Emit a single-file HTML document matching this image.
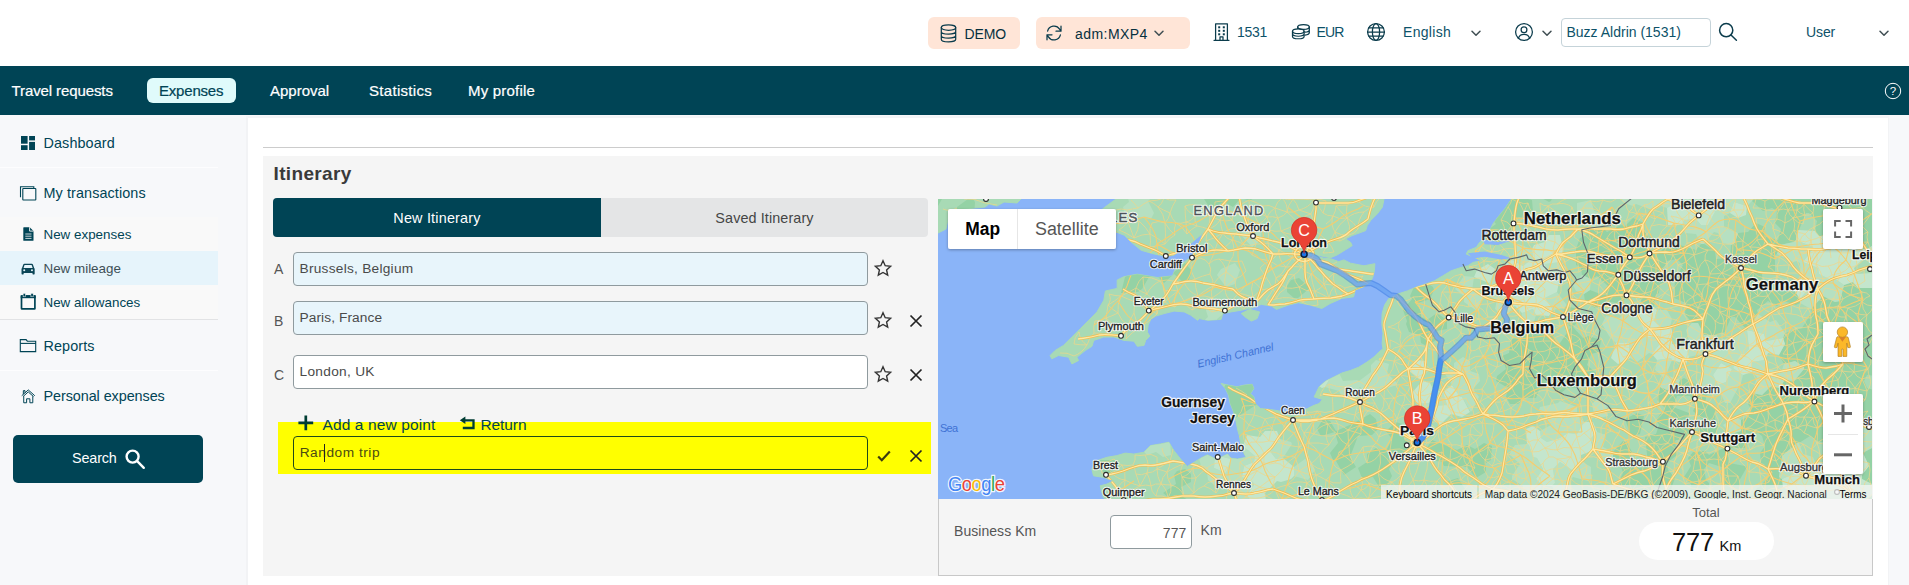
<!DOCTYPE html>
<html lang="en">
<head>
<meta charset="utf-8">
<title>New mileage</title>
<style>
*{box-sizing:border-box;margin:0;padding:0}
html,body{width:1909px;height:585px;overflow:hidden;background:#f7f8fa;font-family:"Liberation Sans",sans-serif;color:#004455}
.abs{position:absolute}
.t{position:absolute;white-space:nowrap;line-height:1}
svg{position:absolute;overflow:visible}
#top{position:absolute;left:0;top:0;width:1909px;height:66px;background:#fff}
.pill{position:absolute;top:17px;height:32px;background:#ffe5d7;border-radius:6px}
.tt{font-size:14px;color:#0d5269;top:25px}
.td{font-size:14px;color:#06303e;top:27px}
.ic{stroke:#0b3c4c;fill:none;stroke-width:1.25;stroke-linecap:round;stroke-linejoin:round}
#nav{position:absolute;left:0;top:66px;width:1909px;height:49px;background:#004455}
.nt{font-size:15px;color:#fff;top:16.800px;-webkit-text-stroke:.2px currentColor}
.st{font-size:14.4px;letter-spacing:.1px;color:#004455}
.st2{font-size:13.4px;letter-spacing:0;color:#004455}
.in{font-size:14px;letter-spacing:.1px;color:#4a4a4a}
.iv{font-size:13.700px;color:#4a4a4a}
.box{position:absolute;left:293px;width:575px;height:34px;border:1px solid #8f9a9e;border-radius:4px}
</style>
</head>
<body>
<div id="top">
  <div class="pill" style="left:928px;width:92px"></div>
  <div class="pill" style="left:1036px;width:154px"></div>
  <!-- database icon -->
  <svg class="ic" style="left:940px;top:24px" width="17" height="19" viewBox="0 0 17 19"><ellipse cx="8.5" cy="3.6" rx="7.2" ry="2.7"/><path d="M1.3,3.6v11.6c0,1.5 3.2,2.7 7.2,2.7s7.2,-1.2 7.2,-2.7V3.6M1.3,7.5c0,1.5 3.2,2.7 7.2,2.7s7.2,-1.2 7.2,-2.7M1.3,11.4c0,1.5 3.2,2.7 7.2,2.7s7.2,-1.2 7.2,-2.7"/></svg>
  <span class="t td" style="left:964.5px;letter-spacing:-.1px">DEMO</span>
  <!-- refresh icon -->
  <svg class="ic" style="left:1045px;top:24px" width="18" height="18" viewBox="0 0 18 18"><path d="M2.6,7.2A6.6,6.6 0 0 1 14.6,5.2L16,7.2M16,2.2v5h-5M15.4,10.8A6.6,6.6 0 0 1 3.4,12.8L2,10.8M2,15.8v-5h5"/></svg>
  <span class="t td" style="left:1075px;letter-spacing:.45px">adm:MXP4</span>
  <svg class="ic" style="left:1154px;top:30px;stroke-width:1.5;stroke:#3f4d52" width="10" height="7" viewBox="0 0 10 7"><path d="M1,1.2l4,4 4,-4"/></svg>
  <!-- building -->
  <svg class="ic" style="left:1213px;top:22px" width="17" height="20" viewBox="0 0 17 20"><path d="M2.6,18.2V1.8h11.8v16.4M1,18.3h15M7,18v-3.2h3V18" /><g fill="#0b3c4c" stroke="none"><rect x="5.2" y="4.3" width="2" height="2"/><rect x="9.8" y="4.3" width="2" height="2"/><rect x="5.2" y="7.8" width="2" height="2"/><rect x="9.8" y="7.8" width="2" height="2"/><rect x="5.2" y="11.3" width="2" height="2"/><rect x="9.8" y="11.3" width="2" height="2"/></g></svg>
  <span class="t tt" style="left:1237px;letter-spacing:-.3px">1531</span>
  <!-- coins -->
  <svg class="ic" style="left:1291px;top:23px" width="20" height="16.500" viewBox="0 0 20 18" preserveAspectRatio="none"><ellipse cx="12.5" cy="4.3" rx="5.8" ry="2.6"/><path d="M6.7,4.3v1.6M18.3,4.3v6.4c0,1.2 -1.8,2.2 -4.3,2.5M18.3,7.5c0,1.2 -1.8,2.2 -4.3,2.5"/><ellipse cx="7.3" cy="9" rx="5.8" ry="2.6"/><path d="M1.5,9v5.6c0,1.4 2.6,2.6 5.8,2.6s5.8,-1.2 5.8,-2.6V9M1.5,11.8c0,1.4 2.6,2.6 5.8,2.6s5.8,-1.2 5.8,-2.6"/></svg>
  <span class="t tt" style="left:1316.5px;letter-spacing:-.9px">EUR</span>
  <!-- globe -->
  <svg class="ic" style="left:1366px;top:22px" width="20" height="20" viewBox="0 0 20 20"><circle cx="10" cy="10" r="8.4"/><ellipse cx="10" cy="10" rx="3.6" ry="8.4"/><path d="M1.6,10h16.8M2.8,5.8h14.4M2.8,14.2h14.4"/></svg>
  <span class="t tt" style="left:1403px;letter-spacing:.3px">English</span>
  <svg class="ic" style="left:1471px;top:30px;stroke-width:1.5;stroke:#3f4d52" width="10" height="7" viewBox="0 0 10 7"><path d="M1,1.2l4,4 4,-4"/></svg>
  <!-- user -->
  <svg class="ic" style="left:1514px;top:22px" width="20" height="20" viewBox="0 0 20 20"><circle cx="10" cy="10" r="8.4"/><circle cx="10" cy="7.8" r="2.9"/><path d="M4.4,16.2c.8,-2.6 3,-3.8 5.6,-3.8s4.8,1.2 5.6,3.8"/></svg>
  <svg class="ic" style="left:1542px;top:30px;stroke-width:1.5;stroke:#3f4d52" width="10" height="7" viewBox="0 0 10 7"><path d="M1,1.2l4,4 4,-4"/></svg>
  <div class="abs" style="left:1561px;top:18px;width:150px;height:29px;border:1px solid #c5d3d9;border-radius:4px;background:#fff"></div>
  <span class="t tt" style="left:1566.5px">Buzz Aldrin (1531)</span>
  <svg class="ic" style="left:1718px;top:22px;stroke-width:1.5" width="20" height="20" viewBox="0 0 20 20"><circle cx="8.2" cy="8.2" r="6.6"/><path d="M13,13l5.4,5.2"/></svg>
  <span class="t tt" style="left:1806px;letter-spacing:-.1px">User</span>
  <svg class="ic" style="left:1879px;top:30px;stroke-width:1.5;stroke:#3f4d52" width="10" height="7" viewBox="0 0 10 7"><path d="M1,1.2l4,4 4,-4"/></svg>
</div>
<div id="nav">
  <span class="t nt" style="left:11.5px;letter-spacing:-.1px">Travel requests</span>
  <div class="abs" style="left:147px;top:12px;width:89px;height:25px;background:#e0fbfb;border-radius:6px"></div>
  <span class="t nt" style="left:159px;color:#004455;letter-spacing:-.2px">Expenses</span>
  <span class="t nt" style="left:270px">Approval</span>
  <span class="t nt" style="left:369px;letter-spacing:.3px">Statistics</span>
  <span class="t nt" style="left:468px;letter-spacing:.2px">My profile</span>
  <svg style="left:1884.100px;top:16px" width="18" height="18" viewBox="0 0 18 18"><circle cx="9" cy="9" r="7.700" fill="none" stroke="#fff" stroke-width="1"/><text x="9" y="13.200" font-size="11.500" fill="#fff" text-anchor="middle" font-family="Liberation Sans, sans-serif">?</text></svg>
</div>
<!-- sidebar -->
<div id="side">
  <div class="abs" style="left:0;top:167px;width:218px;height:1px;background:#fdfdfe"></div>
  <div class="abs" style="left:0;top:217px;width:218px;height:102px;background:#f9f9f9"></div>
  <div class="abs" style="left:0;top:251px;width:218px;height:34px;background:#e6f4fb"></div>
  <div class="abs" style="left:0;top:319px;width:218px;height:1px;background:#e2e3e5"></div>
  <div class="abs" style="left:0;top:370px;width:218px;height:1px;background:#fdfdfe"></div>
  <!-- dashboard icon -->
  <svg style="left:21px;top:136px" width="14" height="14" viewBox="0 0 14 14" fill="#004455"><rect x="0" y="0" width="6.6" height="7.7"/><rect x="8.1" y="0" width="5.9" height="4.4"/><rect x="0" y="9.2" width="6.6" height="4.8"/><rect x="8.1" y="5.9" width="5.9" height="8.1"/></svg>
  <span class="t st" style="left:43.5px;top:135.9px">Dashboard</span>
  <svg style="left:19px;top:185px" width="18" height="16" viewBox="0 0 18 16" fill="none" stroke="#004455" stroke-width="1.100"><path d="M1.500,12.200V1.700H14.800V3.400"/><rect x="3.800" y="3.500" width="13" height="11.500" rx=".5"/></svg>
  <span class="t st" style="left:43.5px;top:185.8px">My transactions</span>
  <!-- file icon -->
  <svg style="left:23px;top:227px" width="11" height="14" viewBox="0 0 11 14"><path d="M0.3,0.8a.6,.6 0 0 1 .6,-.6h5.8l3.8,3.8v9.2a.6,.6 0 0 1 -.6,.6h-9a.6,.6 0 0 1 -.6,-.6z" fill="#004455"/><path d="M6.6,.2v3.9h3.9" fill="none" stroke="#f9f9f9" stroke-width=".9"/><path d="M2.3,7h6.2M2.3,9.2h6.2M2.3,11.4h6.2" stroke="#f9f9f9" stroke-width=".8"/></svg>
  <span class="t st2" style="left:43.5px;top:227.5px">New expenses</span>
  <!-- car icon -->
  <svg style="left:21px;top:262.500px" width="14.200" height="11.800" viewBox="0 0 16 14" fill="#0a4556"><path d="M3.6,.8h8.8c.6,0 1.1,.4 1.3,.9l1.6,4.4c.3,.2 .5,.6 .5,1v5.7c0,.4 -.3,.7 -.7,.7h-1.2c-.4,0 -.7,-.3 -.7,-.7v-1H2.8v1c0,.4 -.3,.7 -.7,.7H.9c-.4,0 -.7,-.3 -.7,-.7V7.100c0,-.4 .2,-.8 .5,-1l1.600,-4.400c.2,-.5 .7,-.9 1.300,-.9z"/><path d="M3.800,2.400h8.400l1.200,3.400H2.600z" fill="#e6f4fb"/><circle cx="3.400" cy="8.600" r="1.200" fill="#e6f4fb"/><circle cx="12.600" cy="8.600" r="1.200" fill="#e6f4fb"/></svg>
  <span class="t st2" style="left:43.5px;top:261.5px;color:#3d4f56">New mileage</span>
  <!-- calendar icon -->
  <svg style="left:20px;top:293px" width="16" height="17" viewBox="0 0 16 17"><rect x="1.500" y="3" width="13.400" height="12.900" rx=".4" fill="none" stroke="#004455" stroke-width="1.700"/><rect x=".7" y="2.200" width="15" height="3" fill="#004455"/><rect x="3.100" y=".4" width="2.300" height="3.400" fill="#004455" stroke="#f9f9f9" stroke-width=".5"/><rect x="10.900" y=".4" width="2.300" height="3.400" fill="#004455" stroke="#f9f9f9" stroke-width=".5"/></svg>
  <span class="t st2" style="left:43.5px;top:295.5px">New allowances</span>
  <!-- folder icon -->
  <svg style="left:19px;top:338px" width="18" height="15" viewBox="0 0 18 15" fill="none" stroke="#004455" stroke-width="1.100"><path d="M1.300,13.600V1.600h5.800l1.200,1.600h8.400v10.400z"/><path d="M1.300,5.400h15.400"/></svg>
  <span class="t st" style="left:43.5px;top:338.800px">Reports</span>
  <!-- house icon -->
  <svg style="left:21px;top:388.500px" width="14.500" height="14.500" viewBox="0 0 16 16" fill="none" stroke="#004455" stroke-width="1.100" stroke-linejoin="round"><path d="M.8,7.400L8,1l7.200,6.400M2.200,8.400L8,3.200l5.800,5.200M3,8v7.200h3.200v-4.400h3.600v4.400H13V8M2.600,5.600V1.800h1.800v2.400"/></svg>
  <span class="t st" style="left:43.5px;top:388.800px;letter-spacing:-.07px">Personal expenses</span>
  <div class="abs" style="left:13px;top:435px;width:190px;height:48px;background:#004455;border-radius:5px"></div>
  <span class="t st" style="left:72px;top:451px;color:#fff;letter-spacing:-.15px">Search</span>
  <svg style="left:124px;top:448px" width="22" height="22" viewBox="0 0 22 22" fill="none" stroke="#fff" stroke-width="2.400"><circle cx="8.600" cy="8.600" r="6"/><path d="M13.200,13.200l6.600,6.600" stroke-linecap="round"/></svg>
</div>
<!-- main -->
<div id="main" class="abs" style="left:248px;top:118px;width:1640px;height:467px;background:#fff"></div>
<div class="abs" style="left:246px;top:117px;width:2px;height:468px;background:#f2f3f5"></div>
<div class="abs" style="left:1888px;top:117px;width:1px;height:468px;background:#f2f3f5"></div>
<div class="abs" style="left:246px;top:116px;width:1643px;height:2px;background:#f3f4f6"></div>
<div class="abs" style="left:263px;top:147px;width:1610px;height:1px;background:#ccc"></div>
<div class="abs" style="left:263px;top:156px;width:1610px;height:420px;background:#f5f5f5"></div>
<span class="t" style="left:273.500px;top:164px;font-size:19px;font-weight:bold;letter-spacing:.35px;color:#3a3a3a">Itinerary</span>
<!-- tabs -->
<div class="abs" style="left:273px;top:198px;width:655px;height:39px;background:#e4e5e6;border-radius:4px"></div>
<div class="abs" style="left:273px;top:198px;width:328px;height:39px;background:#004455;border-radius:4px 0 0 4px"></div>
<span class="t st" style="left:273px;width:328px;text-align:center;top:210.800px;color:#fff;letter-spacing:.2px">New Itinerary</span>
<span class="t st" style="left:601px;width:327px;text-align:center;top:210.800px;color:#454545">Saved Itinerary</span>
<!-- rows -->
<span class="t in" style="left:274px;top:262px;color:#555">A</span>
<div class="box" style="top:252px;background:#e8f5fb"></div>
<span class="t iv" style="left:299.500px;top:262.300px;letter-spacing:.26px">Brussels, Belgium</span>
<span class="t in" style="left:274px;top:314px;color:#555">B</span>
<div class="box" style="top:301px;background:#e8f5fb"></div>
<span class="t iv" style="left:299.500px;top:311.300px;letter-spacing:.1px">Paris, France</span>
<span class="t in" style="left:274px;top:367.800px;color:#555">C</span>
<div class="box" style="top:355px;background:#fff"></div>
<span class="t iv" style="left:299.500px;top:365.300px;letter-spacing:.3px">London, UK</span>
<!-- yellow -->
<div class="abs" style="left:278px;top:422px;width:653px;height:52px;background:#ffff00"></div>
<!-- add/return -->
<svg style="left:298px;top:415px" width="16" height="16" viewBox="0 0 16 16"><path d="M7.800,.6v14.600M.4,7.900h14.800" stroke="#003d33" stroke-width="2.700"/></svg>
<span class="t" style="left:322.500px;top:417px;font-size:15.500px;letter-spacing:.12px;color:#004455">Add a new point</span>
<svg style="left:459px;top:416px" width="17" height="14" viewBox="0 0 17 14" fill="none" stroke="#003d33" stroke-width="2.300"><path d="M5.500,4.300h9v7.700H3.800"/><path d="M6.400,.6L.8,4.300l5.600,3.700z" fill="#003d33" stroke="none"/></svg>
<span class="t" style="left:480.500px;top:417px;font-size:15.500px;letter-spacing:-.1px;color:#004455">Return</span>
<div class="box" style="top:436px;border:1.500px solid #1f4a1a"></div>
<span class="t iv" style="left:299.700px;top:446.300px;color:#4b4b12;letter-spacing:.53px">Random trip</span>
<div class="abs" style="left:324px;top:443.500px;width:1px;height:18px;background:#222"></div>
<!-- stars / x -->
<svg width="0" height="0" style="position:absolute"><defs>
<path id="star" d="M8,.8l2.200,4.900 5.400,.6 -4,3.600 1.100,5.200L8,12.500l-4.700,2.600 1.100,-5.200L.4,6.300l5.400,-.6z" fill="none" stroke="#333" stroke-width="1.400" stroke-linejoin="miter"/>
<path id="xx" d="M1.500,1.500l11,11M12.500,1.500l-11,11" fill="none" stroke="#222" stroke-width="1.700"/>
</defs></svg>
<svg style="left:875px;top:260px" width="16" height="16"><use href="#star"/></svg>
<svg style="left:875px;top:312px" width="16" height="16"><use href="#star"/></svg>
<svg style="left:875px;top:366px" width="16" height="16"><use href="#star"/></svg>
<svg style="left:909px;top:314px" width="14" height="14"><use href="#xx"/></svg>
<svg style="left:909px;top:368px" width="14" height="14"><use href="#xx"/></svg>
<svg style="left:909px;top:449px" width="14" height="14"><use href="#xx"/></svg>
<svg style="left:877px;top:450px" width="14" height="12" viewBox="0 0 14 12"><path d="M1.200,6.400l3.600,3.800L12.800,1.600" fill="none" stroke="#3a3a10" stroke-width="2.200"/></svg>
<!-- bottom box -->
<div class="abs" style="left:938px;top:499px;width:935px;height:77px;border:1px solid #c8c8c8;border-top:none"></div>
<span class="t in" style="left:954px;top:524px;color:#555;letter-spacing:.05px">Business Km</span>
<div class="abs" style="left:1110px;top:515px;width:82px;height:34px;border:1px solid #8f9a9e;border-radius:4px;background:#fff"></div>
<span class="t in" style="left:1110px;width:76.500px;text-align:right;top:526px;color:#555">777</span>
<span class="t in" style="left:1200.500px;top:523px;color:#555">Km</span>
<span class="t" style="left:1656px;width:100px;text-align:center;top:506.300px;font-size:13px;color:#555">Total</span>
<div class="abs" style="left:1639px;top:522px;width:135px;height:38px;border-radius:19px;background:#fff"></div>
<span class="t" style="left:1672px;top:529.500px;font-size:25.500px;letter-spacing:-.2px;color:#111">777</span>
<span class="t" style="left:1719.500px;top:538.500px;font-size:14.500px;color:#111">Km</span>
<!-- map -->
<svg id="map" style="left:938px;top:199px;overflow:hidden;font-family:'Liberation Sans',sans-serif" width="934" height="300" viewBox="0 0 934 300"><defs><filter id="sh" x="-10%" y="-10%" width="120%" height="130%"><feDropShadow dx="0" dy="1" stdDeviation="1.5" flood-color="#000" flood-opacity=".3"/></filter></defs><defs><clipPath id="landclip"><path d="M178.0,-2.0 178.0,0.0 166.3,8.6 160.0,14.0 158.0,22.0 165.0,30.0 178.0,32.9 186.4,36.3 193.0,43.0 203.2,51.3 215.0,54.7 226.7,57.2 235.0,56.4 248.5,48.0 258.5,39.6 263.5,35.4 266.0,31.0 262.0,42.0 253.5,58.0 243.4,64.7 236.7,71.5 234.5,76.9 219.4,78.5 199.3,75.2 185.9,77.7 179.2,81.0 179.2,89.4 167.4,92.0 165.8,101.2 159.0,112.9 150.7,121.3 142.3,129.7 133.9,138.0 125.5,146.4 117.1,151.5 112.1,156.5 113.8,159.8 120.5,156.5 130.6,158.2 133.9,164.9 140.6,161.5 138.9,158.2 147.3,151.5 154.0,147.3 155.7,141.4 165.8,138.0 175.8,138.0 185.9,141.4 195.9,142.2 199.3,147.3 206.0,146.4 207.7,141.4 211.8,137.2 209.3,133.0 210.2,126.3 212.7,120.4 217.7,117.1 226.1,114.6 236.1,112.1 246.2,112.9 252.9,116.3 259.6,121.3 261.3,119.6 269.7,121.3 283.1,120.4 284.8,114.6 293.1,112.9 303.2,111.2 314.9,108.7 323.3,105.4 333.4,107.0 338.4,110.4 350.1,106.2 360.2,103.7 372.0,106.0 383.8,109.5 392.2,104.5 403.9,99.4 415.6,97.8 417.3,91.0 425.7,87.7 432.4,82.7 434.7,78.5 436.4,71.8 436.9,64.7 426.0,66.8 412.6,64.2 405.9,60.9 400.8,62.6 392.5,59.7 385.8,59.2 379.0,57.5 372.0,56.5 379.0,55.9 385.8,57.5 392.5,58.7 399.2,55.9 407.5,50.8 414.2,46.6 412.6,43.3 407.5,39.9 414.2,36.6 421.0,34.1 427.7,31.6 429.3,26.5 432.7,21.5 439.4,14.8 444.4,8.1 446.0,0.0 446.0,-2.0Z"/><path d="M-2.0,-2.0 83.0,-2.0 83.0,0.0 79.0,4.0 66.0,3.0 59.0,7.0 51.0,5.0 47.0,8.0 26.0,10.0 10.0,20.0 8.0,30.0 0.0,34.0 -2.0,35.0Z"/><path d="M303.2,114.6 311.6,110.4 321.6,112.9 319.1,119.6 313.3,122.1 308.2,118.8Z"/><path d="M573.5,-2.0 573.5,0.0 566.8,9.8 560.0,18.1 555.0,24.8 551.7,31.6 546.7,38.3 541.6,43.3 538.3,48.3 529.9,51.7 528.2,55.0 536.6,58.4 543.3,61.7 534.9,63.4 529.9,66.8 523.2,68.4 513.1,71.8 504.8,76.8 496.4,81.8 489.4,84.4 479.3,87.7 469.3,91.9 459.2,95.2 450.8,99.4 446.6,106.1 444.1,114.5 443.8,124.6 445.0,134.6 444.1,144.7 445.0,149.7 440.8,153.1 435.8,158.1 429.0,163.1 420.7,168.2 412.3,171.5 403.9,174.0 396.2,177.8 387.8,182.0 381.1,187.8 377.8,194.6 376.1,197.9 384.5,200.4 381.1,204.6 376.1,206.3 369.4,209.6 362.7,212.2 352.6,213.8 342.6,212.2 332.5,210.5 322.5,209.6 317.4,204.6 315.8,197.9 312.4,194.6 315.8,189.5 314.1,185.3 305.7,186.2 299.0,187.8 290.6,186.2 283.1,184.5 287.3,189.5 290.6,196.2 292.3,204.6 295.6,213.0 298.2,223.0 299.8,231.4 301.3,236.5 303.0,246.6 306.3,255.0 308.0,258.3 299.6,260.0 292.9,259.2 289.6,255.0 282.9,258.3 276.1,259.2 269.4,255.8 262.7,259.2 256.0,263.3 249.3,267.5 242.6,260.0 235.9,251.6 230.9,243.2 222.5,244.9 212.5,246.6 205.8,253.3 195.7,255.0 187.3,254.1 178.9,256.6 168.9,258.3 158.8,261.7 153.8,270.0 155.5,276.8 165.5,278.4 175.6,281.8 168.9,285.1 162.2,286.8 163.8,293.5 165.5,298.5 170.6,302.0 936.0,302.0 936.0,-2.0Z"/></clipPath><clipPath id="mapclip"><rect width="934" height="300"/></clipPath></defs>
<g clip-path="url(#mapclip)">
<rect width="934" height="300" fill="#8ab4f8"/>
<path d="M178.0,-2.0 178.0,0.0 166.3,8.6 160.0,14.0 158.0,22.0 165.0,30.0 178.0,32.9 186.4,36.3 193.0,43.0 203.2,51.3 215.0,54.7 226.7,57.2 235.0,56.4 248.5,48.0 258.5,39.6 263.5,35.4 266.0,31.0 262.0,42.0 253.5,58.0 243.4,64.7 236.7,71.5 234.5,76.9 219.4,78.5 199.3,75.2 185.9,77.7 179.2,81.0 179.2,89.4 167.4,92.0 165.8,101.2 159.0,112.9 150.7,121.3 142.3,129.7 133.9,138.0 125.5,146.4 117.1,151.5 112.1,156.5 113.8,159.8 120.5,156.5 130.6,158.2 133.9,164.9 140.6,161.5 138.9,158.2 147.3,151.5 154.0,147.3 155.7,141.4 165.8,138.0 175.8,138.0 185.9,141.4 195.9,142.2 199.3,147.3 206.0,146.4 207.7,141.4 211.8,137.2 209.3,133.0 210.2,126.3 212.7,120.4 217.7,117.1 226.1,114.6 236.1,112.1 246.2,112.9 252.9,116.3 259.6,121.3 261.3,119.6 269.7,121.3 283.1,120.4 284.8,114.6 293.1,112.9 303.2,111.2 314.9,108.7 323.3,105.4 333.4,107.0 338.4,110.4 350.1,106.2 360.2,103.7 372.0,106.0 383.8,109.5 392.2,104.5 403.9,99.4 415.6,97.8 417.3,91.0 425.7,87.7 432.4,82.7 434.7,78.5 436.4,71.8 436.9,64.7 426.0,66.8 412.6,64.2 405.9,60.9 400.8,62.6 392.5,59.7 385.8,59.2 379.0,57.5 372.0,56.5 379.0,55.9 385.8,57.5 392.5,58.7 399.2,55.9 407.5,50.8 414.2,46.6 412.6,43.3 407.5,39.9 414.2,36.6 421.0,34.1 427.7,31.6 429.3,26.5 432.7,21.5 439.4,14.8 444.4,8.1 446.0,0.0 446.0,-2.0Z" fill="#a8dab5" stroke="#a8dab5" stroke-width="1" stroke-linejoin="round"/>
<path d="M-2.0,-2.0 83.0,-2.0 83.0,0.0 79.0,4.0 66.0,3.0 59.0,7.0 51.0,5.0 47.0,8.0 26.0,10.0 10.0,20.0 8.0,30.0 0.0,34.0 -2.0,35.0Z" fill="#a8dab5" stroke="#a8dab5" stroke-width="1" stroke-linejoin="round"/>
<path d="M303.2,114.6 311.6,110.4 321.6,112.9 319.1,119.6 313.3,122.1 308.2,118.8Z" fill="#a8dab5" stroke="#a8dab5" stroke-width="1" stroke-linejoin="round"/>
<path d="M573.5,-2.0 573.5,0.0 566.8,9.8 560.0,18.1 555.0,24.8 551.7,31.6 546.7,38.3 541.6,43.3 538.3,48.3 529.9,51.7 528.2,55.0 536.6,58.4 543.3,61.7 534.9,63.4 529.9,66.8 523.2,68.4 513.1,71.8 504.8,76.8 496.4,81.8 489.4,84.4 479.3,87.7 469.3,91.9 459.2,95.2 450.8,99.4 446.6,106.1 444.1,114.5 443.8,124.6 445.0,134.6 444.1,144.7 445.0,149.7 440.8,153.1 435.8,158.1 429.0,163.1 420.7,168.2 412.3,171.5 403.9,174.0 396.2,177.8 387.8,182.0 381.1,187.8 377.8,194.6 376.1,197.9 384.5,200.4 381.1,204.6 376.1,206.3 369.4,209.6 362.7,212.2 352.6,213.8 342.6,212.2 332.5,210.5 322.5,209.6 317.4,204.6 315.8,197.9 312.4,194.6 315.8,189.5 314.1,185.3 305.7,186.2 299.0,187.8 290.6,186.2 283.1,184.5 287.3,189.5 290.6,196.2 292.3,204.6 295.6,213.0 298.2,223.0 299.8,231.4 301.3,236.5 303.0,246.6 306.3,255.0 308.0,258.3 299.6,260.0 292.9,259.2 289.6,255.0 282.9,258.3 276.1,259.2 269.4,255.8 262.7,259.2 256.0,263.3 249.3,267.5 242.6,260.0 235.9,251.6 230.9,243.2 222.5,244.9 212.5,246.6 205.8,253.3 195.7,255.0 187.3,254.1 178.9,256.6 168.9,258.3 158.8,261.7 153.8,270.0 155.5,276.8 165.5,278.4 175.6,281.8 168.9,285.1 162.2,286.8 163.8,293.5 165.5,298.5 170.6,302.0 936.0,302.0 936.0,-2.0Z" fill="#a8dab5" stroke="#a8dab5" stroke-width="1" stroke-linejoin="round"/>
<g clip-path="url(#landclip)">
<path d="M0,7 4,-0 10,-2 11,-5 -5,-5 -5,8ZM30,-0 19,8 18,14 22,17 36,18 37,3 35,0 37,-5 26,-5ZM272,9 274,9 286,3 295,8 303,-1 312,2 319,-4 319,-5 268,-5 266,-0ZM200,93 204,90 211,78 218,76 226,84 236,75 246,84 251,81 254,72 247,64 236,73 228,66 221,69 212,59 208,60 203,69 193,72 191,75 187,78 183,94ZM349,93 356,99 360,99 372,89 361,79 353,81 349,87ZM469,122 468,125 471,133 482,136 483,144 487,146 497,142 498,132 509,130 509,121 499,114 489,121 484,118 480,104 492,100 496,91 495,88 492,86 476,88 472,97 474,100 465,111ZM276,196 275,206 284,215 287,216 293,222 318,206 328,207 334,191 331,187 319,188 315,170 305,171 300,185 289,183 283,194ZM392,222 385,220 379,230 383,237 397,233 400,244 392,254 395,261 398,262 406,276 418,268 412,258 420,237 434,236 440,230 438,220 432,215 414,225 398,232ZM438,249 429,255 429,263 420,269 424,279 435,278 441,288 448,288 454,277 451,270 460,258 464,258 470,247 469,241 466,240 464,225 458,223 448,232 454,240 449,250 444,251ZM493,261 504,263 506,267 529,268 538,279 548,273 548,264 553,261 554,247 546,244 537,250 529,246 519,251 494,241 487,252 488,255ZM179,268 178,261 161,261 158,254 147,253 142,259 142,269 151,272 160,267 169,277ZM235,302 235,305 252,305 252,302 245,298 243,288 253,283 253,275 247,270 239,272 236,276 238,285 225,294ZM527,290 520,279 510,282 512,294 519,298ZM600,-3 611,3 613,2 616,-5 600,-5ZM586,-1 584,-5 569,-5 570,3 565,7 554,4 551,17 558,25 547,33 540,28 530,33 530,38 538,44 547,40 557,47 563,42 565,33 573,31 577,20 581,18 586,19 595,13 594,1ZM638,66 643,69 644,76 653,80 659,77 670,87 665,96 652,91 646,95 647,103 657,109 663,107 667,102 684,105 687,99 701,95 705,108 716,108 718,96 721,94 722,85 736,80 726,69 729,62 739,60 745,66 737,81 736,99 748,104 747,115 754,124 760,124 766,136 779,136 787,133 793,118 797,118 809,131 820,115 819,111 830,102 839,107 846,102 858,106 862,104 862,100 852,85 846,84 843,89 830,92 825,89 824,75 837,73 837,56 839,55 842,46 856,43 858,41 859,32 861,31 868,14 871,14 879,22 877,32 881,37 894,38 896,33 895,26 905,14 909,14 914,30 917,32 916,46 928,51 935,46 937,36 939,33 939,16 937,4 939,4 939,-5 902,-5 898,-3 894,-5 881,-5 879,-3 869,-5 853,-5 852,-3 846,-5 837,-5 833,-2 829,-5 824,-5 815,-0 814,2 825,12 834,9 839,12 837,24 843,30 840,41 828,38 827,28 818,24 810,33 800,34 797,44 793,46 792,59 778,60 777,52 766,45 763,45 758,51 732,43 723,52 714,52 712,50 713,39 705,32 706,24 695,19 687,27 683,26 669,33 664,28 651,30 647,37 642,39 638,50ZM640,110 628,107 626,109 629,125 633,128 622,144 618,145 613,127 598,133 594,129 589,129 580,139 573,140 571,154 564,157 568,170 559,177 558,182 570,189 568,198 572,205 580,205 586,199 598,199 601,191 612,188 622,195 629,189 642,189 646,187 658,176 658,174 649,166 653,155 661,153 663,141 650,137 645,139 635,128 643,119ZM682,302 687,305 700,305 702,301 711,299 715,287 732,293 737,279 730,271 729,264 739,256 737,242 738,241 752,241 758,234 749,225 751,214 735,208 739,197 752,197 758,206 755,212 766,222 759,234 768,240 776,237 781,226 777,220 778,211 767,203 770,192 746,179 742,181 737,194 722,188 719,201 727,209 718,221 721,226 718,235 707,238 710,264 708,268 701,269 693,258 694,253 688,242 685,242 675,253 675,262 682,264 685,274 681,282 683,290 681,293 665,294 664,296 651,300 648,295 633,296 629,301 631,305 679,305ZM693,237 702,235 706,217 704,216 699,214 687,220ZM746,278 753,285 752,298 759,303 760,305 840,305 836,297 845,288 844,280 841,278 844,257 859,244 861,244 872,237 881,243 885,243 894,255 903,254 906,243 905,240 910,228 908,225 911,216 897,206 906,197 912,196 920,202 916,213 926,221 939,218 939,192 929,189 926,182 929,176 939,177 939,85 935,89 920,89 915,83 906,86 902,102 897,103 885,97 873,110 874,113 864,129 847,134 845,139 847,145 841,156 846,165 857,162 866,168 866,170 856,182 847,181 841,189 833,187 824,196 814,194 810,205 813,210 810,218 803,221 803,232 793,235 791,249 807,249 811,238 820,234 824,237 827,247 822,254 823,264 826,265 832,277 821,288 819,289 811,301 798,302 802,285 801,282 809,268 807,267 791,264 790,250 786,249 771,256 767,252 755,253 750,259 753,267ZM771,264 787,269 787,298 780,301 771,296 771,284 768,281 766,270ZM937,239 934,249 925,254 931,267 924,276 924,280 934,285 937,293 929,301 930,305 939,305 939,239ZM739,301 733,295 720,305 739,305Z" fill="#94d2a5" fill-rule="evenodd"/>
<path d="M187,17 196,21 200,18 213,20 216,14 210,2 218,-5 189,-5 191,3 185,8ZM322,42 323,35 319,28 313,27 303,34 303,36 314,48ZM283,70 279,76 288,88 297,85 302,71 297,64ZM280,130 279,120 285,115 285,108 274,101 267,108 270,118 262,125 262,128 271,137ZM516,164 516,168 507,175 522,198 524,198 533,213 541,198 535,190 542,182 541,175 532,172 532,162 525,158ZM419,181 405,182 400,172 396,172 387,188 401,192 403,196 411,197 422,188 427,192 440,192 459,186 459,184 449,174 451,165 438,161 433,166 433,173 421,182ZM475,218 480,223 494,220 493,207 509,206 505,193 495,190 491,204 479,205 475,212ZM216,236 201,247 209,256 218,253 225,258 233,256 232,241 218,238ZM284,239 282,240 275,247 275,254 261,259 264,271 269,273 270,281 280,289 282,288 297,293 299,296 296,305 313,305 314,304 309,296 316,286 315,283 304,278 306,267 316,263 317,257 305,247 298,250ZM293,260 288,274 276,269 277,256ZM342,240 331,251 338,260 345,259 354,245 353,243ZM370,281 377,271 373,262 367,260 356,268 356,277ZM462,296 451,293 448,305 465,305ZM666,15 656,12 653,1 639,4 639,16 647,19 651,30 664,28ZM574,61 585,67 595,59 594,50 580,45 577,47ZM628,69 623,63 607,65 608,78 621,83 625,82ZM551,84 548,96 559,101 557,110 567,119 575,108 564,99 567,89 572,86 564,69 557,70 552,83ZM635,86 638,92 646,95 652,91 653,80 644,76ZM541,111 545,98 534,92 536,78 526,77 517,90 526,97 526,103 539,112ZM607,99 615,111 626,109 628,107 628,105 619,93ZM598,116 595,110 584,114 583,122 589,129 594,129ZM603,239 609,243 622,239 630,234 639,235 646,223 639,216 639,208 622,202 620,204 602,208 601,211 613,225 613,226 602,232ZM657,251 661,262 669,266 675,262 675,253 665,248 668,236 659,233 652,240ZM572,256 582,265 574,277 574,280 585,287 584,297 586,298 599,297 604,286 598,280 605,270 599,259 595,258 591,246 589,245 577,246 572,254ZM615,270 617,284 614,287 619,299 629,301 633,296 633,280 635,278 650,282 653,280 653,268 643,262 634,271 622,263ZM566,300 559,301 546,293 542,293 539,303 540,305 569,305 568,301ZM735,-5 710,-5 702,-4 701,-5 685,-5 684,2 686,4 695,7 698,5 714,11 720,6 729,9 734,6 743,10 754,3 761,11 774,8 777,13 770,26 763,26 758,20 746,21 744,26 747,34 758,35 763,45 766,45 776,33 780,34 785,44 793,46 797,44 800,34 786,28 786,17 792,14 796,3 809,7 814,2 815,-0 812,-5 798,-5 795,0 785,-3 785,-5 767,-5 754,-2 752,-5 739,-5 736,-4ZM716,122 724,129 732,128 734,120 729,111 719,111ZM671,137 678,144 691,144 692,159 699,163 711,154 714,155 721,146 718,138 709,138 699,116 687,113 682,119 668,117 664,125ZM751,142 748,146 751,158 767,154 769,156 765,171 766,173 758,186 770,192 780,188 787,204 792,204 800,189 802,188 805,176 795,169 803,155 807,155 811,150 809,131 826,135 828,142 845,139 847,134 838,121 832,123 820,115 809,131 796,138 796,150 788,151 780,144 779,136 766,136 760,124 754,124 748,131ZM783,164 794,170 788,183 780,186 775,176ZM728,176 734,161 733,159 719,161 717,171 725,178 722,188 737,194 742,181ZM657,220 670,217 668,204 660,199 654,205ZM905,14 895,26 896,33 914,30 909,14ZM839,55 855,63 859,62 862,64 863,79 872,83 872,88 862,100 862,104 873,110 885,97 897,103 902,102 906,86 896,79 891,80 881,75 880,69 865,63 875,50 875,48 858,41 856,43 842,46ZM937,36 935,46 928,51 929,56 937,65 934,74 939,85 939,33ZM814,194 824,196 833,187 841,189 847,181 856,182 866,170 866,168 857,162 846,165 844,171 831,171 827,161 814,163 814,173 819,178ZM798,218 785,226 793,235 803,232 803,221ZM921,231 923,234 918,243 906,243 903,254 910,261 934,249 937,239 939,239 939,218 926,221ZM875,269 877,263 875,258 865,255 861,244 859,244 844,257 841,278 844,280 860,273 862,274ZM920,296 910,304 910,305 930,305 929,301ZM894,303 890,301 885,305 894,305ZM856,300 851,305 860,305Z" fill="#b6e0c1" fill-rule="evenodd"/>
<path d="M572,86 567,89 564,99 575,108 577,107 584,114 595,110 598,116 611,117 615,111 607,99 619,93 621,83 608,78 607,65 623,63 625,50 622,36 610,36 607,43 596,46 594,50 595,59 585,67 574,61 571,62 564,69ZM551,84 552,83 557,70 550,65 539,71 536,78ZM495,190 492,184 485,182 488,162 477,161 471,172 484,182 474,194 479,205 491,204ZM375,183 384,189 387,188 396,172 389,166 378,166 373,174ZM502,226 513,215 524,218 532,213 524,198 522,198 514,186 505,193 509,206 493,207 494,220ZM588,230 589,245 591,246 595,258 599,259 605,270 598,280 604,286 614,287 617,284 615,270 622,263 634,271 643,262 643,256 656,251 652,240 659,233 655,223 646,223 639,235 630,234 622,239 609,243 603,239 602,232 595,227ZM306,267 304,278 315,283 316,286 309,296 314,304 328,302 327,294 339,282 343,283 353,280 356,277 356,268 345,259 338,260 331,251 342,240 339,232 327,232 322,238 309,236 305,247 317,257 316,263ZM277,256 276,269 288,274 293,260ZM754,-2 767,-5 752,-5ZM809,7 796,3 792,14 800,19 808,16ZM744,26 746,21 758,20 763,26 770,26 777,13 774,8 761,11 754,3 743,10 734,6 729,9 730,26ZM721,146 714,155 719,161 733,159 734,161 748,165 751,158 748,146 734,145 734,131 732,128 724,129 716,122 719,111 716,108 705,108 699,116 709,138 718,138ZM809,131 811,150 807,155 803,155 795,169 805,176 814,173 814,163 827,161 830,154 841,156 847,145 845,139 828,142 826,135ZM680,165 692,159 691,144 678,144 673,159ZM780,186 788,183 794,170 783,164 775,176ZM875,50 865,63 880,69 881,75 891,80 896,79 906,86 915,83 920,89 935,89 939,85 934,74 918,75 916,69 929,56 928,51 916,46 911,49 894,37 881,37 877,32 861,31 859,32 858,41 875,48ZM863,79 852,85 862,100 872,88 872,83ZM906,243 918,243 923,234 921,231 910,228 905,240ZM910,261 903,254 894,255 889,263 877,263 875,269 862,274 860,273 844,280 845,288 857,295 856,300 860,305 885,305 890,301 894,303 905,301 910,304 920,296 929,301 937,293 934,285 924,280 924,276 931,267 925,254Z" fill="#c4e6cd" fill-rule="evenodd"/>
<path d="M379,212Q374,214 369,213M361,248Q353,247 345,245M806,11Q804,15 800,19M859,229Q854,229 851,234M917,114Q914,111 910,109M837,221Q836,227 840,232M900,194Q904,196 908,198M917,114Q921,118 922,122M209,95Q203,93 198,89M839,78Q841,72 839,67M783,261Q786,257 790,255M254,111Q260,105 260,97M361,272Q367,268 373,265M661,111Q657,107 653,106M771,222Q777,223 781,227M848,164Q844,158 837,157M861,109Q866,109 870,109M311,25Q309,31 312,36M809,241Q806,247 803,252M588,177Q588,171 583,168M828,126Q826,135 819,139M540,294Q536,296 531,297M638,49Q631,51 625,50M551,87Q547,91 548,96M724,152Q730,150 736,152M209,274Q212,280 213,287M421,3Q426,-1 433,-2M670,196Q676,199 682,196M668,283Q666,287 667,292M835,30Q835,24 830,21M687,148Q690,144 691,140M605,142Q610,142 614,142M873,119Q874,124 870,128M311,25Q305,27 301,30M802,88Q804,84 807,81M311,1Q318,3 325,7M563,133Q556,131 549,134M669,95Q669,100 669,105M751,182Q753,176 759,173M541,149Q543,153 545,157M535,191Q540,191 544,190M305,45Q300,38 301,30M542,203Q538,205 534,208M594,289Q596,294 601,295M399,235Q394,240 391,246M674,297Q676,293 675,288M538,106Q534,107 530,108M662,55Q667,51 674,52M246,102Q241,103 237,108M644,150Q649,154 651,160M467,241Q467,233 469,226M746,30Q752,31 758,30M634,94Q633,89 632,83M624,282Q629,282 633,280M931,264Q933,271 931,279M560,116Q559,108 561,100M694,95Q701,97 707,94M227,45Q231,39 237,36M841,180Q845,179 849,177M515,230Q512,228 508,225M867,287Q862,286 857,285M285,34Q279,42 277,51M677,31Q681,36 686,40M791,246Q790,240 788,234M880,162Q881,158 884,154M572,95Q572,89 569,83M484,114Q483,122 485,129M630,228Q630,235 627,240M331,242Q327,236 322,233M462,261Q459,269 463,276M573,27Q573,22 574,16M468,299Q473,296 476,292M748,232Q751,238 751,244M845,34Q848,37 851,41M769,105Q763,105 760,109M502,181Q503,174 500,167M697,40Q691,44 687,50M606,100Q610,104 615,107M463,147Q458,143 452,141M285,34Q277,39 268,42M674,248Q676,240 681,234M515,230Q520,234 524,238M638,49Q642,48 644,44M470,166Q472,161 472,156M830,68Q834,65 839,67M504,200Q503,195 503,190M931,264Q929,270 923,273M801,114Q805,112 806,107M569,117Q571,112 569,108M784,74Q790,76 795,78M566,265Q571,267 576,265M624,282Q628,286 633,289M900,107Q900,112 898,116M731,74Q727,72 722,71M705,175Q706,180 710,182M605,264Q600,269 595,273M618,300Q619,295 615,291M851,41Q856,43 862,42M685,158Q692,162 699,165M896,148Q889,150 884,154M903,74Q899,75 894,76M520,203Q516,202 514,197M195,266Q197,270 198,275M806,55Q804,48 805,42M561,76Q565,71 571,69M574,221Q575,216 580,213M749,44Q745,48 745,54M721,185Q723,189 727,192M627,63Q622,64 620,69M710,58Q711,51 715,45M774,138Q779,140 784,143M485,129Q479,130 475,135M839,289Q841,282 844,274M824,49Q821,45 819,41M531,68Q540,67 546,62M798,99Q794,100 790,99M803,252Q799,245 796,238M806,107Q809,104 812,101M800,277Q799,283 793,288M257,80Q252,73 253,65M916,278Q915,282 912,286M601,217Q606,219 608,225M396,74Q394,80 397,86M587,89Q585,94 586,100M332,62Q334,71 338,79M751,150Q745,148 742,143M588,177Q596,179 603,176M373,61Q379,61 382,66M626,295Q629,290 633,289M589,27Q590,31 586,35M750,126Q754,121 758,117M802,198Q800,204 796,208M660,259Q656,257 651,258M632,114Q631,110 633,105M927,82Q922,87 915,86M694,225Q697,228 702,228M520,203Q519,209 522,214M508,225Q510,221 514,218M723,266Q726,263 726,259M715,174Q709,173 705,175M879,244Q885,244 890,247M605,201Q605,207 608,212M669,222Q662,218 654,218M811,90Q809,86 807,81M650,172Q644,171 639,173M390,43Q384,37 377,31M923,141Q927,145 932,144M791,86Q798,91 798,99M789,268Q787,264 783,261M578,276Q576,280 572,283M573,27Q577,25 581,23M645,297Q641,300 635,300M452,251Q455,258 462,261M495,151Q487,146 478,146M624,24Q628,21 630,16M735,196Q738,191 744,188M769,6Q764,7 761,10M837,221Q832,222 828,226M742,81Q747,80 750,76M841,180Q835,180 829,180M560,89Q554,93 548,96M616,223Q612,224 608,225M757,142Q762,142 767,143M765,254Q772,255 778,251M688,22Q694,19 699,15M709,35Q713,32 713,27M861,109Q863,113 864,118M915,86Q921,89 924,93M537,168Q541,162 545,157M544,224Q546,230 544,236M774,168Q778,163 784,160M761,282Q761,286 759,290M687,148Q695,148 700,154M670,19Q664,18 657,20M668,214Q672,212 677,215M784,74Q781,71 778,68M801,114Q803,119 806,123M356,76Q349,81 348,89M737,8Q732,4 726,4M899,92Q898,97 895,100M452,251Q447,254 442,254M661,12Q656,7 652,2M662,55Q657,58 651,60M521,190Q528,193 535,191M479,215Q474,218 469,216M537,269Q534,264 534,259M593,300Q597,298 601,295M857,269Q861,273 864,278M905,27Q908,23 908,19M896,20Q893,14 886,10M669,39Q672,45 674,52M890,247Q896,253 899,260M654,288Q652,281 654,276M762,154Q766,157 771,159M700,103Q691,103 686,110M916,278Q920,276 923,273M288,73Q279,78 275,87M246,297Q243,288 244,278M349,13Q355,18 360,24M853,106Q848,105 843,105M500,232Q504,234 509,237M677,31Q673,29 668,28M644,287Q637,285 633,280M360,295Q351,298 342,302M287,89Q292,84 297,80M612,150Q613,146 614,142M537,168Q533,172 527,173M220,8Q226,15 227,24M514,246Q508,246 502,243M879,229Q874,228 869,226M562,182Q565,178 568,174M550,164Q549,160 545,157M223,285Q219,278 219,270M819,55Q823,53 824,49M219,115Q220,108 215,103M926,71Q922,74 917,75M715,101Q712,96 707,94M781,99Q779,95 780,90M636,38Q640,41 644,44M636,28Q633,22 630,16M443,225Q440,229 434,230M202,287Q206,280 209,274M781,28Q774,29 768,32M669,271Q664,271 659,268M647,133Q639,130 633,125M499,271Q501,267 501,262M370,300Q367,292 369,284M849,298Q849,294 849,289M911,68Q907,63 901,63M561,213Q565,207 568,201M878,65Q882,60 886,53M818,19Q820,26 818,32M561,213Q557,214 553,217M521,106Q525,106 530,108M578,257Q581,253 585,251M598,106Q597,111 595,116M651,258Q656,255 658,249M802,173Q800,168 798,164M636,28Q638,33 636,38M703,143Q701,148 700,154M828,292Q833,297 838,302M781,99Q782,106 782,113M550,177Q549,184 544,190M538,242Q534,240 532,235M914,10Q907,9 901,12M651,182Q657,181 663,178M624,282Q620,287 615,291M517,128Q514,124 516,119M915,54Q919,50 924,50M635,300Q633,295 633,289M278,294Q277,288 275,282M769,105Q764,101 764,95M324,91Q319,94 315,98M554,53Q546,53 539,55M304,62Q298,63 292,62M270,30Q272,23 272,16M878,88Q883,85 885,80M834,105Q835,110 833,114M702,228Q701,233 698,237M581,288Q575,288 572,291M373,15Q367,13 361,11M668,148Q671,142 674,136M847,3Q848,7 850,11M913,131Q907,132 902,132M828,292Q824,289 823,285M903,205Q904,200 908,198M363,35Q352,37 343,32M350,218Q349,223 346,227M190,23Q188,17 189,11M230,299Q237,295 246,297M223,285Q228,286 233,286M553,288Q556,293 561,295M784,143Q790,147 791,154M755,98Q749,95 745,92M572,291Q575,297 582,297M281,60Q287,61 292,62M715,2Q715,6 715,11M624,201Q631,198 639,197M720,61Q724,64 729,65M459,220Q457,227 455,234M784,74Q788,69 787,62M793,288Q794,294 793,301M606,235Q611,239 617,242M924,27Q927,30 930,33M266,287Q269,283 275,282M900,107Q895,109 891,108M523,247Q527,249 531,247M735,56Q738,61 740,66M312,36Q319,32 321,25M630,228Q626,233 620,234M745,197Q749,194 754,193M549,134Q552,140 552,146M720,61Q716,53 715,45M514,246Q510,242 509,237M645,297Q647,292 644,287M458,186Q460,193 467,196M883,216Q880,219 875,219M573,27Q570,22 563,21M209,274Q212,265 207,256M337,9Q331,5 325,7M826,246Q818,246 812,251M924,159Q927,165 930,170M864,118Q867,123 870,128M760,71Q758,64 756,56M729,145Q727,148 724,152M721,108Q719,104 715,101M815,174Q822,174 827,171M743,132Q745,138 742,143M235,82Q229,80 222,82M743,178Q739,175 736,172M794,57Q799,54 806,55M846,225Q842,222 837,221M928,301Q924,296 925,290M531,161Q525,162 520,167M883,216Q879,222 879,229M790,213Q783,212 777,214M740,66Q746,69 750,76M550,248Q552,243 554,237M661,12Q658,16 657,20M657,193Q655,196 651,199M418,87Q412,87 407,89M732,135Q727,136 722,139M447,187Q451,194 456,199M421,3Q427,9 436,8M885,102Q883,95 887,89M834,147Q836,152 837,157M572,291Q570,296 568,301M818,19Q824,19 830,21M183,97Q177,102 170,106M338,79Q338,85 335,90M616,54Q614,49 617,43M801,114Q798,119 797,125M463,147Q466,138 475,135M605,115Q600,117 595,116M638,49Q633,45 627,40M802,184Q800,191 802,198M879,229Q875,225 875,219M923,141Q920,144 917,146M743,132Q737,132 732,135M608,40Q607,45 606,50M442,286Q442,280 440,274M752,207Q757,201 754,193M668,214Q669,218 669,222M718,221Q722,218 725,214M605,264Q605,269 608,272M641,118Q636,118 632,114M332,62Q332,53 330,44M909,179Q908,184 909,189M304,62Q306,67 308,72M707,162Q705,157 700,154M929,192Q929,196 927,201M677,189Q683,189 688,188M634,8Q635,13 638,16M227,103Q228,97 226,92M844,255Q849,253 854,252M394,196Q390,191 391,185M574,221Q569,223 564,223M702,228Q701,222 699,217M195,266Q198,261 197,256M840,168Q836,164 831,163M612,150Q607,153 600,153M573,187Q575,191 577,195M328,297Q318,301 308,298M781,28Q786,27 790,29M918,18Q913,21 908,19M346,268Q350,262 357,258M293,284Q291,276 289,268M653,82Q657,85 661,86M826,246Q827,241 830,238M636,28Q630,28 624,24M475,98Q468,104 459,102M373,15Q377,9 376,1M618,117Q616,112 615,107M867,287Q863,283 864,278M837,221Q841,217 846,215M924,103Q919,98 913,96M507,154Q505,149 506,145M854,252Q852,248 851,243M848,123Q844,128 838,127M721,108Q718,114 717,121M667,292Q671,290 675,288M573,187Q566,191 557,193M899,92Q894,90 887,89M652,28Q650,24 647,21M341,51Q339,58 332,62M691,200Q696,205 702,207M164,263Q169,268 174,274M646,278Q649,273 649,267M549,134Q555,139 560,145M770,235Q769,240 772,244M703,296Q704,292 707,288M235,82Q239,86 240,92M871,211Q864,206 863,198M607,90Q603,94 597,95M903,205Q899,201 894,200M598,106Q599,101 597,95M851,243Q853,238 851,234M563,21Q567,27 567,34M858,129Q863,135 868,141M653,82Q650,76 649,70M704,274Q698,272 694,266M594,289Q587,289 581,288M587,89Q592,92 597,95M373,75Q367,74 363,68M812,193Q807,195 802,198M589,122Q585,120 582,116M593,214Q590,220 586,225M868,257Q871,261 872,266M736,89Q737,93 736,98M903,250Q896,250 890,247M520,203Q515,206 511,209M802,88Q796,86 791,86M492,224Q496,223 500,222M746,254Q742,254 739,251M282,21Q288,23 294,21M410,231Q416,225 417,216M512,188Q508,191 503,190M830,212Q830,207 827,204M433,-2Q435,3 436,8M715,45Q709,49 701,48M573,142Q573,146 575,151M557,258Q558,253 559,249M5,10Q12,13 19,9M452,251Q451,258 452,264M894,217Q897,221 902,222M312,36Q310,41 305,45M652,28Q650,35 653,42M866,218Q865,225 859,229M657,193Q649,191 641,188M257,80Q257,88 260,97M463,276Q465,269 471,265M311,25Q309,14 299,9M902,273Q899,278 897,283M646,224Q644,220 643,216M814,206Q818,209 822,212M551,87Q547,88 543,89M768,32Q763,30 758,30M707,125Q711,122 717,121M689,32Q687,36 686,40M717,121Q723,120 729,118M890,264Q884,261 882,255M529,266Q533,267 537,269M844,255Q846,260 849,264M651,182Q658,186 665,188M915,54Q921,56 926,59M774,168Q773,172 771,176M797,223Q798,231 796,238M774,151Q772,155 771,159M503,214Q507,207 504,200M577,129Q576,136 573,142M245,265Q237,268 229,273M609,191Q614,194 619,193M870,171Q867,177 860,179M551,87Q556,86 560,89M541,253Q537,256 534,259M577,38Q573,34 573,27M711,194Q716,194 720,196M800,144Q800,151 805,157M716,133Q721,135 722,139M856,31Q861,34 867,35M881,122Q883,116 883,111M669,271Q675,274 681,279M651,144Q658,144 664,140M751,182Q747,185 744,188M568,174Q575,179 582,183M924,103Q927,98 932,97M879,244Q884,241 889,237M726,259Q721,262 715,262M506,124Q501,120 498,115M835,188Q837,193 841,195M828,226Q835,228 840,232M504,253Q507,259 512,261M698,237Q693,237 690,233M734,236Q738,238 742,239M576,265Q582,266 586,271M910,271Q906,264 899,260M479,215Q478,210 475,206M883,216Q889,217 894,217M541,253Q540,248 538,242M388,281Q396,286 401,294M409,19Q408,13 409,6M212,48Q213,42 212,35M566,265Q560,263 554,267M826,188Q831,187 835,188M329,18Q335,17 340,19M929,116Q934,113 935,107M806,107Q810,108 813,112M331,242Q338,242 345,245M780,53Q783,50 785,45M914,29Q920,29 924,27M889,139Q883,143 877,148M601,217Q604,214 608,212M644,150Q641,156 637,161M272,75Q274,70 271,65M507,154Q501,160 500,167M865,25Q866,21 867,16M341,51Q348,54 354,59M503,137Q506,140 506,145M634,94Q635,100 633,105M744,20Q740,23 738,27M759,173Q757,179 760,185M390,43Q396,40 402,42M572,95Q574,90 577,86M789,268Q793,262 790,255M569,117Q568,126 563,133M703,78Q704,73 704,68M544,224Q547,218 547,210M738,121Q733,120 729,118M858,129Q853,133 848,136M472,115Q463,111 459,102M552,146Q554,150 556,155M879,244Q881,249 882,255M59,6Q53,5 47,4M822,212Q824,208 827,204M603,176Q608,176 612,180M557,258Q557,263 554,267M721,108Q714,110 708,115M914,154Q914,159 916,163M590,160Q597,159 600,153M872,276Q870,271 872,266M411,247Q407,251 401,253M910,271Q918,269 922,262M914,154Q910,151 907,146M827,171Q828,166 831,163M848,123Q847,130 848,136M200,9Q194,10 189,11M835,0Q842,-1 847,3M482,231Q477,227 469,226M612,180Q613,188 619,193M903,74Q899,69 901,63M196,39Q189,34 181,31M190,23Q186,28 181,31M373,61Q369,66 363,68M845,155Q852,157 858,154M467,196Q461,196 456,199M871,297Q865,295 860,297M168,119Q174,117 180,114M668,283Q673,284 675,288M586,263Q581,261 578,257M709,35Q707,43 701,48M845,204Q844,199 841,195M521,190Q517,191 512,188M430,300Q439,298 448,296M720,61Q714,60 710,58M798,-1Q797,5 796,11M806,11Q805,6 807,1M563,133Q569,128 577,129M328,297Q334,301 342,302M337,278Q328,273 326,264M660,34Q656,31 652,28M802,262Q808,267 811,273M597,194Q602,196 605,201M735,196Q732,199 729,203M909,179Q913,178 916,173M809,147Q815,146 821,148M711,235Q707,231 702,228M548,71Q545,67 546,62M687,148Q683,149 678,149M442,286Q446,290 448,296M738,27Q737,21 733,17M734,182Q729,179 726,174M527,83Q534,78 543,79M484,160Q482,169 479,178M407,89Q402,85 397,86M309,246Q305,241 305,235M218,297Q213,293 213,287M490,214Q497,215 500,222M897,231Q901,230 906,232M726,174Q729,168 729,161M489,244Q488,236 482,231M446,200Q446,194 447,187M867,35Q871,30 876,28M890,292Q897,290 904,290M782,37Q778,42 771,42M886,1Q880,1 874,4M294,21Q289,16 284,11M637,161Q633,157 629,156M833,55Q834,62 830,68M569,255Q573,260 576,265M136,157Q144,154 149,146M757,44Q753,43 749,44M190,23Q193,31 196,39M258,279Q254,274 255,268M691,251Q689,246 687,241M560,43Q556,47 554,53M800,19Q799,14 796,11M227,103Q220,107 219,115M925,150Q923,145 923,141M543,89Q542,84 543,79M815,130Q810,131 805,132M855,144Q861,143 868,141M766,126Q768,120 769,114M531,247Q532,241 532,235M673,79Q679,81 683,86M844,274Q847,277 852,278M833,114Q827,112 823,107M477,255Q469,253 462,250M857,285Q853,282 852,278M322,233Q324,227 327,220M425,248Q420,256 415,264M844,97Q845,101 843,105M588,234Q584,237 578,239M715,286Q711,279 704,274M670,122Q665,124 662,128M697,62Q692,60 687,58M559,168Q555,167 550,164M913,223Q917,228 920,233M660,34Q655,37 653,42M331,31Q335,25 340,19M193,1Q197,5 200,9M835,248Q835,255 838,262M751,244Q745,244 742,239M245,265Q241,272 244,278M760,71Q756,75 750,76M828,126Q828,134 827,142M741,219Q746,216 752,217M232,262Q234,256 235,250M711,235Q712,241 716,244M784,74Q791,71 796,67M266,287Q260,289 256,294M657,20Q652,21 647,21M572,291Q572,287 572,283M561,76Q561,83 560,89M747,285Q752,290 759,290M880,162Q888,160 896,162M624,136Q620,134 615,132M327,220Q322,217 316,216M499,282Q502,278 507,276M232,262Q232,268 229,273M833,114Q827,119 819,120M881,122Q887,122 892,126M720,61Q721,66 722,71M757,44Q764,44 771,42M897,231Q900,227 902,222M312,258Q306,260 302,263M327,220Q332,218 338,218M606,235Q609,230 608,225M681,74Q686,80 694,82M518,269Q520,261 526,255M915,86Q913,91 913,96M671,180Q675,184 677,189M822,274Q823,279 823,285M578,276Q573,275 569,274M513,283Q510,288 509,294M812,48Q816,45 819,41M361,272Q369,276 378,276M582,141Q587,135 593,132M723,266Q725,271 724,276M882,38Q882,46 886,53M361,88Q369,84 373,75M720,87Q721,95 715,101M811,273Q811,266 814,261M398,7Q403,13 409,19M807,230Q804,223 806,215M530,116Q532,122 530,129M622,127Q618,128 615,132M548,71Q552,64 560,61M757,142Q754,138 750,137M853,115Q859,115 864,118M246,102Q243,97 240,92M599,228Q592,228 586,225M287,89Q287,98 294,103M855,49Q849,50 844,48M561,213Q560,208 557,203M748,63Q744,65 740,66M528,199Q530,204 534,208M322,288Q317,284 310,285M596,143Q601,143 605,142M484,160Q482,153 478,146M748,171Q747,166 748,160M377,92Q383,90 386,85M814,288Q816,296 823,301M819,55Q814,53 812,48M201,129Q198,122 196,114M379,212Q376,216 375,222M570,233Q574,236 578,239M619,260Q616,257 611,258M509,169Q511,165 513,161M385,14Q381,8 376,1M687,50Q695,51 701,48M514,93Q510,97 511,103M523,134Q520,140 515,141M346,268Q354,269 361,272M197,103Q203,105 207,110M710,204Q715,200 720,196M542,203Q546,200 550,198M744,20Q748,21 752,24M914,250Q918,245 922,242M851,84Q846,80 839,78M660,34Q656,27 657,20M681,74Q678,69 679,62M379,212Q385,218 390,225M863,198Q858,202 859,208M461,291Q460,284 463,276M500,232Q503,227 508,225M511,209Q509,203 514,197M866,5Q865,11 867,16M859,229Q857,223 858,217M915,54Q909,54 903,54M442,254Q444,264 440,274M398,7Q403,6 409,6M790,213Q793,210 796,208M277,51Q275,58 271,65M840,168Q843,165 848,164M830,212Q826,211 822,212M582,297Q576,301 568,301M791,246Q794,242 796,238M679,206Q684,201 691,200M687,50Q685,54 687,58M682,181Q690,179 693,172M361,272Q360,265 357,258M822,274Q821,269 822,264M877,204Q876,199 872,196M581,288Q578,282 578,276M809,147Q810,139 805,132M409,19Q413,27 411,36M900,107Q905,109 910,109M736,89Q732,86 728,83M725,214Q723,210 720,206M721,38Q726,42 731,46M613,169Q613,175 612,180M844,255Q842,259 838,262M844,97Q848,94 852,92M747,285Q751,278 755,272M651,51Q650,46 653,42M709,35Q704,40 697,40M411,247Q410,256 415,264M757,142Q755,147 751,150M932,144Q934,140 935,135M834,147Q838,142 838,137M751,150Q743,148 736,152M338,100Q339,94 335,90M904,45Q905,49 903,54M619,251Q626,247 633,249M644,150Q643,145 642,140M837,91Q840,85 839,78M914,10Q919,9 924,8M660,259Q659,263 659,268M814,162Q810,157 805,157M423,278Q428,280 431,284M612,17Q610,12 610,7M451,176Q456,177 462,176M180,130Q173,131 168,137M341,51Q347,46 356,46M544,190Q547,194 550,198M743,178Q743,183 744,188M639,197Q631,193 626,186M569,108Q574,114 582,116M729,27Q721,24 713,27M865,188Q870,191 872,196M202,287Q196,290 189,294M660,259Q666,256 672,258M717,20Q716,15 715,11M479,178Q474,182 472,187M855,49Q860,54 868,54M343,32Q337,33 331,31M732,135Q732,127 738,121M751,182Q747,177 748,171M682,264Q682,258 682,252M334,229Q329,226 327,220M828,11Q826,7 827,2M783,285Q785,280 790,277M790,29Q790,24 792,20M688,5Q688,9 691,13M791,86Q794,83 795,78M933,15Q929,21 924,27M586,63Q580,59 573,60M514,93Q515,88 519,85M725,214Q727,208 729,203M639,58Q645,58 651,60M866,218Q871,218 875,219M632,74Q633,79 632,83M817,231Q824,233 830,238M668,283Q660,282 654,288M721,108Q724,114 729,118M830,21Q834,20 839,20M814,288Q818,285 823,285M936,243Q929,243 922,242M731,228Q724,225 718,221M382,256Q385,250 391,246M855,19Q851,16 850,11M616,29Q610,34 608,40M745,271Q742,265 736,263M624,77Q617,79 613,84M488,140Q491,145 495,151M717,121Q712,118 708,115M784,160Q789,158 791,154M707,125Q702,121 698,115M578,276Q583,275 586,271M578,239Q585,239 591,243M830,21Q826,26 827,32M769,261Q776,259 783,261M174,274Q169,276 164,274M361,88Q364,95 364,103M820,97Q816,98 812,101M800,144Q800,137 805,132M789,188Q786,191 784,195M573,187Q578,187 582,183M520,203Q523,200 528,199M406,213Q405,206 407,198M795,78Q797,73 796,67M196,39Q201,31 201,22M713,141Q714,147 715,153M311,226Q318,228 322,233M257,80Q252,83 246,83M371,244Q371,249 369,254M209,95Q213,86 222,82M724,295Q718,297 713,294M809,147Q816,145 819,139M641,188Q647,193 651,199M164,263Q162,268 164,274M227,103Q221,101 215,103M858,129Q864,129 870,128M475,206Q472,211 469,216M711,194Q718,191 721,185M550,105Q547,111 550,118M621,97Q624,93 623,87M589,27Q594,27 598,25M906,163Q905,168 904,172M212,35Q211,29 214,24M691,200Q695,197 697,192M742,81Q738,74 740,66M511,209Q515,214 522,214M890,292Q885,294 879,296M346,227Q350,232 356,234M809,147Q805,151 805,157M781,227Q786,229 788,234M577,38Q582,38 586,35M851,66Q845,66 839,67M876,79Q881,78 885,80M757,44Q762,50 770,51M715,286Q713,279 712,271M711,214Q711,209 710,204M639,238Q637,231 630,228M274,99Q272,93 275,87M790,201Q788,207 790,213M751,182Q752,188 754,193M425,248Q430,247 435,247M420,30Q416,23 409,19M896,148Q901,147 907,146M839,78Q843,74 848,74M469,226Q470,221 469,216M624,176Q618,174 613,169M835,188Q833,183 829,180M232,262Q226,266 219,270M542,203Q546,206 547,210M778,68Q774,62 767,61M711,214Q707,221 702,228M633,289Q632,284 633,280M853,106Q858,103 861,99M912,239Q907,237 906,232M335,90Q332,84 328,78M914,29Q910,31 909,36M654,228Q652,223 654,218M830,68Q837,71 839,78M548,71Q540,69 531,68M883,111Q887,111 891,108M171,95Q174,101 170,106M802,88Q801,94 798,99M421,199Q428,195 432,188M254,111Q259,108 265,106M784,74Q778,75 772,75M554,237Q557,243 559,249M293,284Q289,292 288,301M831,195Q826,197 820,198M798,164Q793,160 791,154M552,146Q550,153 545,157M503,137Q509,131 517,128M282,21Q278,28 270,30M818,32Q823,31 827,32M488,140Q492,133 496,127M896,162Q893,155 896,148M606,235Q613,236 620,234M891,108Q896,111 898,116M882,255Q878,252 873,250M630,228Q626,222 621,216M674,297Q670,295 667,292M410,231Q405,235 399,235M841,241Q848,239 851,234M472,156Q473,150 478,146M827,142Q832,138 838,137M556,225Q559,223 564,223M636,28Q641,30 643,34M877,52Q873,55 868,54M332,62Q322,61 314,56M554,53Q550,58 546,62M560,43Q556,44 552,44M715,174Q718,180 721,185M670,19Q664,18 661,12M748,160Q754,160 758,164M594,289Q592,284 588,280M566,265Q568,269 569,274M713,141Q710,137 705,135M805,132Q800,135 793,138M603,14Q608,14 612,17M487,203Q486,211 479,215M441,160Q449,161 456,162M524,238Q529,238 532,235M894,174Q888,178 887,184M588,234Q588,239 591,243M851,84Q855,81 860,81M553,288Q555,281 561,277M711,235Q718,230 718,221M826,257Q831,260 838,262M739,251Q738,244 742,239M696,72Q699,69 704,68M577,38Q574,44 577,50M531,161Q531,156 533,152M698,130Q701,134 705,135M759,290Q762,296 767,299M851,84Q845,89 837,91M397,86Q396,94 402,100M757,261Q758,255 759,248M633,145Q631,151 629,156M904,154Q904,159 906,163M588,76Q589,83 587,89M594,253Q594,248 591,243M484,114Q488,106 486,97M876,28Q872,34 873,41M576,77Q573,73 571,69M294,41Q297,35 301,30M813,112Q817,115 819,120M811,90Q814,95 812,101M577,50Q572,49 566,50M724,236Q729,234 734,236M227,45Q220,39 212,35M807,230Q802,226 797,223M900,181Q901,187 900,194M780,90Q773,89 769,85M588,76Q582,79 576,77M586,13Q590,19 589,27M789,188Q796,189 802,184M730,244Q725,242 724,236M561,277Q562,282 563,287M487,203Q490,198 494,194M641,118Q638,122 633,125M670,122Q665,117 661,111M903,74Q908,72 911,68M202,287Q208,285 213,287M716,244Q721,246 722,251M819,139Q816,135 815,130M916,278Q913,274 910,271M818,64Q812,63 807,64M868,141Q864,149 858,154M758,117Q751,118 745,114M343,32Q352,29 360,24M311,226Q309,231 305,235M767,211Q770,204 775,197M590,160Q586,158 581,157M403,271Q409,277 413,283M647,91Q641,96 634,94M683,138Q687,142 687,148M778,68Q774,70 772,75M459,220Q461,213 464,207M790,5Q792,9 796,11M628,168Q628,162 629,156M863,198Q868,196 872,196M430,300Q427,295 423,291M572,291Q566,292 561,295M565,242Q569,247 576,249M310,285Q315,279 319,272M861,169Q857,175 849,177M259,27Q256,22 257,16M677,31Q675,37 678,43M732,135Q737,140 742,143M546,62Q543,58 539,55M639,238Q635,243 633,249M757,261Q760,257 765,254M886,21Q887,28 892,34M441,238Q439,233 434,230M858,2Q852,5 847,3M855,144Q858,137 858,129M492,183Q484,183 479,178M817,231Q812,228 807,230M674,52Q672,57 669,63M564,153Q569,149 575,151M668,214Q665,209 664,203M782,244Q780,247 778,251M720,206Q720,201 720,196M834,147Q830,145 827,142M596,143Q597,149 600,153M869,156Q867,164 861,169M845,204Q853,204 859,208M698,257Q697,262 694,266M679,206Q672,205 664,203M889,139Q893,143 896,148M755,272Q762,270 769,271M774,138Q773,130 766,126M730,244Q735,247 739,251M660,34Q665,33 668,28M874,4Q870,3 866,5M523,134Q526,139 526,144M778,182Q776,189 775,197M390,225Q389,231 388,237M638,16Q643,18 647,21M654,288Q658,292 658,297M508,113Q503,115 498,115M722,127Q724,121 729,118M668,214Q660,214 654,218M348,68Q355,67 363,68M514,197Q510,191 503,190M677,31Q678,26 680,21M504,93Q509,93 514,93M270,30Q268,36 268,42M707,162Q713,163 720,164M535,191Q537,185 540,179M708,106Q704,104 700,103M605,201Q608,197 609,191M674,136Q679,133 681,127M903,54Q900,58 901,63M799,35Q801,39 805,42M899,92Q906,86 915,86M894,6Q898,3 903,3M564,153Q564,158 567,163M346,227Q346,236 345,245M183,97Q177,97 171,95M619,251Q624,257 633,258M533,152Q538,152 541,149M504,253Q503,258 501,262M736,89Q739,85 742,81M589,122Q595,121 599,125M751,14Q756,10 761,10M272,16Q264,13 257,16M674,248Q671,241 663,239M350,218Q344,218 338,218M470,166Q472,174 479,178M902,132Q905,125 908,118M766,126Q763,129 763,134M835,0Q831,-1 827,2M665,1Q659,4 652,2M624,176Q619,180 612,180M503,214Q509,215 514,218M258,279Q255,286 256,294M917,189Q920,185 924,180M189,294Q185,291 180,289M846,225Q844,229 840,232M180,114Q175,111 170,106M494,194Q499,198 504,200M296,52Q296,58 292,62M647,133Q642,126 641,118M451,176Q456,170 456,162M416,300Q410,292 413,283M518,269Q522,274 523,281M851,66Q847,61 841,58M570,233Q573,229 578,230M917,75Q920,71 919,66M363,68Q363,61 364,53M570,233Q568,238 565,242M606,100Q614,100 621,97M560,61Q562,68 561,76M748,63Q752,59 756,56M274,113Q269,110 265,106M624,77Q623,73 620,69M872,276Q879,280 882,287M608,272Q613,269 619,270M677,114Q682,113 686,110M922,262Q922,268 923,273M685,118Q684,123 681,127M654,288Q652,281 646,278M871,211Q873,206 877,204M823,107Q821,113 819,120M446,200Q447,208 442,214M904,45Q901,41 900,36M653,106Q647,106 643,101M734,236Q735,230 740,227M762,154Q767,150 774,151M547,261Q551,264 554,267M853,115Q854,110 853,106M769,6Q774,6 777,10M641,118Q643,110 643,101M890,292Q890,286 888,280M722,127Q724,133 722,139M540,179Q533,178 528,183M845,204Q850,202 852,198M461,123Q456,127 450,128M822,212Q827,218 828,226M196,114Q196,109 197,103M561,295Q565,297 568,301M536,216Q535,212 534,208M814,162Q808,168 802,173M852,92Q856,96 861,99M746,30Q750,37 749,44M209,95Q204,100 197,103M657,193Q661,190 665,188M671,160Q665,165 660,170M769,114Q766,109 760,109M550,177Q556,174 559,168M269,269Q273,265 279,264M603,176Q607,172 613,169M924,103Q929,107 935,107M338,100Q333,102 328,101M391,99Q392,92 397,86M682,181Q678,184 677,189M423,235Q422,230 425,225M538,106Q542,112 541,120M828,126Q833,126 838,127M859,11Q855,11 850,11M761,282Q766,283 772,280M373,265Q376,270 378,276M659,66Q656,62 651,60M757,261Q756,267 755,272M659,66Q654,66 649,70M502,181Q496,181 492,183M389,297Q383,295 378,291M812,48Q818,48 824,49M633,258Q637,264 638,272M425,77Q419,80 412,77M685,100Q681,102 678,105M628,266Q634,272 633,280M391,246Q389,242 388,237M556,155Q558,150 560,145M329,18Q325,13 325,7M666,74Q670,69 669,63M643,207Q635,209 632,216M925,150Q920,150 917,146M892,46Q899,49 903,54M715,286Q719,280 724,276M624,201Q619,200 614,201M259,27Q254,25 248,23M407,89Q406,95 402,100M769,105Q775,102 781,99M248,23Q243,25 238,24M363,224Q362,231 356,234M530,129Q532,134 533,139M916,173Q910,173 904,172M864,74Q866,79 869,84M751,14Q750,19 752,24M312,258Q320,259 326,254M670,19Q672,15 676,13M709,35Q705,29 699,24M686,110Q683,106 678,105M783,285Q783,290 786,295M394,196Q395,204 395,212M687,67Q682,66 679,62M600,241Q597,235 599,228M840,168Q834,171 827,171M619,159Q622,165 628,168M207,256Q213,254 219,258M862,42Q868,44 873,41M608,25Q603,24 598,25M500,232Q500,237 502,243M859,229Q864,226 869,226M606,50Q612,51 616,54M713,80Q715,74 713,68M543,89Q546,92 548,96M431,284Q434,292 430,300M512,261Q511,269 507,276M848,123Q845,119 841,115M851,84Q857,86 862,90M303,277Q295,274 289,268M543,140Q543,145 541,149M907,146Q912,144 917,146M909,259Q911,254 914,250M805,42Q809,45 812,48M830,212Q832,207 835,203M771,222Q767,227 761,226M391,99Q397,99 402,100M373,75Q378,71 382,66M543,140Q540,135 542,129M272,16Q268,11 263,8M554,237Q556,231 556,225M514,93Q519,94 524,94M141,133Q136,138 136,145M741,293Q746,293 751,296M731,228Q729,219 734,212M446,200Q441,191 432,188M376,235Q371,232 366,234M744,20Q739,18 733,17M868,141Q871,135 870,128M576,249Q580,251 585,251M771,222Q768,217 767,211M563,21Q567,14 570,8M550,105Q557,104 561,100M783,285Q789,285 793,288M843,105Q840,110 841,115M729,27Q729,20 725,14M708,106Q713,105 715,101M929,128Q927,122 929,116M626,186Q623,190 619,193M494,194Q487,198 479,196M915,54Q916,47 920,42M723,266Q730,267 736,272M529,266Q528,271 530,275M913,223Q919,223 925,219M844,48Q845,54 841,58M410,231Q405,227 400,225M541,253Q543,258 547,261M772,280Q771,276 769,271M621,14Q615,11 610,7M363,224Q362,230 366,234M308,298Q306,293 301,291M806,123Q813,124 819,120M527,83Q523,83 519,85M876,79Q880,73 878,65M737,162Q735,166 736,172M599,75Q597,80 597,85M935,64Q930,63 926,59M301,94Q296,88 297,80M926,59Q924,64 919,66M814,162Q822,164 827,171M918,18Q919,12 924,8M729,203Q735,202 739,205M806,11Q801,11 796,11M658,209Q654,204 651,199M769,185Q764,189 763,197M670,196Q668,200 664,203M757,44Q764,40 768,32M870,171Q876,175 883,173M524,75Q527,78 527,83M922,122Q925,119 929,116M687,50Q689,45 686,40M232,262Q225,257 224,249M691,251Q687,250 682,252M669,222Q664,225 663,229M674,52Q668,50 663,46M834,105Q838,110 841,115M619,251Q622,244 627,240M492,224Q491,219 490,214M458,186Q452,185 447,187M430,212Q423,208 421,199M651,51Q651,55 651,60M841,11Q845,9 850,11M761,240Q758,243 759,248M606,131Q607,126 610,122M432,188Q439,186 441,179M907,146Q904,143 900,141M272,16Q278,13 284,11M920,233Q921,237 922,242M870,171Q872,176 876,179M721,185Q716,182 710,182M788,234Q783,235 778,236M844,274Q848,270 849,264M716,244Q709,246 702,247M541,120Q543,125 542,129M639,173Q638,178 634,180M746,254Q739,256 736,263M714,253Q719,254 722,251M700,103Q705,100 707,94M663,239Q667,234 673,232M403,271Q409,268 415,264M711,214Q706,211 702,207M322,288Q329,290 337,290M520,167Q522,171 527,173M330,44Q324,45 318,45M343,256Q340,260 337,264M912,239Q909,246 903,250M288,73Q293,76 297,80M736,98Q741,97 745,92M677,31Q672,33 669,39M463,147Q456,148 451,153M621,97Q621,104 625,109M169,299Q176,296 180,289M407,188Q414,185 421,182M517,179Q511,175 509,169M826,188Q820,193 812,193M322,288Q329,282 337,278M856,31Q852,36 851,41M633,135Q638,136 642,140M855,19Q861,18 867,16M720,164Q715,168 715,174M756,56Q755,48 749,44M669,39Q667,43 663,46M717,20Q720,16 725,14M800,19Q796,17 792,20M341,51Q335,47 330,44M849,187Q842,187 835,188M828,292Q823,295 823,301M845,34Q846,29 847,24M569,117Q571,125 577,129M909,259Q916,258 922,262M784,74Q780,77 779,82M309,246Q313,242 318,243M616,223Q610,219 608,212M586,271Q588,276 588,280M272,75Q276,81 275,87M892,34Q895,36 900,36M509,169Q505,166 500,167M920,42Q923,35 930,33M168,119Q174,124 180,130M396,74Q390,79 386,85M890,264Q885,264 880,263M925,150Q929,148 932,144M918,212Q914,212 909,213M892,46Q889,50 886,53M883,173Q884,179 887,184M883,111Q876,113 873,119M826,246Q822,243 818,241M774,138Q778,135 784,134M714,253Q717,249 716,244M784,160Q792,159 798,164M798,99Q796,105 791,109M761,282Q760,275 755,272M595,264Q593,269 595,273M650,172Q655,171 660,170M188,140Q189,133 190,126M624,24Q622,19 621,14M371,244Q369,238 366,234M759,19Q755,17 751,14M721,108Q721,100 727,94M791,86Q789,92 790,99M770,51Q766,56 767,61M752,217Q750,212 752,207M639,58Q647,57 651,51M596,53Q596,48 599,44M542,129Q547,130 549,134M391,99Q389,92 386,85M590,160Q589,155 591,151M806,215Q803,209 796,208M647,21Q645,15 645,9M538,106Q543,101 548,96M531,285Q529,280 530,275M912,286Q919,285 925,290M914,29Q910,28 905,27M681,234Q682,229 685,224M361,248Q365,251 369,254M855,144Q856,149 858,154M701,87Q703,92 707,94M605,264Q607,260 611,258M874,97Q868,101 861,99M461,291Q457,295 457,301M568,174Q575,169 583,168M813,112Q812,107 812,101M596,53Q597,59 595,64M526,255Q519,259 512,261M814,206Q816,201 820,198M616,29Q614,23 612,17M560,43Q563,47 566,50M569,255Q574,256 578,257M433,-2Q438,-0 443,-2M917,200Q916,195 917,189M785,14Q790,16 792,20M582,141Q580,146 575,151M452,264Q449,258 442,254M565,242Q561,245 559,249M590,44Q591,39 595,35M615,107Q608,109 605,115M845,155Q849,148 855,144M809,241Q803,239 796,238M244,278Q252,276 255,268M879,229Q880,236 879,244M697,192Q693,191 688,188M822,274Q829,276 834,273M416,300Q423,298 430,300M682,252Q683,246 687,241M716,133Q711,136 705,135M296,52Q296,46 294,41M288,2Q288,7 284,11M862,90Q863,95 861,99M868,257Q869,251 865,245M468,299Q465,295 461,291M713,68Q708,66 704,68M849,177Q848,171 848,164M606,288Q610,283 615,280M569,108Q566,113 560,116M715,286Q711,288 707,288M914,29Q917,24 918,18M543,140Q548,143 552,146M624,201Q623,196 619,193M800,144Q797,140 793,138M782,37Q786,32 790,29M689,130Q694,129 698,130M616,29Q617,36 617,43M783,285Q783,279 781,273M916,300Q921,295 925,290M636,28Q642,25 647,21M198,89Q196,96 197,103M781,227Q778,231 778,236M369,284Q375,281 378,276M795,44Q790,46 785,45M603,14Q602,9 602,4M475,281Q478,286 476,292M818,64Q819,60 819,55M876,28Q882,26 886,21M806,107Q802,104 798,99M632,216Q638,213 643,216M839,67Q842,63 841,58M834,147Q839,148 843,146M783,285Q777,285 772,280M769,185Q772,191 775,197M669,271Q669,277 668,283M590,44Q589,39 586,35M373,75Q374,84 377,92M570,233Q567,228 564,223M774,138Q771,141 767,143M613,84Q618,86 623,87M572,95Q567,90 560,89M514,246Q512,253 512,261M561,76Q564,81 569,83M578,230Q582,228 586,225M730,244Q725,246 722,251M814,206Q807,203 802,198M671,180Q667,178 663,178M403,271Q394,274 388,281M899,239Q902,236 906,232M606,100Q601,98 597,95M759,173Q759,168 758,164M733,280Q735,276 736,272M628,168Q632,173 639,173M729,65Q728,59 726,54M849,187Q846,192 841,195M831,195Q833,192 835,188M882,38Q886,35 892,34M885,80Q890,79 894,76M769,105Q777,106 782,113M534,226Q529,225 523,224M211,2Q219,2 226,-1M761,282Q767,285 772,290M630,-1Q624,1 619,5M720,87Q715,93 707,94M248,23Q248,29 249,35M338,100Q352,96 364,103M713,80Q716,84 720,87M423,235Q416,240 411,247M587,89Q582,89 577,86M475,135Q475,141 478,146M691,251Q694,254 698,257M896,20Q894,27 892,34M205,78Q204,87 209,95M849,289Q850,283 852,278M432,188Q431,197 437,204M582,141Q579,135 577,129M311,1Q310,7 314,11M642,84Q637,86 632,83M896,20Q891,21 886,21M780,53Q785,56 787,62M866,234Q864,230 859,229M606,163Q606,157 600,153M456,162Q459,169 462,176M759,19Q760,15 761,10M573,60Q571,64 571,69M881,122Q875,125 870,128M263,8Q260,12 257,16M762,154Q756,153 751,150M916,173Q911,169 906,163M354,59Q359,63 363,68M451,176Q446,177 441,179M789,188Q784,184 778,182M928,301Q932,298 935,294M355,-0Q350,2 344,-1M470,166Q462,167 456,162M310,285Q311,292 308,298M917,75Q912,76 909,80M817,231Q823,229 828,226M674,52Q678,56 679,62M330,44Q330,38 331,31M501,262Q507,262 512,261M880,192Q884,197 886,204M573,209Q570,205 568,201M605,201Q600,204 596,204M780,90Q776,93 773,95M723,266Q718,266 715,262M818,222Q812,219 806,215M736,263Q740,257 739,251M864,74Q858,70 851,66M826,246Q827,251 826,257M790,201Q785,202 781,205M864,74Q868,69 870,63M715,286Q714,290 713,294M583,168Q574,169 567,163M226,92Q233,90 240,92M581,288Q585,284 588,280M534,226Q532,230 532,235M308,298Q304,302 298,301M653,106Q658,102 661,97M889,139Q885,135 881,131M748,63Q747,58 745,54M828,126Q831,120 833,114M298,301Q302,296 301,291M732,109Q740,107 747,105M458,186Q461,181 462,176M643,207Q641,202 639,197M293,284Q284,280 275,282M746,30Q742,35 739,40M464,207Q469,204 475,206M690,211Q689,218 685,224M464,207Q468,210 469,216M868,141Q872,145 877,148M463,147Q471,147 478,146M867,35Q863,37 862,42M865,245Q869,247 873,250M899,239Q894,238 889,237M720,61Q716,65 713,68M645,297Q651,295 658,297M790,5Q793,1 798,-1M597,194Q591,198 584,201M531,161Q537,156 545,157M633,135Q634,140 633,145M311,25Q316,26 321,25M890,67Q884,69 878,65M595,35Q593,31 589,27M654,288Q649,285 644,287M701,87Q697,91 694,95M586,13Q584,8 581,3M563,133Q568,136 573,142M654,218Q649,215 643,216M833,114Q837,117 841,115M755,98Q759,94 764,95M484,114Q478,117 472,115M734,212Q739,214 741,219M421,199Q428,205 437,204M355,-0Q359,4 361,11M597,194Q596,190 594,186M219,115Q214,110 207,110M908,118Q903,119 898,116M314,11Q307,6 299,9M288,73Q287,65 281,60M707,260Q709,266 712,271M497,296Q503,295 509,294M451,209Q451,203 456,199M834,105Q828,104 823,107M616,54Q621,52 625,50M734,212Q729,212 725,214M588,76Q584,83 577,86M759,173Q765,175 771,176M784,134Q785,130 786,125M824,156Q823,151 821,148M823,107Q824,101 830,97M666,74Q669,78 673,79M627,63Q627,70 632,74M711,214Q718,216 725,214M452,141Q453,147 451,153M759,290Q756,294 751,296M561,213Q568,212 573,209M715,101Q721,98 727,94M569,255Q573,253 576,249M596,53Q591,55 586,53M430,212Q436,212 442,214M504,93Q509,88 511,81M771,222Q766,219 761,217M914,10Q910,4 903,3M467,196Q471,193 472,187M578,230Q578,225 574,221M586,263Q588,267 586,271M697,192Q702,184 710,182M388,281Q395,285 403,284M423,235Q417,233 410,231M710,58Q702,56 697,62M574,221Q572,215 573,209M692,278Q696,282 700,282M637,161Q644,161 651,160M209,274Q215,274 219,270M846,225Q853,225 859,229M734,182Q728,187 721,185M322,233Q321,238 318,243M403,271Q402,277 403,284M642,84Q648,83 653,82M411,36Q407,40 402,42M834,273Q828,268 822,264M315,82Q312,90 315,98M594,289Q600,285 602,279M550,177Q548,171 550,164M726,4Q726,9 725,14M600,241Q595,240 591,243M386,271Q379,270 373,265M700,282Q702,286 707,288M774,138Q769,134 763,134M869,156Q870,149 868,141M369,284Q367,291 360,295M518,269Q511,271 507,276M561,277Q558,272 554,267M560,43Q555,38 552,31M254,111Q249,108 246,102M502,104Q501,110 498,115M535,96Q542,95 548,96M237,36Q231,31 227,24M883,111Q887,113 889,118M831,195Q833,199 835,203M694,95Q693,89 694,82M828,11Q827,16 830,21M376,235Q371,238 371,244M721,38Q717,41 715,45M238,1Q234,7 232,14M687,67Q687,63 687,58M574,16Q579,18 581,23M752,217Q756,216 761,217M329,18Q332,12 337,9M633,249Q634,254 633,258M925,150Q928,155 933,158M801,114Q796,110 791,109M633,145Q630,139 624,136M745,5Q742,9 737,8M260,97Q261,102 265,106M733,280Q733,285 731,289M246,297Q242,288 233,286M338,79Q341,86 348,89M448,296Q452,299 457,301M462,261Q467,262 471,265M294,41Q300,42 305,45M882,38Q886,43 892,46M854,252Q861,251 865,245M616,223Q618,228 620,234M627,240Q623,237 620,234M455,234Q462,229 469,226M489,244Q496,244 502,243M552,146Q546,147 541,149M331,242Q332,235 334,229M914,154Q912,160 906,163M560,43Q564,38 567,34M475,135Q471,125 472,115M515,141Q511,145 506,145M482,231Q480,237 477,243M578,276Q579,270 576,265M688,22Q688,27 689,32M390,225Q383,221 375,222M790,213Q793,219 797,223M909,179Q914,184 917,189M714,253Q708,250 702,247M711,194Q710,199 710,204M885,102Q889,99 895,100M693,172Q694,177 696,181M732,109Q738,113 745,114M762,154Q761,147 757,142M791,86Q784,86 779,82M759,86Q756,79 750,76M350,218Q355,224 363,224M750,126Q744,124 738,121M590,160Q593,164 594,169M930,43Q924,44 920,42M343,256Q350,258 357,258M454,283Q445,281 440,274M410,231Q410,239 411,247M326,264Q324,269 319,272M761,282Q765,276 769,271M671,180Q670,173 675,168M646,278Q641,276 638,272M616,223Q618,219 621,216M661,97Q660,92 661,86M520,294Q516,289 513,283M612,150Q617,147 622,148M835,203Q839,200 841,195M844,48Q839,46 838,40M930,43Q931,48 934,51M930,170Q930,175 932,179M454,283Q457,288 461,291M814,162Q812,168 815,174M463,147Q459,155 456,162M521,106Q517,103 511,103M777,122Q781,125 786,125M788,234Q791,237 796,238M868,54Q872,48 873,41M846,225Q844,220 846,215M914,29Q910,24 908,19M837,91Q840,95 844,97M399,235Q394,238 388,237M585,251Q587,246 591,243M550,105Q549,101 548,96M820,97Q825,98 830,97M647,21Q647,28 643,34M735,56Q740,55 745,54M872,276Q877,273 882,273M818,32Q820,37 819,41M651,144Q649,138 647,133M820,97Q824,92 828,88M817,231Q814,237 809,241M746,254Q743,262 745,271M755,98Q758,92 759,86M926,59Q924,55 924,50M309,196Q304,192 298,189M767,211Q764,214 761,217M663,239Q659,243 658,249M314,11Q322,13 329,18M731,228Q736,227 740,227M916,163Q911,165 906,163M486,281Q484,289 476,292M855,19Q859,24 865,25M791,246Q797,249 803,252M827,204Q831,203 835,203M576,77Q571,79 569,83M606,235Q603,238 600,241M260,97Q267,91 275,87M812,193Q806,190 802,184M601,217Q597,214 593,214M633,145Q639,144 642,140M823,107Q818,104 812,101M586,63Q587,58 586,53M710,58Q706,63 704,68M377,92Q373,101 364,103M531,285Q533,281 538,279M660,170Q656,164 651,160M880,162Q879,168 883,173M565,242Q571,238 578,239M669,95Q665,94 661,97M202,287Q194,285 187,281M641,73Q637,73 632,74M553,288Q558,288 563,287M757,44Q760,50 756,56M899,92Q904,95 905,100M886,21Q884,16 886,10M912,239Q915,235 920,233M758,117Q763,115 769,114M926,71Q926,77 927,82M619,159Q622,154 622,148M568,174Q571,168 567,163M484,114Q481,105 475,98M529,266Q525,262 526,255M713,68Q710,63 710,58M620,234Q619,238 617,242M454,283Q449,286 442,286M797,125Q801,129 805,132M373,265Q371,259 369,254M441,160Q445,169 451,176M871,211Q870,215 866,218M846,215Q852,213 858,217M586,63Q579,67 571,69M897,231Q899,235 899,239M931,264Q926,263 922,262M550,248Q551,255 547,261M348,68Q351,64 354,59M928,250Q925,246 922,242M818,-0Q817,5 815,9M810,299Q816,303 823,301M479,178Q470,178 462,176M646,224Q650,221 654,218M467,241Q472,244 477,243M526,255Q529,252 531,247M603,14Q607,11 610,7M475,281Q471,274 471,265M345,245Q351,240 356,234M780,53Q778,60 778,68M784,143Q784,138 784,134M760,2Q760,6 761,10M174,274Q179,280 187,281M677,31Q672,26 670,19M207,256Q202,257 197,256M737,8Q735,4 734,0M770,51Q763,54 756,56M748,171Q747,176 743,178M624,176Q630,176 634,180M269,269Q263,265 255,268M639,197Q637,203 631,206M918,212Q917,219 913,223M905,27Q902,31 900,36M772,75Q772,80 769,85M550,278Q548,282 544,285M711,235Q717,238 724,236M223,285Q224,278 229,273M346,227Q342,223 338,218M618,300Q622,297 626,295M750,126Q749,132 750,137M761,240Q755,241 751,244M731,74Q728,70 729,65M721,185Q722,191 720,196M851,84Q850,79 848,74M395,212Q400,215 406,213M778,251Q776,247 772,244M628,266Q625,262 619,260M492,170Q487,176 479,178M747,105Q747,110 745,114M314,56Q310,50 305,45M527,83Q524,88 524,94M337,278Q334,284 337,290M861,169Q860,162 858,154M564,153Q560,154 556,155M223,285Q219,290 218,297M560,116Q555,119 550,118M692,278Q691,272 694,266M691,200Q687,196 682,196M300,217Q307,214 316,216M840,168Q837,163 837,157M794,57Q792,61 787,62M721,38Q723,31 729,27M918,212Q921,205 927,201M896,162Q899,158 904,154M729,145Q726,142 722,139M681,279Q686,281 692,278M831,195Q836,198 841,195M875,14Q870,10 866,5M589,27Q592,20 595,14M858,59Q856,63 851,66M655,122Q653,119 650,115M875,14Q877,21 876,28M278,294Q273,289 266,287M877,52Q881,55 886,53M303,277Q312,277 319,272M630,228Q634,226 637,223M285,34Q292,28 301,30M892,46Q892,53 893,59M504,200Q508,204 511,209M831,283Q833,278 834,273M707,125Q706,130 705,135M641,188Q638,184 634,180M845,34Q840,31 835,30M760,71Q762,65 767,61M920,42Q922,46 924,50M800,144Q797,150 791,154M809,241Q814,243 818,241M183,97Q190,94 198,89M696,181Q693,186 688,188M559,168Q561,161 556,155M894,200Q897,197 900,194M838,40Q837,35 835,30M247,7Q255,4 263,8M682,264Q684,268 687,271M597,194Q595,199 596,204M685,158Q692,155 700,154M577,129Q580,122 582,116M835,248Q832,243 830,238M717,20Q716,24 713,27M828,88Q827,93 830,97M527,173Q526,178 528,183M794,57Q791,50 785,45M521,190Q525,187 528,183M790,5Q789,10 785,14M476,292Q482,292 488,291M557,258Q553,260 547,261M793,138Q792,146 791,154M589,27Q585,25 581,23M880,192Q876,194 872,196M463,147Q468,151 472,156M803,74Q800,70 796,67M503,137Q503,130 506,124M711,194Q704,194 697,192M885,102Q882,106 883,111M895,100Q900,101 905,100M846,225Q847,230 851,234M882,38Q878,40 873,41M929,-1Q929,4 924,8M913,131Q913,139 917,146M828,126Q822,128 815,130M538,242Q534,244 531,247M511,209Q514,213 514,218M560,61Q562,55 566,50M748,171Q742,167 737,162M390,225Q395,223 400,225M380,106Q372,108 364,103M496,127Q496,121 498,115M668,148Q673,148 678,149M429,264Q430,254 435,247M768,32Q770,37 771,42M588,234Q588,229 586,225M924,93Q919,95 913,96M653,241Q648,246 642,249M569,255Q566,249 565,242M354,59Q359,55 364,53M530,129Q536,128 542,129M584,201Q584,207 580,213M910,271Q911,265 909,259M735,56Q731,56 726,54M786,295Q789,298 793,301M847,24Q846,17 850,11M533,152Q531,146 526,144M669,105Q673,107 678,105M639,58Q632,59 627,63M900,181Q898,177 894,174M873,119Q873,114 870,109M890,292Q886,290 882,287M699,24Q702,18 708,15M913,131Q909,125 908,118M618,117Q622,121 622,127M577,38Q571,38 567,34M390,43Q394,47 396,53M885,80Q883,72 878,65M593,214Q592,208 596,204M361,88Q368,93 377,92M682,181Q679,174 675,168M736,263Q737,267 736,272M601,217Q598,222 599,228M376,235Q382,237 388,237M886,204Q888,212 894,217M674,248Q674,253 672,258M681,279Q682,274 687,271M883,216Q885,210 886,204M845,204Q848,209 846,215M337,9Q337,15 340,19M484,114Q490,120 496,127M687,50Q684,45 678,43M858,2Q854,7 850,11M746,254Q753,252 759,248M386,271Q383,275 378,276M560,116Q553,112 550,105M913,131Q917,137 923,141M485,129Q491,129 496,127M818,84Q814,79 815,73M492,183Q488,192 479,196M669,63Q674,64 679,62M622,127Q615,126 610,122M495,151Q500,147 506,145M763,197Q759,203 752,207M326,264Q320,259 312,258M651,258Q647,253 642,249M301,94Q306,86 315,82M828,88Q823,87 818,84M720,164Q725,167 726,174M913,223Q907,220 902,222M609,191Q610,197 614,201M619,251Q619,246 617,242M752,24Q756,26 758,30M781,273Q785,276 790,277M521,190Q520,197 520,203M716,133Q714,137 713,141M697,40Q692,41 686,40M811,273Q810,281 814,288M262,59Q268,60 271,65M778,300Q772,302 767,299M782,113Q787,113 791,109M828,11Q822,8 815,9M748,171Q742,172 736,172M662,55Q661,60 659,66M349,286Q343,287 337,290M442,286Q436,288 431,284M896,148Q897,144 900,141M335,90Q332,96 328,101M230,299Q224,296 218,297M322,288Q326,292 328,297M701,87Q700,82 703,78M803,252Q807,251 812,251M627,63Q623,56 616,54M618,117Q615,121 610,122M900,181Q894,182 887,184M348,68Q345,75 338,79M149,146Q142,146 136,145M642,260Q643,255 642,249M178,11Q183,9 189,11M594,253Q601,254 607,249M687,67Q682,69 681,74M914,10Q916,14 918,18M212,35Q208,28 201,22M653,42Q649,36 643,34M923,141Q929,137 935,135M287,89Q286,81 288,73M282,21Q285,17 284,11M841,241Q837,243 835,248M688,22Q690,18 691,13M561,277Q565,283 572,283M703,143Q704,139 705,135M830,238Q827,232 828,226M489,244Q485,251 477,255M685,100Q690,99 694,95M324,91Q325,84 328,78M361,272Q366,277 369,284M734,212Q731,208 729,203M881,131Q888,131 892,126M306,110Q300,106 294,103M927,201Q921,196 917,189M781,28Q774,24 772,17M531,247Q533,253 534,259M707,162Q703,163 699,165M916,173Q923,172 930,170M377,31Q369,25 360,24M864,74Q856,74 848,74M877,52Q873,48 873,41M467,196Q470,202 475,206M790,201Q788,197 784,195M311,1Q304,4 299,9M918,212Q921,217 925,219M547,210Q541,208 534,208M911,68Q915,69 919,66M759,290Q766,291 772,290M935,135Q931,133 929,128M840,232Q846,234 851,234M537,168Q544,169 550,164M858,129Q853,126 848,123M888,280Q884,278 882,273M789,173Q789,181 789,188M560,61Q553,64 546,62M902,222Q905,226 906,232M401,253Q400,260 394,263M815,73Q811,77 807,81M777,214Q781,220 781,227M605,142Q609,146 612,150M772,290Q770,294 767,299M220,8Q224,5 226,-1M520,294Q526,295 531,297M915,86Q915,80 917,75M697,40Q700,43 701,48M209,95Q214,98 215,103M492,170Q496,168 500,167M858,59Q862,54 868,54M627,240Q622,239 617,242M855,19Q859,16 859,11M736,263Q731,262 726,259M487,203Q483,199 479,196M141,133Q142,142 149,146M894,200Q893,191 887,184M692,278Q688,285 684,291M603,176Q599,181 594,186M890,67Q896,66 901,63M617,43Q621,46 625,50M607,249Q613,247 617,242M573,209Q578,204 584,201M864,74Q862,77 860,81M824,156Q818,157 814,162M734,182Q730,187 727,192M727,192Q724,195 720,196M557,203Q554,200 550,198M778,251Q780,256 783,261M531,161Q528,167 527,173M446,200Q451,199 456,199M633,258Q626,260 619,260M815,174Q822,177 829,180M547,210Q549,215 553,217M598,25Q595,20 595,14M515,230Q513,234 509,237M504,93Q508,97 511,103M311,226Q307,220 300,217M287,89Q281,95 274,99M800,296Q797,299 793,301M849,298Q843,294 839,289M589,122Q584,128 577,129M479,196Q476,191 472,187M410,231Q418,228 425,225M311,226Q314,221 316,216M794,57Q795,51 795,44M382,256Q378,261 373,265M168,119Q169,128 168,137M868,54Q865,48 862,42M334,229Q335,223 338,218M735,56Q734,50 731,46M833,55Q838,52 844,48M348,68Q339,68 332,62M909,179Q908,175 904,172M713,141Q718,142 722,139M777,214Q778,209 781,205M219,270Q219,264 219,258M653,241Q652,235 654,228M831,283Q827,285 823,285M503,137Q498,133 496,127M824,156Q827,161 831,163M156,134Q155,128 157,122M136,157Q129,153 122,154M430,212Q422,211 417,216M707,162Q713,167 715,174M852,198Q847,196 841,195M441,238Q440,243 435,247M655,122Q654,129 656,135M694,291Q700,289 707,288M760,185Q757,189 754,193M823,301Q831,300 838,302M425,225Q431,226 434,230M355,-0Q366,-0 376,1M370,300Q366,297 360,295M761,240Q766,244 772,244M599,75Q597,70 595,64M722,127Q718,125 717,121M463,147Q461,141 463,134M851,66Q851,71 848,74M875,14Q872,17 867,16M492,170Q498,174 502,181M799,35Q795,31 790,29M211,2Q216,4 220,8M748,63Q753,69 760,71M297,80Q304,78 308,72M379,212Q387,215 395,212M632,114Q631,119 633,125M720,87Q723,91 727,94M627,40Q625,45 625,50M441,238Q448,234 455,234M603,176Q604,170 606,163M312,36Q314,41 318,45M619,5Q614,4 610,7M739,40Q734,39 732,35M735,196Q731,195 727,192M331,31Q327,28 321,25M533,152Q531,145 533,139M550,248Q552,254 557,258M677,189Q679,193 682,196M861,109Q864,104 861,99M230,299Q229,290 223,285M715,286Q720,289 724,295M416,300Q420,296 423,291M869,156Q872,163 870,171M934,225Q931,221 925,219M229,273Q229,280 233,286M789,173Q795,171 802,173M260,97Q250,93 246,83M654,228Q650,232 646,234M759,86Q760,91 764,95M274,113Q280,113 284,108M328,297Q334,295 337,290M382,256Q381,264 386,271M349,286Q359,281 369,284M806,215Q811,212 814,206M674,136Q678,139 683,138M881,131Q880,135 877,139M928,250Q921,250 914,250M514,246Q519,245 523,247M574,16Q573,11 570,8M588,177Q591,182 594,186M446,200Q450,204 451,209M657,193Q663,198 670,196M572,95Q572,102 569,108M827,41Q827,36 827,32M902,132Q901,136 900,141M603,14Q599,13 595,14M682,181Q677,181 671,180M744,20Q748,18 751,14M232,14Q231,20 227,24M698,130Q694,135 691,140M698,237Q693,241 687,241M544,224Q550,225 556,225M536,216Q530,221 523,224M349,13Q350,5 344,-1M818,-0Q823,-0 827,2M731,46Q727,49 726,54M777,10Q775,13 772,17M896,20Q897,15 901,12M751,244Q744,247 739,251M901,12Q898,9 894,6M742,81Q744,86 745,92M624,77Q622,82 623,87M668,148Q665,145 664,140M747,105Q745,99 745,92M612,180Q618,184 626,186M803,74Q806,77 807,81M196,39Q204,35 212,35M198,275Q203,277 209,274M390,225Q393,231 399,235M724,152Q719,153 715,153M803,74Q800,78 795,78M492,224Q496,228 500,232M606,235Q604,229 599,228M782,37Q784,41 785,45M876,79Q869,79 864,74M872,266Q864,264 857,269M784,74Q787,80 791,86M892,46Q895,41 900,36M658,209Q660,205 664,203M550,248Q554,251 559,249M861,169Q854,168 848,164M868,257Q863,258 859,259M595,35Q591,34 586,35M417,216Q419,208 421,199M685,118Q682,114 677,114M752,207Q751,201 745,197M861,169Q865,170 870,171M770,235Q774,236 778,236M311,25Q309,17 314,11M574,221Q580,224 586,225M624,282Q624,289 626,295M745,197Q741,200 739,205M305,235Q314,236 318,243M543,47Q547,52 554,53M708,106Q707,111 708,115M396,53Q390,54 385,54M416,300Q409,296 401,294M385,14Q387,9 388,2M607,90Q603,85 597,85M788,234Q793,230 797,223M395,17Q393,22 388,25M896,162Q902,161 906,163M557,193Q561,198 568,201M900,194Q892,192 887,184M868,141Q872,140 877,139M247,7Q247,15 248,23M363,35Q369,31 377,31M713,80Q719,78 722,71M600,153Q595,153 591,151M812,193Q811,200 814,206M837,91Q832,90 828,88M602,279Q598,276 595,273M772,17Q766,14 761,10M930,170Q925,174 924,180M929,235Q924,234 920,233M696,5Q695,10 691,13M886,1Q888,6 886,10M738,27Q736,31 732,35M569,255Q570,261 566,265M222,82Q226,86 226,92M634,8Q627,3 619,5M492,224Q486,218 479,215M815,130Q812,126 806,123M902,273Q906,271 910,271M573,209Q576,212 580,213M282,21Q276,20 272,16M835,30Q835,24 839,20M572,291Q568,287 563,287M235,82Q240,83 246,83M442,286Q436,293 430,300M472,156Q465,160 456,162M653,241Q657,244 658,249M933,158Q934,165 930,170M685,224Q686,229 690,233M670,122Q672,116 677,114M796,67Q802,68 807,64M373,61Q367,59 364,53M791,118Q787,121 786,125M415,264Q408,258 401,253M508,113Q512,116 516,119M831,283Q828,278 822,274M811,273Q817,269 822,264M706,6Q710,10 715,11M692,301Q690,294 684,291M563,287Q567,283 572,283M529,266Q523,268 518,269M329,18Q326,22 321,25M657,193Q662,197 664,203M645,297Q639,293 633,289M644,287Q643,282 646,278M232,14Q225,11 220,8M660,154Q663,162 660,170M857,285Q860,290 860,297M202,287Q200,281 198,275M891,108Q891,113 889,118M797,125Q802,125 806,123M624,24Q617,22 612,17M487,203Q489,208 490,214M373,15Q364,17 360,24M586,263Q587,256 585,251M790,213Q785,220 781,227M407,188Q405,193 407,198M294,41Q288,50 277,51M227,103Q233,97 240,92M306,110Q311,105 315,98M628,266Q629,261 633,258M666,74Q661,79 653,82M841,180Q837,174 840,168M872,266Q875,264 880,263M805,42Q807,35 807,28M376,47Q371,53 364,53M936,243Q933,248 928,250M586,271Q590,274 595,273M268,42Q273,45 277,51M230,299Q234,293 233,286M608,40Q611,33 608,25M910,109Q908,113 908,118M653,106Q649,110 650,115M802,262Q804,258 803,252M582,183Q587,187 594,186M771,42Q777,44 785,45M543,47Q542,51 539,55M653,42Q658,43 663,46M860,179Q854,181 849,177M714,253Q715,258 715,262M915,54Q919,60 919,66M538,279Q534,277 530,275M862,90Q860,86 860,81M562,182Q557,186 557,193M168,137Q163,133 156,134M925,150Q920,153 914,154M550,278Q548,274 546,270M504,93Q503,99 502,104M301,94Q308,96 315,98M744,20Q739,15 737,8M421,3Q414,2 409,6M326,254Q323,247 318,243M703,143Q698,139 691,140M736,98Q731,97 727,94M929,192Q927,186 924,180M759,19Q757,24 758,30M771,222Q768,228 770,235M830,212Q832,218 837,221M726,259Q725,254 722,251M775,197Q776,202 781,205M190,23Q196,24 201,22M581,157Q580,153 575,151M389,297Q395,296 401,294M184,266Q179,265 176,260M791,246Q786,246 782,244M536,216Q541,213 547,210M730,244Q723,247 716,244M778,182Q783,188 784,195M733,280Q741,279 747,285M377,92Q384,95 391,99M578,276Q582,280 588,280M508,225Q511,231 509,237M693,172Q688,171 684,168M305,45Q312,48 318,45M586,263Q590,264 595,264M227,24Q221,21 214,24M413,283Q418,287 423,291M459,220Q464,217 469,216M912,286Q907,286 904,290M346,268Q342,274 337,278M875,219Q872,222 869,226M639,197Q645,197 651,199M626,186Q629,182 634,180M772,75Q771,67 767,61M270,30Q265,28 259,27M588,280Q590,275 595,273M540,179Q534,175 527,173M826,188Q818,183 815,174M597,194Q603,191 609,191M361,248Q367,242 366,234M890,67Q893,71 894,76M785,14Q791,14 796,11M651,51Q658,49 663,46M676,13Q678,17 680,21M316,206Q311,207 305,207M574,0Q577,2 581,3M258,279Q263,274 269,269M363,35Q370,40 376,47M681,234Q677,234 673,232M464,207Q458,205 456,199M315,82Q321,80 328,78M349,13Q343,11 337,9M611,70Q614,62 616,54M363,35Q360,41 356,46M663,239Q663,234 663,229M361,248Q359,253 357,258M833,55Q833,47 838,40M735,196Q738,200 739,205M916,173Q917,168 916,163M373,75Q380,79 386,85M746,254Q753,256 757,261M934,225Q932,231 929,235M830,212Q832,219 828,226M894,200Q890,202 886,204M679,62Q683,61 687,58M849,187Q849,182 849,177M461,123Q459,129 463,134M736,89Q730,89 727,94M756,56Q751,54 745,54M624,282Q620,280 615,280M522,214Q527,209 534,208M377,31Q376,23 373,15M745,271Q744,278 747,285M720,87Q724,85 728,83M543,140Q547,139 549,134M389,297Q386,289 388,281M606,100Q602,103 598,106M930,212Q927,215 925,219M858,59Q861,66 864,74M652,28Q654,24 657,20M441,238Q445,232 443,225M734,212Q736,209 739,205M768,32Q774,37 782,37M274,99Q270,103 265,106M475,98Q480,98 486,97M694,266Q691,270 687,271M674,248Q678,250 682,252M508,225Q505,223 500,222M526,255Q526,251 523,247M814,206Q820,205 827,204M833,55Q830,50 824,49M608,40Q612,42 617,43M880,192Q884,188 887,184M751,150Q750,155 748,160M594,253Q590,250 585,251M673,232Q668,229 663,229M343,32Q351,38 356,46M909,189Q906,193 908,198M517,179Q515,184 512,188M390,43Q383,47 376,47M933,15Q928,12 924,8M332,62Q326,64 322,69M584,201Q580,198 577,195M606,50Q602,48 599,44M870,128Q872,135 877,139M641,73Q645,69 649,70M654,288Q660,289 667,292M183,97Q179,105 180,114M590,4Q588,8 586,13M762,154Q759,159 758,164M877,52Q881,59 878,65M681,74Q684,80 683,86M669,222Q670,227 673,232M361,88Q356,83 356,76M573,60Q571,54 566,50M802,184Q802,178 802,173M386,85Q391,86 397,86M793,288Q791,283 790,277M920,42Q912,44 904,45M651,258Q646,260 642,260M511,81Q516,76 524,75M828,292Q833,289 839,289M205,78Q200,82 198,89M782,113Q786,118 786,125M436,169Q438,174 441,179M902,273Q899,267 899,260M486,281Q487,276 489,270M246,102Q252,98 260,97M730,244Q732,240 734,236M322,288Q313,291 308,298M302,263Q309,271 319,272M499,282Q493,286 488,291M819,139Q821,143 821,148M688,22Q684,22 680,21M472,156Q479,156 484,160M285,34Q288,40 294,41M801,114Q796,117 791,118M883,216Q881,210 877,204M729,145Q733,148 736,152M839,78Q836,85 828,88M802,88Q799,83 795,78M682,181Q686,175 684,168M508,113Q505,109 502,104M843,146Q844,140 848,136M274,99Q279,104 284,108M854,252Q850,257 849,264M818,222Q823,224 828,226M711,214Q705,217 699,217M639,238Q640,244 642,249M578,239Q579,246 585,251M544,236Q540,238 538,242M838,127Q843,131 848,136M685,118Q686,125 689,130M656,135Q660,137 664,140M607,249Q610,253 611,258M920,42Q924,35 924,27M674,136Q675,142 678,149M641,188Q648,187 651,182M599,228Q603,225 608,225M343,32Q342,25 340,19M691,13Q695,13 699,15M682,181Q689,182 696,181M303,277Q304,284 301,291M491,257Q489,264 489,270M826,79Q833,81 839,78M349,286Q356,289 360,295M184,266Q180,271 174,274M616,54Q621,61 620,69M752,207Q746,203 739,205M759,86Q764,85 769,85M651,199Q657,204 664,203M826,79Q819,78 815,73M589,109Q594,109 598,106M797,125Q793,122 791,118M859,11Q862,15 867,16M442,254Q441,249 435,247M913,96Q909,97 905,100M452,251Q457,250 462,250M724,152Q724,157 729,161M685,118Q683,114 686,110M758,117Q764,120 766,126M929,192Q923,191 917,189M769,261Q768,266 769,271M595,35Q598,30 598,25M534,226Q538,232 544,236M657,193Q654,187 651,182M481,264Q476,265 471,265M930,43Q928,38 930,33M246,297Q252,297 256,294M642,260Q646,263 649,267M881,131Q876,129 870,128M892,126Q894,121 898,116M633,249Q638,248 642,249M523,134Q521,130 517,128M903,74Q902,79 899,83M683,86Q689,86 694,82M523,224Q517,223 514,218M619,159Q624,158 629,156M915,86Q912,83 909,80M797,125Q794,131 793,138M857,285Q860,281 864,278M557,193Q557,198 557,203M914,154Q915,150 917,146M376,235Q376,228 375,222M669,39Q673,42 678,43M647,133Q652,133 656,135M789,188Q797,191 802,198M864,118Q868,119 873,119M915,54Q911,48 904,45M597,85Q596,90 597,95M882,287Q880,292 879,296M783,285Q777,286 772,290M611,70Q605,72 599,75M818,222Q820,217 822,212M712,271Q716,268 715,262M560,61Q565,67 571,69M403,271Q397,269 394,263M281,60Q275,60 271,65M262,59Q256,60 253,65M685,100Q687,92 683,86M343,256Q346,262 346,268M752,207Q759,210 767,211M700,154Q693,148 691,140M713,80Q709,86 707,94M772,280Q774,285 772,290M707,260Q710,263 715,262M670,196Q667,192 665,188M817,231Q817,236 818,241M168,119Q163,122 157,122M683,138Q681,143 678,149M356,76Q361,73 363,68M524,75Q520,80 519,85M289,268Q284,267 279,264M720,206Q724,202 729,203M894,174Q898,171 904,172M768,32Q768,24 772,17M811,183Q810,188 812,193M800,296Q801,292 802,287M568,174Q573,179 573,187M697,62Q699,66 704,68M300,217Q304,213 305,207M772,244Q777,241 778,236M805,157Q800,159 798,164M632,114Q630,110 625,109M316,206Q318,211 316,216M635,300Q631,297 626,295M774,138Q774,145 774,151M443,-2Q438,2 436,8M764,95Q764,102 760,109M761,240Q762,233 761,226M382,197Q384,189 391,185M731,228Q731,232 734,236M406,213Q415,208 421,199M707,125Q702,127 698,130M689,130Q685,128 681,127M890,247Q896,245 899,239M715,174Q714,179 710,182M859,11Q864,9 866,5M606,131Q599,134 593,132M398,7Q398,12 395,17M858,2Q862,2 866,5M223,285Q217,284 213,287M303,277Q301,270 302,263M450,128Q458,129 463,134M500,232Q497,241 489,244M772,280Q777,278 781,273M584,201Q589,203 596,204M859,11Q860,7 858,2M508,113Q510,108 511,103M595,264Q592,269 586,271M609,191Q609,185 612,180M409,19Q416,13 426,13M293,284Q298,281 303,277M559,168Q564,167 567,163M809,241Q810,246 812,251M800,277Q802,282 802,287M872,276Q869,279 864,278M430,212Q424,218 425,225M699,24Q692,26 689,32M639,58Q642,66 649,70M834,105Q838,106 843,105M314,56Q316,50 318,45M651,144Q654,150 660,154M669,95Q665,91 661,86M681,74Q677,76 673,79M459,220Q451,223 443,225M633,249Q631,244 627,240M770,235Q764,232 761,226M574,0Q573,5 570,8M711,235Q705,239 698,237M596,53Q600,57 604,60M638,272Q644,271 649,267M855,19Q852,22 847,24M894,217Q891,222 888,227M361,248Q366,246 371,244M486,281Q490,285 488,291M608,25Q605,20 603,14M517,128Q519,124 524,123M454,283Q450,289 448,296M900,194Q905,193 909,189M912,239Q915,244 914,250M520,150Q517,146 515,141M815,174Q809,174 802,173M772,244Q766,247 759,248M685,158Q683,152 678,149M594,253Q597,247 600,241M857,269Q856,274 852,278M613,169Q609,167 606,163M875,14Q877,9 874,4M726,259Q734,257 739,251M356,46Q360,50 364,53M769,105Q768,110 769,114M739,40Q735,43 731,46M244,278Q249,287 256,294M713,68Q718,69 722,71M896,20Q902,20 908,19M703,143Q707,151 715,153M382,66Q386,75 386,85M552,31Q551,37 552,44M763,197Q764,204 767,211M724,276Q730,272 736,272M548,96Q555,97 561,100M778,68Q783,66 787,62M799,35Q795,39 795,44M606,131Q608,137 605,142M733,280Q728,279 724,276M288,2Q282,2 277,3M688,5Q680,6 676,13M903,205Q897,210 894,217M312,258Q314,266 319,272M687,67Q691,64 697,62M259,27Q253,30 249,35M925,290Q926,283 931,279M361,272Q357,280 349,286M780,90Q785,86 791,86M616,29Q611,28 608,25M795,78Q801,78 807,81M513,283Q512,278 507,276M815,130Q814,124 819,120M900,181Q903,177 904,172M624,282Q620,277 619,270M624,176Q627,173 628,168M378,291Q379,283 378,276M918,212Q924,215 930,212M902,132Q898,128 892,126M826,188Q818,187 811,183M917,114Q923,116 929,116M468,299Q463,301 457,301M772,290Q778,294 786,295M326,264Q326,259 326,254M904,45Q899,47 892,46M563,133Q561,128 556,126M856,31Q858,37 862,42M507,154Q511,156 513,161M583,168Q589,169 594,169M557,203Q563,204 568,201M738,121Q742,118 745,114M864,278Q858,276 852,278M454,283Q459,281 463,276M619,159Q614,164 606,163M553,288Q549,285 544,285M924,180Q928,178 932,179M777,122Q774,117 769,114M748,232Q745,236 742,239M219,270Q224,271 229,273M814,261Q818,261 822,264M789,268Q789,273 790,277M547,261Q548,266 546,270M759,19Q756,22 752,24M666,74Q662,79 661,86M475,281Q481,283 486,281M628,266Q624,270 619,270M721,38Q726,35 732,35M604,60Q600,64 595,64M451,176Q448,181 447,187M833,114Q836,121 838,127M196,114Q192,120 190,126M781,273Q775,271 769,271M806,55Q799,50 795,44M621,216Q616,212 608,212M589,109Q591,113 595,116M557,258Q560,263 566,265M599,75Q605,82 613,84M189,294Q185,288 187,281M569,108Q563,106 561,100M615,280Q618,276 619,270M826,79Q822,82 818,84M608,212Q607,218 608,225M834,105Q832,101 830,97M269,269Q273,275 275,282M784,160Q777,162 771,159M544,224Q540,220 536,216M924,103Q918,108 910,109M764,95Q764,89 769,85M249,35Q245,28 238,24M807,64Q812,67 815,73M537,168Q540,173 540,179M590,44Q593,49 596,53M612,150Q612,158 606,163M698,115Q701,109 708,106M499,282Q506,287 509,294M168,119Q169,113 170,106M867,35Q869,39 873,41M655,122Q659,125 662,128M834,147Q828,150 824,156M187,281Q182,284 180,289M515,230Q520,228 523,224M690,211Q683,212 677,215M47,4Q37,-1 26,-0M924,103Q924,110 929,116M761,282Q754,283 747,285M426,13Q430,9 436,8M750,126Q756,130 763,134M541,120Q534,122 530,129M789,173Q794,181 802,184M867,287Q875,286 882,287M780,53Q775,50 770,51M869,84Q864,84 860,81M742,143Q747,142 750,137M915,54Q913,61 911,68M586,63Q579,69 576,77M556,126Q553,130 549,134M599,125Q600,119 605,115M924,93Q929,93 932,97M929,192Q934,186 932,179M536,216Q528,218 522,214M418,87Q415,83 412,77M586,263Q580,262 576,265M882,255Q882,259 880,263M219,115Q211,123 201,129M755,98Q756,104 760,109M530,116Q527,119 524,123M876,28Q877,34 882,38M809,147Q806,144 800,144M632,216Q627,216 621,216M866,234Q875,237 879,244M841,11Q834,12 828,11M296,52Q302,51 305,45M708,15Q703,17 699,15M552,146Q556,146 560,145M872,276Q870,281 867,287M711,235Q709,243 702,247M399,235Q401,230 400,225M661,12Q653,8 645,9M421,199Q414,198 407,198M885,102Q879,101 874,97M390,43Q395,39 397,33M855,49Q855,54 858,59M849,187Q854,182 860,179M619,251Q613,251 607,249M805,157Q798,153 791,154M913,223Q908,227 906,232M634,8Q633,13 630,16M314,11Q317,18 321,25M931,279Q933,286 935,294M711,214Q716,216 718,221M623,87Q627,83 632,83M878,65Q874,65 870,63M790,5Q785,4 781,2M724,295Q727,292 731,289M538,106Q538,100 535,96M708,15Q708,11 706,6M211,2Q205,5 200,9M669,222Q672,218 677,215M745,5Q747,10 751,14M611,70Q616,70 620,69M348,68Q340,61 341,51M603,176Q600,171 594,169M866,218Q869,222 869,226M696,5Q697,10 699,15M800,277Q794,273 789,268M615,107Q620,108 625,109M581,288Q582,292 582,297M164,263Q170,264 176,260M780,90Q781,86 779,82M409,19Q401,21 395,17M839,289Q839,295 838,302M596,143Q595,137 593,132M380,106Q380,99 377,92M734,182Q739,182 743,178M507,154Q501,152 495,151M880,162Q875,159 869,156M770,235Q765,238 761,240M784,143Q788,139 793,138M535,191Q536,198 542,203M655,122Q658,117 661,111M282,21Q283,28 285,34M287,89Q295,91 301,94M724,152Q721,146 722,139M420,30Q417,35 411,36M715,174Q720,171 726,174M661,12Q662,6 665,1M643,207Q644,211 643,216M600,241Q604,244 607,249M732,109Q726,111 721,108M615,291Q611,289 606,288M619,260Q620,265 619,270M862,90Q867,94 874,97M654,228Q658,228 663,229M689,130Q687,135 683,138M337,278Q327,278 319,272M232,14Q234,20 238,24M757,261Q763,261 769,261M687,67Q691,70 696,72M652,2Q647,4 645,9M573,27Q571,31 567,34M576,77Q575,82 577,86M523,281Q525,277 530,275M589,109Q587,105 586,100M880,192Q876,186 876,179M343,256Q335,251 326,254M742,143Q740,148 736,152M916,173Q918,178 924,180M675,168Q667,168 660,170M660,154Q666,155 671,160M205,78Q214,78 222,82M376,235Q381,227 390,225M482,231Q477,224 479,215M499,282Q492,283 486,281M691,200Q693,194 688,188M662,128Q657,130 656,135M523,134Q523,129 524,123M615,280Q610,278 608,272M616,29Q620,27 624,24M737,162Q738,157 736,152M376,1Q382,-1 388,2M538,279Q542,281 544,285M563,133Q559,138 560,145M914,154Q909,157 904,154M930,43Q926,47 924,50M697,40Q694,34 689,32M337,9Q339,2 344,-1M883,216Q886,222 888,227M912,239Q905,239 899,239M622,148Q618,145 614,142M619,159Q617,154 612,150M729,161Q733,157 736,152M562,182Q568,182 573,187M701,87Q696,86 694,82M810,299Q812,294 814,288M195,266Q190,267 184,266M227,45Q228,35 227,24M785,14Q782,11 777,10M725,14Q720,12 715,11M641,73Q640,65 639,58M491,257Q485,259 481,264M606,163Q600,164 594,169M624,176Q625,181 626,186M499,282Q496,289 497,296M451,209Q447,212 442,214M658,209Q662,213 668,214M855,144Q849,148 843,146M356,46Q354,53 354,59M827,41Q823,39 819,41M543,140Q538,141 533,139M661,111Q658,104 661,97M585,191Q590,189 594,186M879,229Q883,226 888,227M590,4Q591,10 595,14M581,157Q574,160 567,163M847,24Q844,21 839,20M894,200Q893,209 894,217M569,117Q565,115 560,116M781,28Q781,33 782,37M765,254Q761,251 759,248M880,192Q880,198 877,204M713,294Q711,290 707,288M775,197Q780,197 784,195M860,179Q868,181 876,179M624,24Q626,32 627,40M650,172Q652,166 651,160M248,23Q254,22 257,16M521,190Q516,192 514,197M499,271Q504,272 507,276M561,295Q564,291 563,287M879,244Q877,248 873,250M750,126Q750,119 745,114M288,73Q290,67 292,62M673,79Q666,81 661,86M382,256Q378,248 371,244M550,248Q546,252 541,253M582,116Q582,108 578,102M890,247Q892,242 889,237M782,244Q779,241 778,236M763,197Q758,197 754,193M477,255Q480,249 477,243M488,140Q482,135 475,135M500,232Q502,227 500,222M871,297Q867,293 867,287M702,247Q701,242 698,237M660,170Q661,174 663,178M432,188Q426,186 421,182M699,24Q698,32 697,40M849,298Q844,302 838,302M860,297Q856,291 849,289M651,144Q652,139 656,135M896,20Q901,23 905,27M702,207Q700,212 699,217M294,21Q297,26 301,30M790,201Q794,204 796,208M827,204Q824,200 820,198M864,118Q867,114 870,109M388,281Q383,278 378,276M709,35Q711,41 715,45M523,134Q529,135 533,139M289,268Q285,278 275,282M578,230Q580,234 578,239M443,225Q444,219 442,214M180,114Q183,122 190,126M602,279Q605,275 608,272M807,1Q812,1 818,-0M538,106Q544,105 550,105M638,16Q640,12 645,9M724,236Q722,242 716,244M349,13Q346,17 340,19M610,122Q607,119 605,115M287,89Q281,88 275,87M877,148Q878,143 877,139M573,142Q566,142 560,145M270,30Q277,35 285,34M769,261Q766,258 765,254M540,294Q543,290 544,285M737,162Q733,161 729,161M296,52Q287,49 277,51M858,59Q864,61 870,63M624,136Q618,137 614,142M541,120Q546,121 550,118M523,281Q527,283 531,285M760,2Q753,5 745,5M682,181Q685,185 688,188M614,201Q613,207 608,212M535,96Q531,101 530,108M334,229Q339,237 345,245M541,120Q536,118 530,116M606,131Q602,128 599,125M803,74Q809,76 815,73M238,1Q231,2 226,-1M394,196Q388,193 382,197M782,244Q777,242 772,244M587,89Q591,86 597,85M334,229Q327,229 322,233M787,62Q792,64 796,67M462,176Q467,181 472,187M643,216Q639,218 637,223M615,291Q620,295 626,295M855,144Q850,141 848,136M669,105Q666,109 661,111M658,209Q658,214 654,218M361,248Q361,240 356,234M504,200Q509,198 514,197M644,150Q640,146 633,145M568,201Q571,197 577,195M462,261Q458,265 452,264M569,117Q575,118 582,116M258,279Q251,280 244,278M638,16Q634,15 630,16M671,180Q670,185 665,188M540,294Q535,290 531,285M458,186Q465,185 472,187M653,241Q650,237 646,234M680,-2Q684,1 688,5M430,212Q435,210 437,204M683,138Q687,140 691,140M257,80Q264,77 272,75M622,127Q627,124 633,125M294,21Q294,14 299,9M604,60Q605,55 606,50M452,251Q453,243 455,234M651,60Q649,65 649,70M639,238Q643,238 646,234M840,168Q845,172 849,177M759,86Q763,79 760,71M582,141Q585,147 591,151M679,206Q677,200 670,196M406,213Q411,215 417,216M781,205Q785,201 784,195M748,232Q744,230 740,227M903,250Q905,255 909,259M900,107Q903,104 905,100M544,190Q546,197 542,203M429,264Q438,262 442,254M349,13Q355,14 361,11M544,224Q539,224 534,226M601,295Q605,292 606,288M452,264Q447,270 440,274M889,139Q885,146 884,154M632,216Q635,219 637,223M677,189Q671,188 665,188M694,291Q698,287 700,282M639,238Q636,231 637,223M830,238Q836,237 840,232M841,241Q846,240 851,243M710,204Q716,203 720,206M690,211Q694,214 699,217M310,285Q304,286 301,291M361,88Q354,90 348,89M201,129Q194,133 188,140M594,253Q596,258 595,264M337,290Q339,296 342,302M711,214Q716,211 720,206M593,300Q588,297 582,297M827,171Q828,176 829,180M503,137Q496,139 488,140M692,278Q690,285 694,291M774,151Q769,148 767,143M805,42Q800,42 795,44M769,85Q774,83 779,82M184,266Q188,273 187,281M782,113Q786,116 791,118M517,179Q521,174 520,167M800,19Q802,24 807,28M717,20Q712,18 708,15M411,247Q403,243 399,235M489,244Q483,241 477,243M260,97Q267,96 274,99M586,13Q590,14 595,14M464,207Q467,202 467,196M735,56Q734,61 729,65M900,107Q906,111 908,118M841,11Q838,15 839,20M746,30Q747,25 744,20M624,77Q628,76 632,74M670,122Q672,129 674,136M646,224Q641,225 637,223M726,174Q722,179 721,185M849,187Q850,193 852,198M682,264Q678,260 672,258M475,281Q470,289 461,291M535,96Q530,95 524,94M441,160Q447,159 451,153M771,222Q776,220 777,214M417,216Q421,221 425,225M212,48Q220,47 227,45M774,138Q779,131 777,122M924,103Q923,98 924,93M278,294Q283,285 293,284M326,264Q332,266 337,264M755,98Q750,100 747,105M876,79Q873,82 869,84M646,278Q649,275 654,276M643,207Q651,205 658,209M880,162Q875,167 870,171M802,88Q807,87 811,90M331,31Q332,24 329,18M529,266Q532,263 534,259M853,115Q847,113 841,115M800,277Q795,277 790,277M588,177Q589,172 594,169M807,230Q814,228 818,222M535,96Q539,93 543,89M552,31Q560,29 567,34M841,11Q838,6 835,0M633,105Q629,108 625,109M550,278Q555,280 561,277M588,76Q584,70 586,63M237,108Q235,99 240,92M851,84Q851,88 852,92M572,95Q566,97 561,100M588,234Q595,232 599,228M913,131Q909,138 907,146M588,76Q594,72 595,64M723,266Q716,267 712,271M595,35Q598,39 599,44M802,262Q808,261 814,261M606,288Q602,284 602,279M647,91Q652,88 653,82M324,91Q329,89 335,90M397,33Q392,25 395,17M849,187Q857,188 865,188M684,168Q680,166 675,168M560,89Q564,86 569,83M507,154Q513,151 520,150M844,255Q839,252 835,248M680,-2Q677,1 673,3M533,139Q530,142 526,144M889,139Q895,140 900,141M518,269Q522,274 530,275M665,188Q664,183 663,178M391,246Q381,243 371,244M628,168Q634,166 637,161M537,269Q533,272 530,275M459,220Q457,213 451,209M180,130Q185,128 190,126M520,294Q527,292 531,285M925,150Q926,155 924,159M301,94Q296,98 294,103M576,249Q578,252 578,257M227,103Q231,107 237,108M315,82Q320,86 324,91M590,160Q587,165 583,168M237,36Q235,30 238,24M846,225Q854,223 858,217M395,212Q395,219 400,225M407,188Q401,192 394,196M461,123Q465,117 472,115M859,208Q860,213 858,217M669,95Q673,87 673,79M929,235Q926,238 922,242M706,6Q701,9 699,15M590,160Q598,163 606,163M183,97Q190,100 197,103M922,122Q926,124 929,128M247,7Q250,14 257,16M312,36Q307,31 301,30M376,1Q370,9 361,11M778,182Q775,178 771,176M502,181Q506,187 512,188M856,31Q858,25 855,19M731,46Q729,40 732,35M803,252Q797,255 790,255M681,279Q684,284 684,291M896,162Q902,166 904,172M715,2Q711,6 706,6M820,97Q819,90 818,84M521,106Q516,112 516,119M431,284Q429,290 423,291M716,133Q718,129 722,127M859,208Q851,210 846,215M769,105Q770,100 773,95M624,201Q627,204 631,206M746,30Q750,29 752,24M369,213Q374,216 375,222M726,4Q721,9 715,11M711,194Q708,188 710,182M407,188Q398,188 391,185M757,142Q760,138 763,134M866,234Q868,230 869,226M550,177Q556,178 562,182M674,52Q681,51 687,50M343,256Q343,250 345,245M274,113Q276,106 274,99M586,63Q591,62 595,64M621,97Q617,102 615,107M767,143Q764,139 763,134M669,271Q675,267 682,264M602,4Q605,7 610,7M851,243Q858,241 865,245M356,76Q347,74 338,79M917,200Q922,200 927,201M905,27Q907,32 909,36M684,291Q679,291 675,288M397,33Q401,25 409,19M651,144Q647,147 644,150M720,164Q723,161 729,161M928,250Q924,256 922,262M554,53Q552,48 552,44M604,60Q610,58 616,54M807,230Q806,236 809,241M586,100Q582,102 578,102M572,95Q574,99 578,102M747,105Q754,105 760,109M377,31Q377,39 376,47M598,106Q601,111 605,115M765,254Q771,250 772,244M375,222Q371,228 366,234M378,291Q373,288 369,284M338,100Q341,93 348,89M729,27Q733,27 738,27M806,215Q801,219 797,223M590,44Q594,43 599,44M896,148Q901,150 904,154M614,201Q618,208 621,216M844,255Q849,250 851,243M390,43Q388,49 385,54M813,112Q809,117 806,123M920,42Q914,40 909,36M385,14Q389,17 395,17M812,193Q817,195 820,198M631,206Q627,212 621,216M734,182Q737,177 736,172M346,268Q343,264 337,264M322,69Q325,74 328,78M758,117Q760,113 760,109M820,97Q816,92 811,90M349,13Q350,6 355,-0M763,197Q769,199 775,197M492,170Q486,166 484,160M913,131Q919,128 922,122M917,189Q913,191 909,189M698,257Q700,252 702,247M866,218Q862,219 858,217M538,106Q546,110 550,118M596,143Q589,142 582,141M641,118Q646,119 650,115M637,161Q637,167 639,173M396,74Q404,78 412,77M593,300Q594,294 594,289M517,179Q509,177 502,181M824,156Q831,157 837,157M810,299Q805,297 800,296M633,135Q634,130 633,125M277,3Q277,11 272,16M590,4Q586,6 581,3M722,71Q727,69 729,65M822,274Q817,273 811,273M149,146Q151,139 156,134M791,109Q792,113 791,118M636,28Q635,22 638,16M429,264Q425,257 425,248M827,41Q827,45 824,49M423,278Q426,285 423,291M432,188Q440,190 447,187M707,162Q708,169 705,175M491,257Q497,255 504,253M844,274Q841,268 838,262M524,94Q520,90 519,85M526,255Q530,255 534,259M865,188Q865,183 860,179M788,234Q785,239 782,244M557,193Q554,196 550,198M655,122Q649,126 647,133M694,95Q699,98 700,103M704,274Q705,267 707,260M634,94Q637,100 643,101M397,33Q398,38 402,42M845,34Q840,36 838,40M877,52Q875,59 870,63M523,281Q518,280 513,283M642,84Q643,88 647,91M843,146Q841,141 838,137M826,257Q822,260 822,264M812,251Q817,247 818,241M665,1Q669,3 673,3M628,168Q621,171 613,169M524,238Q525,243 523,247M437,204Q439,209 442,214M734,182Q734,189 735,196M789,268Q785,270 781,273M586,13Q586,19 581,23M382,66Q391,68 399,63M608,25Q610,22 612,17M791,109Q790,104 790,99M841,180Q843,186 849,187M891,108Q892,104 895,100M577,129Q585,134 593,132M628,168Q632,174 634,180M659,66Q664,69 666,74M857,285Q853,286 849,289M769,261Q776,258 778,251M331,242Q324,244 318,243M425,77Q421,82 418,87M616,223Q622,228 630,228M481,264Q479,273 475,281M883,111Q876,111 870,109M793,288Q798,291 800,296M861,109Q857,108 853,106M554,53Q560,53 566,50M668,148Q665,153 660,154M627,63Q624,57 625,50M420,30Q420,20 426,13M934,51Q928,54 926,59M777,122Q782,119 782,113M849,298Q854,298 860,297M560,89Q559,95 561,100M674,136Q669,131 662,128M833,55Q836,58 841,58M696,181Q700,178 705,175M610,122Q614,127 615,132M748,171Q754,171 759,173M607,90Q607,95 606,100M452,264Q455,272 463,276M494,194Q499,192 503,190M729,145Q729,139 732,135M790,213Q787,207 781,205M837,91Q832,92 830,97M556,126Q560,122 560,116M841,11Q844,7 847,3M662,55Q665,60 669,63M585,191Q585,186 582,183M397,33Q403,37 411,36M881,122Q886,121 889,118M793,138Q788,138 784,134M544,236Q538,238 532,235" fill="none" stroke="#f2d686" stroke-width=".7"/>
<path d="M763,138Q775,141 781,139L787,137M166,24Q180,25 186,24Q193,23 200,20L206,18M685,184Q671,184 664,184L657,184M698,269Q688,258 681,256Q675,255 668,254L661,253M935,14Q924,21 919,26L915,31M895,136Q897,150 901,157L904,164M908,61Q897,70 896,77L895,84M889,44Q900,51 904,56L908,61M494,132Q493,144 494,150Q495,155 495,161Q495,167 498,172L501,177M385,30Q395,25 400,21Q404,17 409,15Q414,12 420,10L425,7M889,44Q893,31 892,23L891,16M657,184Q664,171 667,165Q671,158 675,152L679,146M233,106Q228,95 226,89Q224,83 223,77Q222,70 221,64Q221,58 220,52L219,45M685,122Q688,106 684,99L679,92M837,60Q825,54 819,53Q812,51 806,51L799,51M552,244Q541,252 536,256L531,260M866,78Q880,84 888,84L895,84M809,254Q810,267 809,274Q807,280 806,287L804,293M728,174Q723,187 717,191L711,195M368,248Q360,240 357,236Q353,232 349,228L345,224M552,89Q563,95 569,97Q575,100 581,102L587,105M303,199Q308,210 307,216Q306,221 306,227L306,233M736,270Q747,280 754,283L761,286M501,177Q504,189 507,195L510,200M790,110Q804,112 810,115L816,118M494,132Q504,125 509,121L515,118M851,-2Q840,8 835,14Q831,19 827,26L824,32M515,118Q528,118 533,115L539,111M929,168Q922,158 921,153Q920,147 920,142Q920,136 920,130L921,125M504,242Q503,229 500,224Q496,219 492,215L488,210M782,273Q771,279 766,282L761,286M802,80Q796,66 797,59L799,51M754,165Q761,152 762,145L763,138M847,231Q856,239 858,245Q860,251 864,255Q869,259 872,264L875,270M570,226Q583,227 588,231L593,234M651,149Q656,160 658,166Q660,171 658,177L657,184M344,300Q337,289 333,284Q330,278 327,272L325,266M260,57Q255,67 253,72Q252,78 248,82Q244,87 241,91Q238,96 236,101L233,106M701,14Q707,24 709,29Q712,35 715,40L718,45M385,30Q372,26 367,22Q361,17 356,13L351,9M704,169Q696,161 693,156Q689,152 684,149L679,146M570,226Q566,216 565,210Q564,205 562,200L559,195M570,226Q558,221 552,219L546,218M902,109Q888,108 881,110L875,113M658,71Q668,83 674,87L679,92M892,194Q885,181 881,174L877,168M738,220Q724,220 718,223L712,226M859,48Q845,48 839,44Q834,40 829,36L824,32M814,208Q810,195 805,191L800,188M494,132Q481,135 475,138Q469,141 465,147L461,152M592,293Q580,294 574,294Q568,293 562,292Q556,292 550,290L544,289M892,194Q905,198 912,201L918,205M587,105Q578,111 573,113Q568,116 564,120L560,124M614,136Q598,138 590,139L582,140M641,206Q642,219 643,226L644,233M524,229Q516,215 513,207L510,200M875,270Q863,268 857,267Q851,266 846,263Q842,259 837,255L833,251M524,229Q535,222 540,220L546,218M902,109Q897,122 896,129L895,136M396,262Q391,278 391,286L391,294M583,256Q571,263 564,266L557,269M915,233Q912,218 915,212L918,205M718,76Q731,83 738,82L746,81M260,57Q246,56 239,55Q232,53 226,49L219,45M826,177Q829,165 827,160Q826,154 822,149L819,145M892,194Q890,206 888,212Q887,218 884,224L880,229M396,262Q383,255 376,251L368,248M746,81Q750,68 748,62L746,55M736,244Q726,250 721,253Q716,255 711,258Q706,260 702,265L698,269M396,262Q406,252 409,245Q413,239 417,233L421,227M682,61Q688,49 689,42L691,36M309,86Q305,74 302,68Q300,63 300,56L300,49M843,104Q828,108 822,113L816,118M306,233Q318,230 325,228Q331,226 338,225L345,224M718,76Q718,60 718,53L718,45M711,100Q715,88 716,82L718,76M447,250Q457,235 456,226L455,218M644,280Q641,268 639,262L637,256M782,273Q780,261 780,255Q780,248 779,242L778,236M704,169Q712,158 717,154Q722,149 728,144L733,140M736,24Q747,26 752,27Q758,28 763,30L768,33M277,88Q267,95 261,97Q256,99 250,101Q244,103 239,104L233,106M570,226Q579,214 582,207L585,199M429,195Q426,211 424,219L421,227M857,191Q847,198 843,203L839,207M462,186Q475,182 481,181Q488,179 494,178L501,177M641,26Q633,35 630,40Q627,45 622,49L617,52M620,233Q610,225 608,219L606,213M828,300Q840,290 847,288L854,285M744,113Q740,97 743,89L746,81M644,280Q655,281 661,282Q666,283 671,287L676,290M857,191Q847,186 841,185Q836,184 831,180L826,177M804,293Q819,287 825,281L831,276M850,160Q848,144 850,136L853,128M798,21Q796,36 798,44L799,51M661,112Q671,102 675,97L679,92M552,89Q544,100 542,106L539,111M709,136Q695,145 687,146L679,146M537,52Q541,65 543,71Q545,77 549,83L552,89M620,233Q623,221 627,217Q631,213 636,209L641,206M802,80Q815,79 821,82L827,85M728,174Q737,185 744,187L750,189M368,248Q358,255 353,257Q348,260 342,261Q336,262 330,264L325,266M857,191Q854,175 852,168L850,160M859,48Q848,55 842,57L837,60M736,24Q738,35 740,40Q741,45 744,50L746,55M537,52Q550,56 557,58L563,59M546,158Q536,165 530,167L524,168M736,244Q748,247 754,251L759,254M685,184Q697,193 704,194L711,195M828,300Q826,287 828,281L831,276M247,27Q238,32 233,36Q229,39 224,42L219,45M685,184Q682,172 682,165Q681,159 680,153L679,146M682,61Q683,76 681,84L679,92M368,248Q371,236 373,230Q375,224 379,219L383,214M616,107Q625,100 630,97Q635,95 640,93L646,92M206,18Q216,30 218,38L219,45M709,136Q696,131 691,126L685,122M798,21Q809,30 816,31L824,32M777,199Q763,197 757,193L750,189M782,273Q795,263 802,258L809,254M828,300Q815,301 809,297L804,293M283,11Q298,13 304,17Q311,20 317,23L324,27M877,168Q864,160 857,160L850,160M570,226Q561,235 556,239L552,244M587,105Q589,117 588,123Q586,129 584,135L582,140M620,233Q631,243 634,250L637,256M585,49Q601,51 609,51L617,52M612,188Q597,189 591,194L585,199M754,165Q740,155 737,147L733,140M587,105Q597,93 603,87L608,82M902,109Q911,118 916,121L921,125M534,193Q530,180 527,174L524,168M260,57Q274,56 281,54Q287,52 294,51L300,49M661,112Q673,117 679,119L685,122M701,14Q696,25 694,30L691,36M651,149Q665,150 672,148L679,146M709,136Q721,138 727,139L733,140M895,136Q883,137 878,140L872,143M718,45Q732,49 739,52L746,55M847,231Q832,232 825,233Q818,234 811,231L804,229M685,122Q683,134 681,140L679,146M396,262Q408,256 415,255Q421,254 428,253Q434,252 441,251L447,250M661,41Q666,30 667,24Q668,18 671,13L674,8M826,177Q830,187 832,193Q833,198 836,203L839,207M584,81Q596,82 602,82L608,82M180,102Q186,112 190,117Q194,121 199,124L204,127M324,27Q311,37 306,43L300,49M641,26Q627,29 619,28L612,28M809,254Q821,255 827,253L833,251M546,158Q550,171 553,177Q555,183 557,189L559,195M584,81Q567,83 560,86L552,89M478,263Q468,259 462,258Q456,257 452,253L447,250M560,124Q569,135 575,138L582,140M584,81Q577,67 570,63L563,59M368,248Q359,257 357,262Q355,267 353,272Q351,278 350,283Q348,289 346,294L344,300M859,48Q874,45 881,45L889,44M509,80Q521,88 526,94Q530,100 535,106L539,111M504,242Q493,247 489,250Q485,254 481,259L478,263M325,266Q320,255 315,250Q310,245 308,239L306,233M704,169Q707,158 707,153Q708,147 709,142L709,136M156,126Q166,120 169,115Q173,110 176,106L180,102M584,168Q599,167 606,165Q613,164 620,162L627,161M651,149Q647,139 644,134Q641,129 639,124L636,119M744,113Q754,104 761,103L767,102M771,78Q758,76 752,79L746,81M768,33Q754,42 750,48L746,55M585,49Q576,58 570,59L563,59M850,160Q838,158 833,154Q829,151 824,148L819,145M853,128Q841,132 836,136Q830,139 825,142L819,145M334,70Q328,60 327,54Q326,49 326,43Q325,38 325,32L324,27M777,199Q781,213 787,217Q792,221 798,225L804,229M674,8Q683,21 687,29L691,36M854,285Q842,282 836,279L831,276M344,300Q355,296 361,295Q367,294 373,295Q379,296 385,295L391,294M559,195Q552,206 549,212L546,218M902,109Q902,96 899,90L895,84M728,174Q728,162 730,157Q731,151 732,145L733,140M744,113Q738,126 735,133L733,140M612,188Q601,184 597,180Q593,175 589,172L584,168M859,48Q859,35 860,29L862,22M891,16Q876,18 869,20L862,22M778,236Q766,242 762,248L759,254M661,41Q677,43 684,39L691,36M303,199Q314,204 320,205Q326,207 331,211Q336,215 340,220L345,224M544,289Q531,285 524,284Q517,283 511,286L504,289M843,104Q855,99 858,94Q861,89 863,84L866,78M736,24Q724,20 719,18Q713,16 707,15L701,14M283,11Q287,25 290,31Q294,37 297,43L300,49M918,205Q908,211 903,213Q898,216 893,218Q888,221 884,225L880,229M802,80Q806,93 809,99Q812,105 814,111L816,118M925,100Q914,104 908,107L902,109M711,100Q697,91 688,91L679,92M929,168Q916,165 910,164L904,164M277,88Q293,93 301,90L309,86M557,269Q553,281 548,285L544,289M504,242Q506,254 505,260Q504,266 504,272Q503,277 504,283L504,289M461,152Q470,160 475,163Q480,166 485,169Q491,171 496,174L501,177M826,177Q813,182 806,185L800,188M736,244Q735,232 737,226L738,220M494,132Q499,144 503,148Q507,152 512,155Q517,159 521,164L524,168M470,301Q460,297 454,295Q449,293 443,291Q438,289 432,287L427,285M704,169Q696,178 690,181L685,184M771,78Q786,81 794,80L802,80M180,102Q187,92 189,87Q191,81 193,76Q196,71 200,67Q204,62 208,58Q212,54 216,50L219,45M736,270Q749,264 754,259L759,254M583,256Q574,250 568,249Q562,248 557,246L552,244M857,191Q864,200 868,204Q872,208 874,213Q877,218 879,223L880,229M908,61Q912,46 913,38L915,31M614,136Q624,126 630,123L636,119M782,273Q767,267 763,261L759,254M746,81Q756,92 762,97L767,102M612,277Q602,270 598,267Q593,263 588,259L583,256M819,145Q817,131 817,125L816,118M668,226Q679,221 685,218L690,216M530,139Q535,125 537,118L539,111M546,158Q551,147 552,141Q553,134 557,129L560,124M530,139Q530,154 527,161L524,168M651,149Q639,156 633,158L627,161M895,136Q887,123 881,118L875,113M231,280Q245,272 253,270L261,269M657,184Q646,193 643,199L641,206M925,100Q920,112 920,118L921,125M777,199Q787,191 794,189L800,188M782,273Q790,286 797,290L804,293M651,149Q651,136 654,130Q657,124 659,118L661,112M668,226Q679,235 685,239L691,243M334,70Q324,62 319,57Q314,53 307,51L300,49M787,137Q796,129 801,127Q807,125 812,121L816,118M658,71Q654,83 650,87L646,92M843,104Q836,94 832,90L827,85M889,44Q880,54 876,60Q873,66 869,72L866,78M759,254Q764,270 763,278L761,286M921,294Q910,288 906,284L902,279M711,100Q700,105 697,109Q693,114 689,118L685,122M169,296Q183,291 190,286L196,282M771,78Q770,90 769,96L767,102M698,269Q710,277 712,285L715,292M866,78Q869,90 871,95Q873,101 874,107L875,113M477,103Q490,107 496,110Q502,113 508,115L515,118M698,269Q690,257 691,250L691,243M510,200Q519,191 521,185Q522,180 523,174L524,168M826,177Q810,174 804,168L799,163M334,70Q322,79 315,83L309,86M877,168Q878,155 875,149L872,143M620,233Q632,233 638,233L644,233M427,285Q415,289 409,290Q403,292 397,293L391,294M875,270Q864,277 859,281L854,285M738,220Q749,230 756,232Q763,234 770,235L778,236M824,32Q814,45 806,48L799,51M853,128Q846,117 845,111L843,104M641,206Q630,212 624,212Q618,213 612,213L606,213M557,269Q567,280 573,283Q579,286 585,290L592,293M388,91Q378,81 375,75Q372,68 370,62L368,55M552,244Q547,231 547,224L546,218M768,33Q776,25 781,22Q786,20 792,20L798,21M661,41Q660,56 659,63L658,71M383,214Q370,216 363,217Q357,217 351,221L345,224M462,186Q456,202 456,210L455,218M925,100Q914,97 909,94Q905,91 900,88L895,84M585,49Q596,58 599,64Q602,69 605,76L608,82M614,136Q624,147 626,154L627,161M421,227Q433,226 438,224Q444,222 449,220L455,218M851,-2Q855,11 858,17L862,22M712,226Q715,211 713,203L711,195M641,26Q652,20 658,18Q664,16 669,12L674,8M819,145Q809,154 804,159L799,163M914,257Q905,267 903,273L902,279M334,70Q345,64 350,61Q356,58 362,56L368,55M447,250Q437,244 434,239Q430,235 425,231L421,227M850,160Q861,152 866,147L872,143M853,128Q860,139 866,141L872,143M583,256Q588,268 591,274Q593,280 593,286L592,293M617,52Q612,67 610,74L608,82M537,52Q548,44 551,37L554,31M584,168Q577,178 573,183Q569,187 564,191L559,195M260,57Q258,40 252,34L247,27M790,110Q788,123 788,130L787,137M704,169Q709,182 710,188L711,195M685,184Q682,201 686,208L690,216M614,136Q610,121 613,114L616,107M837,60Q836,43 830,38L824,32M524,229Q523,245 527,253L531,260M661,253Q677,249 684,246L691,243M704,169Q715,176 721,175L728,174M534,193Q546,196 553,195L559,195M809,254Q807,241 805,235L804,229M534,193Q522,196 516,198L510,200M859,48Q866,62 866,70L866,78M546,158Q559,154 565,151Q571,149 576,145L582,140M504,242Q514,235 519,232L524,229M738,220Q726,214 722,211Q717,207 714,201L711,195M552,89Q556,73 560,66L563,59M826,177Q816,191 815,199L814,208M630,72Q644,66 651,69L658,71M290,276Q302,274 308,273Q314,272 320,269L325,266M290,276Q292,265 293,259Q293,253 295,247Q297,242 301,238L306,233M324,27Q335,34 339,39Q344,44 350,47Q355,50 362,52L368,55M736,24Q729,36 723,40L718,45M925,100Q920,86 918,80Q916,73 912,67L908,61M233,106Q220,109 216,112Q211,116 208,122L204,127M636,119Q638,105 642,98L646,92M698,269Q685,277 680,284L676,290M895,136Q910,134 915,129L921,125M584,168Q584,154 583,147L582,140M509,80Q499,89 494,93Q490,98 484,101L477,103M744,113Q732,112 726,110Q721,108 716,104L711,100M892,194Q894,177 899,170L904,164M630,72Q636,83 641,87L646,92M754,165Q766,166 771,168Q777,169 782,169Q788,169 793,166L799,163M585,49Q585,33 581,26L577,19M584,81Q580,65 583,57L585,49M584,168Q586,184 585,191L585,199M691,243Q691,229 691,222L690,216M711,195Q701,206 696,211L690,216M914,257Q915,245 915,239L915,233M790,110Q792,93 797,86L802,80M875,270Q873,255 874,249Q876,242 878,236L880,229M718,45Q703,45 697,40L691,36M560,124Q547,122 543,117L539,111M682,61Q695,56 701,54Q707,53 713,49L718,45M866,78Q854,84 847,84Q841,84 834,85L827,85M557,269Q543,267 537,264L531,260M616,107Q625,114 631,117L636,119M206,18Q220,22 227,23Q234,23 241,25L247,27M283,11Q271,16 266,19Q260,23 254,25L247,27M612,277Q602,284 597,289L592,293M918,205Q919,192 922,186Q924,180 926,174L929,168M612,188Q621,175 624,168L627,161M462,186Q470,195 474,199Q478,204 483,207L488,210M711,100Q715,113 714,118Q713,124 711,130L709,136M585,49Q575,43 569,41Q563,39 559,35L554,31M891,16Q904,22 909,26L915,31M544,289Q536,275 534,268L531,260M728,174Q741,170 748,167L754,165M661,253Q668,240 668,233L668,226M488,210Q498,202 504,201L510,200M509,80Q512,92 513,99Q513,105 514,111L515,118M546,158Q559,162 565,164Q571,167 578,167L584,168M612,188Q622,193 626,198Q630,202 635,204L641,206M814,208Q809,219 806,224L804,229M718,76Q729,71 733,67Q737,63 742,59L746,55M814,208Q826,206 833,207L839,207M385,30Q379,44 374,50L368,55M661,253Q667,265 670,271Q673,277 675,283L676,290M494,132Q489,122 487,117Q484,112 481,108L477,103M630,72Q625,61 621,56L617,52M585,199Q595,208 600,211L606,213M577,19Q589,19 595,21Q601,24 606,26L612,28M847,231Q842,242 837,246L833,251M790,110Q779,107 773,104L767,102M504,242Q517,252 524,256L531,260M509,80Q519,85 524,87Q529,90 535,90Q541,90 546,89L552,89M585,199Q571,201 565,198L559,195M587,105Q601,109 608,108L616,107M853,128Q866,123 870,118L875,113M778,236Q791,235 797,232L804,229M661,41Q672,50 677,56L682,61M290,276Q275,276 268,272L261,269M809,254Q818,267 824,271L831,276" fill="none" stroke="#f4cd70" stroke-width="1.05" stroke-linejoin="round"/>
<path d="M367,56Q351,54 343,55L335,55M335,55Q324,52 318,50Q313,49 307,49Q301,50 296,51L290,52M290,52Q277,50 271,52Q265,54 260,56L254,59M367,56Q354,49 348,46Q342,43 335,42Q328,40 322,39L315,37M315,37Q309,26 307,20Q305,14 303,8Q302,2 301,-4L300,-10M254,59Q241,53 234,55L228,57M228,57Q218,51 212,49Q207,47 202,45Q197,42 191,41L185,40M185,40Q175,31 169,27Q164,23 157,21L150,20M254,59Q244,72 240,78L235,85M235,85Q229,96 225,100Q221,105 216,108L211,112M211,112Q203,121 197,125Q192,128 187,132L183,137M183,137Q168,135 161,136Q154,138 147,139L140,140M211,112Q205,102 200,98Q195,95 190,93L185,90M367,56Q358,63 354,68L350,72M350,72Q345,84 341,89Q337,95 334,100L330,106M350,72Q344,82 340,85Q335,88 330,91Q325,95 322,99L318,103M318,103Q301,104 294,108L287,112M318,103Q305,99 300,95L295,90M295,90Q283,88 277,86Q271,85 265,84Q259,82 253,82Q247,82 241,84L235,85M367,56Q367,67 367,73Q367,79 369,84Q372,89 374,95L376,100M367,56Q377,61 384,62Q390,63 395,67L400,70M400,70Q410,76 416,78Q422,80 427,83L432,86M432,86Q439,83 439,79L440,75M400,70Q413,72 420,73Q427,74 433,75L440,75M367,56Q373,43 374,37Q375,30 376,24Q377,17 378,10L378,4M254,59Q260,43 265,37L270,30M270,30Q276,19 279,13Q282,8 287,3Q291,-1 295,-6L300,-10M367,56Q376,49 382,47Q387,44 392,42L398,40M398,40Q408,37 411,33L415,30M415,30Q423,25 426,23L430,20M430,20Q433,7 436,1L440,-5M378,4Q391,4 397,4Q403,4 410,4Q416,4 422,1Q428,-1 434,-3L440,-5M318,103Q323,91 324,85Q326,79 328,73Q330,67 333,61L335,55M335,55Q326,45 320,41L315,37M287,112Q274,109 268,109Q262,109 255,107Q249,105 243,105Q236,105 230,107Q223,109 217,110L211,112M376,100Q364,100 359,102Q353,104 347,105Q342,105 336,106L330,106M376,100Q387,99 393,99Q399,98 404,97L410,95M410,95Q421,90 426,88L432,86M367,56Q376,63 379,68Q383,72 387,77Q391,81 395,85Q400,88 405,92L410,95M290,52Q279,42 275,36L270,30M315,37Q304,36 298,35Q292,35 287,34Q281,34 275,32L270,30M457,93Q467,87 472,88L478,88M478,88Q486,96 491,99Q495,102 499,106Q503,111 507,115L511,118M457,93Q463,103 468,106Q472,110 476,115Q479,120 482,125Q484,130 487,135L490,140M490,140Q488,151 488,157Q488,163 487,169Q487,175 484,180Q482,186 482,191Q481,197 482,203Q482,209 483,215Q483,221 482,226Q480,232 480,238L479,244M511,118Q498,127 494,134L490,140M511,118Q522,120 528,123Q533,125 539,127L545,128M545,128Q555,122 559,117Q562,111 566,107L570,103M545,128Q558,130 564,129L570,128M570,128Q580,128 585,127L590,125M590,125Q602,123 607,121Q613,120 619,119L625,118M570,103Q579,115 585,120L590,125M590,125Q601,130 606,133Q610,137 614,141Q618,145 623,148Q628,152 632,155Q636,159 640,163Q644,168 647,173L650,178M457,93Q454,104 451,110Q449,115 447,121Q445,126 447,132Q448,138 449,144L450,150M450,150Q445,161 442,166Q439,171 435,176Q432,181 429,186Q425,191 424,197L422,203M450,150Q463,157 466,164L470,170M470,170Q472,182 473,188Q474,194 475,201Q475,207 475,213Q475,219 476,225Q477,231 478,238L479,244M470,170Q479,162 483,157Q487,153 489,146L490,140M470,170Q481,169 487,170Q492,171 497,173Q503,175 508,174Q514,174 520,174L525,175M525,175Q531,185 532,190Q534,196 537,200Q540,205 542,210L545,215M490,140Q498,149 501,155Q504,161 509,165Q513,169 519,172L525,175M478,88Q490,85 495,84Q501,83 507,84Q512,86 518,87Q524,89 529,89L535,90M535,90Q545,98 551,100Q557,102 564,103L570,103M535,90Q549,90 555,87Q561,84 567,81L573,78M535,90Q525,98 521,103Q518,108 514,113L511,118M573,78Q571,90 571,97L570,103M573,78Q578,65 578,58Q577,51 577,45Q577,38 576,31L576,24M576,24Q577,13 578,8Q579,2 582,-3L585,-8M573,78Q584,72 590,70Q597,69 602,65Q607,61 613,58L618,55M618,55Q631,58 637,61Q643,64 649,67Q654,71 661,72Q668,72 674,74L680,76M576,24Q588,25 595,27Q601,28 608,30Q614,31 620,31Q627,30 633,30L640,30M640,30Q652,33 657,37Q662,40 667,43Q672,46 677,49Q682,51 687,55L692,58M618,55Q623,44 628,41Q633,38 636,34L640,30M618,55Q623,66 626,71Q628,76 631,82Q633,87 632,94L632,100M632,100Q630,109 627,114L625,118M632,100Q641,102 645,102L650,103M570,103Q581,105 587,105Q593,105 599,106Q604,107 609,111Q614,114 620,116L625,118M625,118Q638,111 644,107L650,103M650,103Q663,100 669,98Q675,96 682,96L688,96M625,118Q629,130 631,137Q633,143 634,150Q635,156 638,162Q642,167 646,173L650,178M650,178Q649,190 650,196Q650,203 650,209L650,215M650,178Q661,177 666,177L672,178M672,178Q680,169 685,164Q689,160 692,154Q695,149 699,143Q702,138 707,134L712,130M650,215Q654,226 656,232Q658,238 656,244L655,250M650,215Q663,213 670,211Q676,210 683,211L690,212M690,212Q706,210 714,208L722,205M722,205Q734,205 740,205Q746,206 751,203L757,200M650,215Q661,218 666,221Q671,223 676,226Q681,229 686,231Q690,234 695,237Q700,239 705,242Q710,245 714,249Q718,253 721,258L725,263M655,250Q667,252 672,253Q678,255 684,255Q690,255 696,255Q702,256 708,258Q713,259 719,261L725,263M655,250Q663,261 667,266Q672,271 673,278L675,285M650,215Q638,215 632,214Q627,213 621,214L615,215M615,215Q603,214 598,215Q592,215 586,217Q580,218 574,218Q568,218 562,217Q557,216 551,216L545,215M545,215Q534,219 527,220Q521,221 515,222Q509,223 504,226Q499,229 494,234Q490,238 484,241L479,244M545,215Q559,221 565,226L570,232M570,232Q569,244 568,250Q567,256 566,262Q565,268 564,274Q562,280 559,285L555,290M570,232Q581,230 587,227Q592,225 598,223Q603,220 609,219Q615,217 621,217Q627,218 633,217Q639,217 644,216L650,215M545,215Q552,206 556,202Q560,198 565,195Q570,192 574,188Q578,184 581,179L585,175M585,175Q585,162 587,156Q588,150 589,144Q589,138 590,131L590,125M479,244Q485,233 489,228Q493,223 495,218Q497,212 499,206L500,200M500,200Q505,189 509,184Q513,180 519,177L525,175M479,244Q469,238 464,235Q459,233 453,232Q447,231 442,230Q436,229 430,227L425,225M425,225Q423,214 422,209L422,203M425,225Q413,224 408,222Q402,220 396,219Q390,219 384,220Q378,220 373,221Q367,221 361,221L355,221M479,244Q470,236 465,233Q460,230 456,226Q451,222 447,218Q443,214 438,211Q433,208 427,206L422,203M422,203Q410,198 404,197Q397,197 391,196L385,195M422,203Q411,208 406,210Q401,212 395,215Q390,217 385,219Q379,222 373,222Q367,223 361,222L355,221M355,221Q343,217 338,215Q332,212 327,209Q322,206 317,203Q312,199 306,196Q301,194 295,191L290,188M355,221Q347,230 344,234Q340,239 337,244Q334,249 329,253Q325,257 321,261Q316,265 313,270Q310,275 307,280Q304,285 300,290L296,294M296,294Q289,283 286,277Q284,271 282,264L280,258M296,294Q287,286 282,283Q278,280 273,276Q268,273 264,269Q259,266 253,265Q247,264 241,263L235,262M235,262Q224,265 218,266Q213,267 207,266Q201,266 196,268Q190,270 185,272Q179,274 174,275L168,276M168,276Q178,287 182,294L185,301M185,301Q200,302 208,301L215,300M215,300Q227,300 232,299Q238,298 244,297Q250,297 256,297Q261,298 267,298Q273,298 279,297Q285,297 290,295L296,294M296,294Q309,296 316,294Q322,293 329,291L335,290M335,290Q347,294 353,297Q359,300 365,301Q371,303 377,302L384,302M384,302Q395,298 399,294Q404,291 409,288Q414,285 419,283Q424,280 430,278Q435,276 440,273L445,270M445,270Q457,262 463,257Q468,253 474,248L479,244M479,244Q474,256 472,261Q469,267 466,273Q463,279 462,286Q462,292 461,299L460,305M479,244Q489,249 494,252Q498,255 503,257Q508,260 513,263Q518,266 522,269Q526,273 531,276Q536,279 540,282Q545,286 550,288L555,290M555,290Q566,291 572,293Q577,294 583,297Q588,299 593,301Q598,303 604,305Q609,306 615,308L620,310M655,250Q648,259 643,263Q639,267 635,272Q631,276 630,282Q629,288 627,294Q624,299 622,304L620,310M355,221Q360,235 363,241Q367,248 368,255L370,262M370,262Q372,276 375,283Q377,289 381,296L384,302M296,294Q301,307 301,313L300,320M479,244Q487,253 490,257Q493,262 496,267Q499,272 503,276Q506,281 511,285Q515,289 517,294Q520,300 522,305L525,310M555,290Q543,294 538,298Q534,301 529,306L525,310M384,302Q397,305 403,307Q409,309 415,311Q422,312 428,311Q434,309 441,308Q447,306 454,306L460,305M422,203Q432,197 437,195Q443,192 447,189Q452,185 456,181Q461,177 465,173L470,170M688,96Q685,86 682,81L680,76M680,76Q685,67 689,62L692,58M692,58Q702,60 707,57L712,54M712,54Q723,48 728,46Q734,43 738,38Q743,34 747,29Q751,24 756,20L761,16M761,16Q770,9 775,5Q779,2 784,-2Q788,-6 794,-8L800,-10M712,54Q723,53 728,53Q734,54 739,52Q745,50 750,47Q755,44 760,42L765,40M765,40Q774,48 778,52Q782,57 787,60Q793,63 798,66L803,69M803,69Q811,59 815,55Q819,51 825,48L830,45M830,45Q822,35 819,30Q816,24 814,18Q811,12 809,6Q807,1 803,-5L800,-10M830,45Q843,48 850,49Q857,49 863,50L870,50M870,50Q881,51 887,50Q892,49 898,48Q903,48 909,47Q914,47 920,46L925,45M925,45Q932,56 936,61L940,66M925,45Q917,33 914,27Q910,21 906,15L901,10M901,10Q890,7 884,5Q879,4 873,4Q867,4 861,4Q856,3 850,1Q845,-0 839,-3Q834,-5 828,-7Q823,-8 817,-8Q811,-8 806,-9L800,-10M803,69Q806,80 806,86Q807,92 809,97Q810,103 812,108Q813,114 814,119L815,125M815,125Q805,131 801,134Q796,137 792,140Q787,144 783,148Q778,151 773,153L768,155M815,125Q820,137 822,143Q824,150 826,156Q829,162 829,168L830,175M803,69Q794,78 788,82Q783,86 778,90Q774,95 772,101Q770,108 767,114L765,120M765,120Q764,132 764,138Q765,143 766,149L768,155M688,96Q694,101 695,105L697,108M697,108Q701,121 707,126L712,130M712,130Q719,139 722,144Q726,148 730,152Q734,155 740,158L745,160M745,160Q757,161 762,158L768,155M688,96Q700,98 706,98Q712,98 718,100Q724,102 729,103L735,105M735,105Q746,107 752,109Q757,111 761,116L765,120M712,54Q718,64 721,68Q724,73 728,78Q731,82 732,88Q734,93 734,99L735,105M768,155Q763,163 764,168L765,172M765,172Q763,186 760,193L757,200M757,200Q760,211 758,217Q757,222 756,228L754,233M757,200Q771,203 776,208Q781,212 785,217L790,222M790,222Q788,236 789,243L789,250M790,222Q800,217 806,215Q811,214 816,214Q822,213 827,211Q832,209 838,207Q843,205 848,204Q854,203 860,203Q865,204 871,203L876,202M754,233Q766,238 772,242Q777,245 783,247L789,250M754,233Q745,243 740,249Q736,254 730,258L725,263M725,263Q724,277 726,283L728,290M728,290Q728,299 732,302L735,305M754,233Q750,245 749,251Q747,258 744,263Q741,269 738,274Q734,279 731,284L728,290M789,250Q799,255 804,258Q809,261 814,263Q820,264 825,267L830,270M830,270Q843,269 849,271Q856,272 862,274L868,277M868,277Q881,280 887,282Q893,284 899,285Q905,287 910,292L915,296M789,250Q788,258 787,261L785,265M785,265Q785,276 785,282Q785,288 786,293Q786,299 788,305L790,310M830,270Q835,280 837,285Q839,291 840,296Q842,301 846,306L850,310M876,202Q883,214 885,220Q887,227 890,233Q893,239 897,244L900,250M900,250Q900,263 902,269Q903,274 906,280Q910,285 912,290L915,296M876,202Q887,208 892,210Q898,211 903,215Q908,218 913,221Q918,224 923,226Q929,228 935,230L940,232M768,155Q780,158 786,161Q792,163 799,166Q805,168 811,169Q818,171 824,173L830,175M830,175Q844,178 849,182Q855,185 860,190Q865,195 871,199L876,202M830,175Q843,172 850,171Q857,170 864,167L870,165M870,165Q873,177 874,184Q874,190 875,196L876,202M870,165Q871,149 876,142L880,135M880,135Q880,124 878,118Q877,112 877,107Q877,101 878,96L880,90M870,165Q882,169 888,169Q893,168 899,167L905,165M905,165Q897,174 892,178Q888,181 884,186Q880,190 878,196L876,202M803,69Q814,71 820,73Q825,74 831,74Q837,74 843,75Q848,76 854,78Q859,81 864,84Q869,87 875,88L880,90M880,90Q890,81 897,79Q903,77 909,76Q915,74 921,71Q927,69 934,67L940,66M880,90Q875,77 874,70Q872,64 871,57L870,50M712,54Q705,40 705,33L705,25M705,25Q711,14 715,10Q720,7 725,3L730,0M730,0Q740,6 746,7Q752,9 756,13L761,16M692,58Q698,48 699,42Q700,36 703,31L705,25M712,54Q705,64 702,70Q700,75 697,81Q695,86 692,91L688,96M830,175Q835,186 838,192Q841,197 844,202Q847,208 849,214L850,220M850,220Q864,212 870,207L876,202M850,220Q844,232 841,238Q838,244 836,251Q834,257 832,264L830,270M790,222Q796,211 801,207Q806,204 810,199Q814,194 817,189Q820,183 825,179L830,175M745,160Q741,172 738,178Q735,183 733,189Q730,195 726,200L722,205M745,160Q749,173 752,180Q755,186 756,193L757,200M672,178Q679,189 681,195Q683,201 687,207L690,212M712,130Q726,130 732,128Q739,126 745,124Q752,122 758,121L765,120M725,263Q713,270 706,272Q700,273 693,276Q687,279 681,282L675,285M675,285Q687,289 693,291Q699,293 705,294Q712,295 717,298Q723,301 729,303L735,305M880,90Q886,100 887,106Q888,111 889,117Q891,122 893,127Q896,132 899,137Q901,142 902,148Q903,154 904,159L905,165M868,277Q877,266 881,260Q886,255 893,252L900,250M850,220Q854,231 853,238Q853,244 856,249Q858,255 861,260Q864,266 866,271L868,277M692,58Q680,57 673,57Q667,57 661,55Q655,53 649,52Q643,52 637,53Q630,54 624,55L618,55M640,30Q653,29 660,30Q666,30 673,30Q679,31 686,30Q692,28 699,27L705,25M650,103Q663,97 667,92Q672,87 676,81L680,76M697,108Q685,108 679,107Q673,107 667,107Q661,107 656,105L650,103M830,45Q840,51 844,54Q848,58 852,63Q855,68 859,72Q863,76 867,79Q872,83 876,86L880,90M815,125Q826,119 831,115Q836,112 841,109Q847,107 853,105Q859,103 864,100Q870,97 875,93L880,90M356.5,55.0a9.5,7.5 0 1 0 19.0,0a9.5,7.5 0 1 0 -19.0,0M473.0,243.0a6,5 0 1 0 12,0a6,5 0 1 0 -12,0M565.8,103.0a4.5,4 0 1 0 9.0,0a4.5,4 0 1 0 -9.0,0M569.5,78.0a3.5,3 0 1 0 7.0,0a3.5,3 0 1 0 -7.0,0" fill="none" stroke="#f2bb4e" stroke-width="2.5" stroke-linejoin="round"/>
<path d="M367,56Q351,54 343,55L335,55M335,55Q324,52 318,50Q313,49 307,49Q301,50 296,51L290,52M290,52Q277,50 271,52Q265,54 260,56L254,59M367,56Q354,49 348,46Q342,43 335,42Q328,40 322,39L315,37M315,37Q309,26 307,20Q305,14 303,8Q302,2 301,-4L300,-10M254,59Q241,53 234,55L228,57M228,57Q218,51 212,49Q207,47 202,45Q197,42 191,41L185,40M185,40Q175,31 169,27Q164,23 157,21L150,20M254,59Q244,72 240,78L235,85M235,85Q229,96 225,100Q221,105 216,108L211,112M211,112Q203,121 197,125Q192,128 187,132L183,137M183,137Q168,135 161,136Q154,138 147,139L140,140M211,112Q205,102 200,98Q195,95 190,93L185,90M367,56Q358,63 354,68L350,72M350,72Q345,84 341,89Q337,95 334,100L330,106M350,72Q344,82 340,85Q335,88 330,91Q325,95 322,99L318,103M318,103Q301,104 294,108L287,112M318,103Q305,99 300,95L295,90M295,90Q283,88 277,86Q271,85 265,84Q259,82 253,82Q247,82 241,84L235,85M367,56Q367,67 367,73Q367,79 369,84Q372,89 374,95L376,100M367,56Q377,61 384,62Q390,63 395,67L400,70M400,70Q410,76 416,78Q422,80 427,83L432,86M432,86Q439,83 439,79L440,75M400,70Q413,72 420,73Q427,74 433,75L440,75M367,56Q373,43 374,37Q375,30 376,24Q377,17 378,10L378,4M254,59Q260,43 265,37L270,30M270,30Q276,19 279,13Q282,8 287,3Q291,-1 295,-6L300,-10M367,56Q376,49 382,47Q387,44 392,42L398,40M398,40Q408,37 411,33L415,30M415,30Q423,25 426,23L430,20M430,20Q433,7 436,1L440,-5M378,4Q391,4 397,4Q403,4 410,4Q416,4 422,1Q428,-1 434,-3L440,-5M318,103Q323,91 324,85Q326,79 328,73Q330,67 333,61L335,55M335,55Q326,45 320,41L315,37M287,112Q274,109 268,109Q262,109 255,107Q249,105 243,105Q236,105 230,107Q223,109 217,110L211,112M376,100Q364,100 359,102Q353,104 347,105Q342,105 336,106L330,106M376,100Q387,99 393,99Q399,98 404,97L410,95M410,95Q421,90 426,88L432,86M367,56Q376,63 379,68Q383,72 387,77Q391,81 395,85Q400,88 405,92L410,95M290,52Q279,42 275,36L270,30M315,37Q304,36 298,35Q292,35 287,34Q281,34 275,32L270,30M457,93Q467,87 472,88L478,88M478,88Q486,96 491,99Q495,102 499,106Q503,111 507,115L511,118M457,93Q463,103 468,106Q472,110 476,115Q479,120 482,125Q484,130 487,135L490,140M490,140Q488,151 488,157Q488,163 487,169Q487,175 484,180Q482,186 482,191Q481,197 482,203Q482,209 483,215Q483,221 482,226Q480,232 480,238L479,244M511,118Q498,127 494,134L490,140M511,118Q522,120 528,123Q533,125 539,127L545,128M545,128Q555,122 559,117Q562,111 566,107L570,103M545,128Q558,130 564,129L570,128M570,128Q580,128 585,127L590,125M590,125Q602,123 607,121Q613,120 619,119L625,118M570,103Q579,115 585,120L590,125M590,125Q601,130 606,133Q610,137 614,141Q618,145 623,148Q628,152 632,155Q636,159 640,163Q644,168 647,173L650,178M457,93Q454,104 451,110Q449,115 447,121Q445,126 447,132Q448,138 449,144L450,150M450,150Q445,161 442,166Q439,171 435,176Q432,181 429,186Q425,191 424,197L422,203M450,150Q463,157 466,164L470,170M470,170Q472,182 473,188Q474,194 475,201Q475,207 475,213Q475,219 476,225Q477,231 478,238L479,244M470,170Q479,162 483,157Q487,153 489,146L490,140M470,170Q481,169 487,170Q492,171 497,173Q503,175 508,174Q514,174 520,174L525,175M525,175Q531,185 532,190Q534,196 537,200Q540,205 542,210L545,215M490,140Q498,149 501,155Q504,161 509,165Q513,169 519,172L525,175M478,88Q490,85 495,84Q501,83 507,84Q512,86 518,87Q524,89 529,89L535,90M535,90Q545,98 551,100Q557,102 564,103L570,103M535,90Q549,90 555,87Q561,84 567,81L573,78M535,90Q525,98 521,103Q518,108 514,113L511,118M573,78Q571,90 571,97L570,103M573,78Q578,65 578,58Q577,51 577,45Q577,38 576,31L576,24M576,24Q577,13 578,8Q579,2 582,-3L585,-8M573,78Q584,72 590,70Q597,69 602,65Q607,61 613,58L618,55M618,55Q631,58 637,61Q643,64 649,67Q654,71 661,72Q668,72 674,74L680,76M576,24Q588,25 595,27Q601,28 608,30Q614,31 620,31Q627,30 633,30L640,30M640,30Q652,33 657,37Q662,40 667,43Q672,46 677,49Q682,51 687,55L692,58M618,55Q623,44 628,41Q633,38 636,34L640,30M618,55Q623,66 626,71Q628,76 631,82Q633,87 632,94L632,100M632,100Q630,109 627,114L625,118M632,100Q641,102 645,102L650,103M570,103Q581,105 587,105Q593,105 599,106Q604,107 609,111Q614,114 620,116L625,118M625,118Q638,111 644,107L650,103M650,103Q663,100 669,98Q675,96 682,96L688,96M625,118Q629,130 631,137Q633,143 634,150Q635,156 638,162Q642,167 646,173L650,178M650,178Q649,190 650,196Q650,203 650,209L650,215M650,178Q661,177 666,177L672,178M672,178Q680,169 685,164Q689,160 692,154Q695,149 699,143Q702,138 707,134L712,130M650,215Q654,226 656,232Q658,238 656,244L655,250M650,215Q663,213 670,211Q676,210 683,211L690,212M690,212Q706,210 714,208L722,205M722,205Q734,205 740,205Q746,206 751,203L757,200M650,215Q661,218 666,221Q671,223 676,226Q681,229 686,231Q690,234 695,237Q700,239 705,242Q710,245 714,249Q718,253 721,258L725,263M655,250Q667,252 672,253Q678,255 684,255Q690,255 696,255Q702,256 708,258Q713,259 719,261L725,263M655,250Q663,261 667,266Q672,271 673,278L675,285M650,215Q638,215 632,214Q627,213 621,214L615,215M615,215Q603,214 598,215Q592,215 586,217Q580,218 574,218Q568,218 562,217Q557,216 551,216L545,215M545,215Q534,219 527,220Q521,221 515,222Q509,223 504,226Q499,229 494,234Q490,238 484,241L479,244M545,215Q559,221 565,226L570,232M570,232Q569,244 568,250Q567,256 566,262Q565,268 564,274Q562,280 559,285L555,290M570,232Q581,230 587,227Q592,225 598,223Q603,220 609,219Q615,217 621,217Q627,218 633,217Q639,217 644,216L650,215M545,215Q552,206 556,202Q560,198 565,195Q570,192 574,188Q578,184 581,179L585,175M585,175Q585,162 587,156Q588,150 589,144Q589,138 590,131L590,125M479,244Q485,233 489,228Q493,223 495,218Q497,212 499,206L500,200M500,200Q505,189 509,184Q513,180 519,177L525,175M479,244Q469,238 464,235Q459,233 453,232Q447,231 442,230Q436,229 430,227L425,225M425,225Q423,214 422,209L422,203M425,225Q413,224 408,222Q402,220 396,219Q390,219 384,220Q378,220 373,221Q367,221 361,221L355,221M479,244Q470,236 465,233Q460,230 456,226Q451,222 447,218Q443,214 438,211Q433,208 427,206L422,203M422,203Q410,198 404,197Q397,197 391,196L385,195M422,203Q411,208 406,210Q401,212 395,215Q390,217 385,219Q379,222 373,222Q367,223 361,222L355,221M355,221Q343,217 338,215Q332,212 327,209Q322,206 317,203Q312,199 306,196Q301,194 295,191L290,188M355,221Q347,230 344,234Q340,239 337,244Q334,249 329,253Q325,257 321,261Q316,265 313,270Q310,275 307,280Q304,285 300,290L296,294M296,294Q289,283 286,277Q284,271 282,264L280,258M296,294Q287,286 282,283Q278,280 273,276Q268,273 264,269Q259,266 253,265Q247,264 241,263L235,262M235,262Q224,265 218,266Q213,267 207,266Q201,266 196,268Q190,270 185,272Q179,274 174,275L168,276M168,276Q178,287 182,294L185,301M185,301Q200,302 208,301L215,300M215,300Q227,300 232,299Q238,298 244,297Q250,297 256,297Q261,298 267,298Q273,298 279,297Q285,297 290,295L296,294M296,294Q309,296 316,294Q322,293 329,291L335,290M335,290Q347,294 353,297Q359,300 365,301Q371,303 377,302L384,302M384,302Q395,298 399,294Q404,291 409,288Q414,285 419,283Q424,280 430,278Q435,276 440,273L445,270M445,270Q457,262 463,257Q468,253 474,248L479,244M479,244Q474,256 472,261Q469,267 466,273Q463,279 462,286Q462,292 461,299L460,305M479,244Q489,249 494,252Q498,255 503,257Q508,260 513,263Q518,266 522,269Q526,273 531,276Q536,279 540,282Q545,286 550,288L555,290M555,290Q566,291 572,293Q577,294 583,297Q588,299 593,301Q598,303 604,305Q609,306 615,308L620,310M655,250Q648,259 643,263Q639,267 635,272Q631,276 630,282Q629,288 627,294Q624,299 622,304L620,310M355,221Q360,235 363,241Q367,248 368,255L370,262M370,262Q372,276 375,283Q377,289 381,296L384,302M296,294Q301,307 301,313L300,320M479,244Q487,253 490,257Q493,262 496,267Q499,272 503,276Q506,281 511,285Q515,289 517,294Q520,300 522,305L525,310M555,290Q543,294 538,298Q534,301 529,306L525,310M384,302Q397,305 403,307Q409,309 415,311Q422,312 428,311Q434,309 441,308Q447,306 454,306L460,305M422,203Q432,197 437,195Q443,192 447,189Q452,185 456,181Q461,177 465,173L470,170M688,96Q685,86 682,81L680,76M680,76Q685,67 689,62L692,58M692,58Q702,60 707,57L712,54M712,54Q723,48 728,46Q734,43 738,38Q743,34 747,29Q751,24 756,20L761,16M761,16Q770,9 775,5Q779,2 784,-2Q788,-6 794,-8L800,-10M712,54Q723,53 728,53Q734,54 739,52Q745,50 750,47Q755,44 760,42L765,40M765,40Q774,48 778,52Q782,57 787,60Q793,63 798,66L803,69M803,69Q811,59 815,55Q819,51 825,48L830,45M830,45Q822,35 819,30Q816,24 814,18Q811,12 809,6Q807,1 803,-5L800,-10M830,45Q843,48 850,49Q857,49 863,50L870,50M870,50Q881,51 887,50Q892,49 898,48Q903,48 909,47Q914,47 920,46L925,45M925,45Q932,56 936,61L940,66M925,45Q917,33 914,27Q910,21 906,15L901,10M901,10Q890,7 884,5Q879,4 873,4Q867,4 861,4Q856,3 850,1Q845,-0 839,-3Q834,-5 828,-7Q823,-8 817,-8Q811,-8 806,-9L800,-10M803,69Q806,80 806,86Q807,92 809,97Q810,103 812,108Q813,114 814,119L815,125M815,125Q805,131 801,134Q796,137 792,140Q787,144 783,148Q778,151 773,153L768,155M815,125Q820,137 822,143Q824,150 826,156Q829,162 829,168L830,175M803,69Q794,78 788,82Q783,86 778,90Q774,95 772,101Q770,108 767,114L765,120M765,120Q764,132 764,138Q765,143 766,149L768,155M688,96Q694,101 695,105L697,108M697,108Q701,121 707,126L712,130M712,130Q719,139 722,144Q726,148 730,152Q734,155 740,158L745,160M745,160Q757,161 762,158L768,155M688,96Q700,98 706,98Q712,98 718,100Q724,102 729,103L735,105M735,105Q746,107 752,109Q757,111 761,116L765,120M712,54Q718,64 721,68Q724,73 728,78Q731,82 732,88Q734,93 734,99L735,105M768,155Q763,163 764,168L765,172M765,172Q763,186 760,193L757,200M757,200Q760,211 758,217Q757,222 756,228L754,233M757,200Q771,203 776,208Q781,212 785,217L790,222M790,222Q788,236 789,243L789,250M790,222Q800,217 806,215Q811,214 816,214Q822,213 827,211Q832,209 838,207Q843,205 848,204Q854,203 860,203Q865,204 871,203L876,202M754,233Q766,238 772,242Q777,245 783,247L789,250M754,233Q745,243 740,249Q736,254 730,258L725,263M725,263Q724,277 726,283L728,290M728,290Q728,299 732,302L735,305M754,233Q750,245 749,251Q747,258 744,263Q741,269 738,274Q734,279 731,284L728,290M789,250Q799,255 804,258Q809,261 814,263Q820,264 825,267L830,270M830,270Q843,269 849,271Q856,272 862,274L868,277M868,277Q881,280 887,282Q893,284 899,285Q905,287 910,292L915,296M789,250Q788,258 787,261L785,265M785,265Q785,276 785,282Q785,288 786,293Q786,299 788,305L790,310M830,270Q835,280 837,285Q839,291 840,296Q842,301 846,306L850,310M876,202Q883,214 885,220Q887,227 890,233Q893,239 897,244L900,250M900,250Q900,263 902,269Q903,274 906,280Q910,285 912,290L915,296M876,202Q887,208 892,210Q898,211 903,215Q908,218 913,221Q918,224 923,226Q929,228 935,230L940,232M768,155Q780,158 786,161Q792,163 799,166Q805,168 811,169Q818,171 824,173L830,175M830,175Q844,178 849,182Q855,185 860,190Q865,195 871,199L876,202M830,175Q843,172 850,171Q857,170 864,167L870,165M870,165Q873,177 874,184Q874,190 875,196L876,202M870,165Q871,149 876,142L880,135M880,135Q880,124 878,118Q877,112 877,107Q877,101 878,96L880,90M870,165Q882,169 888,169Q893,168 899,167L905,165M905,165Q897,174 892,178Q888,181 884,186Q880,190 878,196L876,202M803,69Q814,71 820,73Q825,74 831,74Q837,74 843,75Q848,76 854,78Q859,81 864,84Q869,87 875,88L880,90M880,90Q890,81 897,79Q903,77 909,76Q915,74 921,71Q927,69 934,67L940,66M880,90Q875,77 874,70Q872,64 871,57L870,50M712,54Q705,40 705,33L705,25M705,25Q711,14 715,10Q720,7 725,3L730,0M730,0Q740,6 746,7Q752,9 756,13L761,16M692,58Q698,48 699,42Q700,36 703,31L705,25M712,54Q705,64 702,70Q700,75 697,81Q695,86 692,91L688,96M830,175Q835,186 838,192Q841,197 844,202Q847,208 849,214L850,220M850,220Q864,212 870,207L876,202M850,220Q844,232 841,238Q838,244 836,251Q834,257 832,264L830,270M790,222Q796,211 801,207Q806,204 810,199Q814,194 817,189Q820,183 825,179L830,175M745,160Q741,172 738,178Q735,183 733,189Q730,195 726,200L722,205M745,160Q749,173 752,180Q755,186 756,193L757,200M672,178Q679,189 681,195Q683,201 687,207L690,212M712,130Q726,130 732,128Q739,126 745,124Q752,122 758,121L765,120M725,263Q713,270 706,272Q700,273 693,276Q687,279 681,282L675,285M675,285Q687,289 693,291Q699,293 705,294Q712,295 717,298Q723,301 729,303L735,305M880,90Q886,100 887,106Q888,111 889,117Q891,122 893,127Q896,132 899,137Q901,142 902,148Q903,154 904,159L905,165M868,277Q877,266 881,260Q886,255 893,252L900,250M850,220Q854,231 853,238Q853,244 856,249Q858,255 861,260Q864,266 866,271L868,277M692,58Q680,57 673,57Q667,57 661,55Q655,53 649,52Q643,52 637,53Q630,54 624,55L618,55M640,30Q653,29 660,30Q666,30 673,30Q679,31 686,30Q692,28 699,27L705,25M650,103Q663,97 667,92Q672,87 676,81L680,76M697,108Q685,108 679,107Q673,107 667,107Q661,107 656,105L650,103M830,45Q840,51 844,54Q848,58 852,63Q855,68 859,72Q863,76 867,79Q872,83 876,86L880,90M815,125Q826,119 831,115Q836,112 841,109Q847,107 853,105Q859,103 864,100Q870,97 875,93L880,90M356.5,55.0a9.5,7.5 0 1 0 19.0,0a9.5,7.5 0 1 0 -19.0,0M473.0,243.0a6,5 0 1 0 12,0a6,5 0 1 0 -12,0M565.8,103.0a4.5,4 0 1 0 9.0,0a4.5,4 0 1 0 -9.0,0M569.5,78.0a3.5,3 0 1 0 7.0,0a3.5,3 0 1 0 -7.0,0" fill="none" stroke="#fde8a2" stroke-width="1.3" stroke-linejoin="round"/>
</g>
<path d="M529.9,54.2 546.7,52.5 563.4,55.9 573.5,59.2 563.4,60.5 546.7,57.8 534.9,59.4Z" fill="#8ab4f8"/><path d="M545.0,40.6 560.0,43.0 573.5,41.4 560.0,46.0 546.7,45.2Z" fill="#8ab4f8"/>
<path d="M694.0,-1.0 680.7,9.8 672.3,26.5 652.2,29.0 643.8,30.7 645.5,43.3 650.7,56.6 649.4,73.0 644.0,79.0 638.6,81.0 630.2,91.0 631.9,101.1 640.2,109.5 653.6,112.8 657.0,121.2 662.0,131.3 660.4,139.7 653.6,148.0 646.9,151.4 643.6,159.8 636.9,168.2 633.5,174.9 637.0,184.8 642.5,194.3" fill="none" stroke="#5f676c" stroke-width="1.1" stroke-linejoin="round"/>
<path d="M524.9,65.1 528.2,71.8 536.6,70.1 546.7,73.5 553.4,75.1 558.4,71.8 560.1,66.8 566.8,65.1 571.8,60.0 580.2,58.4 588.6,55.9 590.2,60.0 596.9,61.7 603.7,60.0 605.3,66.8 610.4,71.8 618.7,70.9 627.1,73.5 632.0,71.8 637.0,78.0 638.6,81.0" fill="none" stroke="#5f676c" stroke-width="1.1" stroke-linejoin="round"/>
<path d="M487.7,85.2 491.1,96.1 494.4,106.1 501.1,112.8 506.1,111.2 512.9,107.8 517.9,114.5 521.2,124.6 527.9,127.9 536.3,129.6 539.7,138.0 548.0,139.7 556.4,138.8 561.5,144.7 560.6,153.1 563.1,161.5 571.5,166.5 581.6,164.8 588.3,158.1 594.1,153.1 593.3,161.5 591.6,169.8 596.7,179.0 604.2,176.6 613.8,186.0 617.9,191.6 626.0,195.7 637.0,198.4 642.5,194.3 650.7,197.0 658.9,199.8 669.9,206.6 678.0,217.6 689.0,221.7 700.0,220.3 710.9,223.0 719.0,228.5 730.0,231.3 746.5,235.4 741.0,245.0 732.8,255.9 727.3,266.8 724.6,277.8 721.8,286.0 719.0,294.0 717.0,302.0" fill="none" stroke="#5f676c" stroke-width="1.1" stroke-linejoin="round"/>
<path d="M934.0,136.0 929.0,140.0 931.0,146.0 927.0,150.0 930.0,157.0 934.0,160.0" fill="none" stroke="#5f676c" stroke-width="1.1" stroke-linejoin="round"/>
<path d="M653.6,148.0 659.0,146.0 661.7,152.0 665.8,168.4 664.4,182.0 663.0,195.7 658.9,199.8" fill="none" stroke="#5f676c" stroke-width="1.1" stroke-linejoin="round"/>
<polyline points="365.6,55.4 374.0,56.7 379.0,60.0 382.4,65.1 390.8,68.4 399.2,71.8 407.5,76.8 414.0,81.5 419.0,85.5 427.0,84.6 433.0,84.0 439.4,87.0 446.0,91.5 452.5,96.1 458.4,96.9 462.6,100.3 466.8,106.1 471.0,112.0 477.7,117.9 484.4,122.9 491.1,126.3 496.1,133.0 499.4,138.8 503.6,141.3 502.0,148.0 502.8,154.8 502.5,161.5 501.1,169.8 500.1,177.8 496.8,192.9 493.4,211.3 490.1,226.4 485.0,238.1 480.0,243.2" fill="none" stroke="#2f74e0" stroke-opacity=".5" stroke-width="6" stroke-linejoin="round" stroke-linecap="round"/>
<polyline points="365.6,55.4 374.0,56.7 379.0,60.0 382.4,65.1 390.8,68.4 399.2,71.8 407.5,76.8 414.0,81.5 419.0,85.5 427.0,84.6 433.0,84.0 439.4,87.0 446.0,91.5 452.5,96.1 458.4,96.9 462.6,100.3 466.8,106.1 471.0,112.0 477.7,117.9 484.4,122.9 491.1,126.3 496.1,133.0 499.4,138.8 503.6,141.3 502.0,148.0 502.8,154.8 502.5,161.5 501.1,169.8 500.1,177.8 496.8,192.9 493.4,211.3 490.1,226.4 485.0,238.1 480.0,243.2" fill="none" stroke="#7db3f8" stroke-opacity=".6" stroke-width="3.4" stroke-linejoin="round" stroke-linecap="round"/>
<polyline points="570.3,102.8 567.3,107.8 565.7,114.5 569.0,120.4 568.2,126.3 559.8,129.6 549.7,129.6 539.7,130.4 537.2,134.6 533.0,138.8 527.9,138.8 521.2,145.5 512.9,153.1 506.2,158.9 502.8,161.5 501.1,169.8 500.1,177.8 496.8,192.9 493.4,211.3 490.1,226.4 485.0,238.1 480.0,243.2" fill="none" stroke="#2f74e0" stroke-opacity=".5" stroke-width="6" stroke-linejoin="round" stroke-linecap="round"/>
<polyline points="570.3,102.8 567.3,107.8 565.7,114.5 569.0,120.4 568.2,126.3 559.8,129.6 549.7,129.6 539.7,130.4 537.2,134.6 533.0,138.8 527.9,138.8 521.2,145.5 512.9,153.1 506.2,158.9 502.8,161.5 501.1,169.8 500.1,177.8 496.8,192.9 493.4,211.3 490.1,226.4 485.0,238.1 480.0,243.2" fill="none" stroke="#7db3f8" stroke-opacity=".6" stroke-width="3.4" stroke-linejoin="round" stroke-linecap="round"/>
<polyline points="502.5,161.5 501.1,169.8 500.1,177.8 496.8,192.9 493.4,211.3 490.1,226.4 485.0,238.1 480.0,243.2" fill="none" stroke="#3b8af0" stroke-opacity=".75" stroke-width="4.6" stroke-linejoin="round" stroke-linecap="round"/>
<circle cx="48" cy="0" r="2.4" fill="#fff" stroke="#2b2b2b" stroke-width="1.1"/>
<circle cx="378" cy="3.6" r="2.4" fill="#fff" stroke="#2b2b2b" stroke-width="1.1"/>
<circle cx="396" cy="-1" r="2.4" fill="#fff" stroke="#2b2b2b" stroke-width="1.1"/>
<circle cx="315" cy="37" r="2.4" fill="#fff" stroke="#2b2b2b" stroke-width="1.1"/>
<circle cx="254" cy="58.6" r="2.4" fill="#fff" stroke="#2b2b2b" stroke-width="1.1"/>
<circle cx="227.8" cy="57" r="2.4" fill="#fff" stroke="#2b2b2b" stroke-width="1.1"/>
<circle cx="210.8" cy="111.6" r="2.4" fill="#fff" stroke="#2b2b2b" stroke-width="1.1"/>
<circle cx="286.9" cy="111.6" r="2.4" fill="#fff" stroke="#2b2b2b" stroke-width="1.1"/>
<circle cx="183" cy="136.8" r="2.4" fill="#fff" stroke="#2b2b2b" stroke-width="1.1"/>
<circle cx="575.5" cy="24.4" r="2.4" fill="#fff" stroke="#2b2b2b" stroke-width="1.1"/>
<circle cx="760.7" cy="16.4" r="2.4" fill="#fff" stroke="#2b2b2b" stroke-width="1.1"/>
<circle cx="901.5" cy="8.7" r="2.4" fill="#fff" stroke="#2b2b2b" stroke-width="1.1"/>
<circle cx="711.5" cy="54.5" r="2.4" fill="#fff" stroke="#2b2b2b" stroke-width="1.1"/>
<circle cx="691.8" cy="58.3" r="2.4" fill="#fff" stroke="#2b2b2b" stroke-width="1.1"/>
<circle cx="680.3" cy="75.8" r="2.4" fill="#fff" stroke="#2b2b2b" stroke-width="1.1"/>
<circle cx="803" cy="69" r="2.4" fill="#fff" stroke="#2b2b2b" stroke-width="1.1"/>
<circle cx="688.5" cy="96.3" r="2.4" fill="#fff" stroke="#2b2b2b" stroke-width="1.1"/>
<circle cx="510.7" cy="118.5" r="2.4" fill="#fff" stroke="#2b2b2b" stroke-width="1.1"/>
<circle cx="625" cy="118" r="2.4" fill="#fff" stroke="#2b2b2b" stroke-width="1.1"/>
<circle cx="767.5" cy="155" r="2.4" fill="#fff" stroke="#2b2b2b" stroke-width="1.1"/>
<circle cx="355" cy="221" r="2.4" fill="#fff" stroke="#2b2b2b" stroke-width="1.1"/>
<circle cx="422" cy="203" r="2.4" fill="#fff" stroke="#2b2b2b" stroke-width="1.1"/>
<circle cx="279.7" cy="258" r="2.4" fill="#fff" stroke="#2b2b2b" stroke-width="1.1"/>
<circle cx="168" cy="275.8" r="2.4" fill="#fff" stroke="#2b2b2b" stroke-width="1.1"/>
<circle cx="296" cy="294" r="2.4" fill="#fff" stroke="#2b2b2b" stroke-width="1.1"/>
<circle cx="384" cy="301" r="2.4" fill="#fff" stroke="#2b2b2b" stroke-width="1.1"/>
<circle cx="185.7" cy="301" r="2.4" fill="#fff" stroke="#2b2b2b" stroke-width="1.1"/>
<circle cx="756.9" cy="199.8" r="2.4" fill="#fff" stroke="#2b2b2b" stroke-width="1.1"/>
<circle cx="876.4" cy="202.5" r="2.4" fill="#fff" stroke="#2b2b2b" stroke-width="1.1"/>
<circle cx="754" cy="233" r="2.4" fill="#fff" stroke="#2b2b2b" stroke-width="1.1"/>
<circle cx="789.4" cy="249.6" r="2.4" fill="#fff" stroke="#2b2b2b" stroke-width="1.1"/>
<circle cx="724.9" cy="262.7" r="2.4" fill="#fff" stroke="#2b2b2b" stroke-width="1.1"/>
<circle cx="868" cy="276.7" r="2.4" fill="#fff" stroke="#2b2b2b" stroke-width="1.1"/>
<circle cx="468.8" cy="246.3" r="2.4" fill="#fff" stroke="#2b2b2b" stroke-width="1.1"/>
<circle cx="932" cy="70" r="2.4" fill="#fff" stroke="#2b2b2b" stroke-width="1.1"/>
<circle cx="899" cy="293" r="2.4" fill="#fff" stroke="#2b2b2b" stroke-width="1.1"/>
<circle cx="931" cy="228" r="2.4" fill="#fff" stroke="#2b2b2b" stroke-width="1.1"/>
<circle cx="366.1" cy="55.3" r="3" fill="#1a73e8" stroke="#0b1f3a" stroke-width="1.5"/>
<circle cx="570.3" cy="103.3" r="3" fill="#1a73e8" stroke="#0b1f3a" stroke-width="1.5"/>
<circle cx="479.2" cy="243.6" r="3" fill="#1a73e8" stroke="#0b1f3a" stroke-width="1.5"/>
<text x="174.5" y="22.9" font-size="12.6" font-weight="normal" text-anchor="middle" textLength="52" lengthAdjust="spacingAndGlyphs" letter-spacing="1.2" fill="#fff" stroke="#fff" stroke-width="2.4" stroke-opacity=".85" stroke-linejoin="round">WALES</text>
<text x="174.5" y="22.9" font-size="12.6" font-weight="normal" text-anchor="middle" textLength="52" lengthAdjust="spacingAndGlyphs" letter-spacing="1.2" fill="#4d5358" stroke="#4d5358" stroke-width="0.5">WALES</text>
<text x="291" y="15.8" font-size="12" font-weight="normal" text-anchor="middle" textLength="71" lengthAdjust="spacingAndGlyphs" letter-spacing="1.2" fill="#fff" stroke="#fff" stroke-width="2.4" stroke-opacity=".85" stroke-linejoin="round">ENGLAND</text>
<text x="291" y="15.8" font-size="12" font-weight="normal" text-anchor="middle" textLength="71" lengthAdjust="spacingAndGlyphs" letter-spacing="1.2" fill="#4d5358" stroke="#4d5358" stroke-width="0.35">ENGLAND</text>
<text x="314.8" y="31.9" font-size="10.9" font-weight="normal" text-anchor="middle" textLength="33" lengthAdjust="spacingAndGlyphs" fill="#fff" stroke="#fff" stroke-width="2.4" stroke-opacity=".85" stroke-linejoin="round">Oxford</text>
<text x="314.8" y="31.9" font-size="10.9" font-weight="normal" text-anchor="middle" textLength="33" lengthAdjust="spacingAndGlyphs" fill="#222" stroke="#222" stroke-width="0.35">Oxford</text>
<text x="253.8" y="52.9" font-size="10.9" font-weight="normal" text-anchor="middle" textLength="31.5" lengthAdjust="spacingAndGlyphs" fill="#fff" stroke="#fff" stroke-width="2.4" stroke-opacity=".85" stroke-linejoin="round">Bristol</text>
<text x="253.8" y="52.9" font-size="10.9" font-weight="normal" text-anchor="middle" textLength="31.5" lengthAdjust="spacingAndGlyphs" fill="#222" stroke="#222" stroke-width="0.35">Bristol</text>
<text x="227.8" y="69.3" font-size="10.9" font-weight="normal" text-anchor="middle" textLength="32" lengthAdjust="spacingAndGlyphs" fill="#fff" stroke="#fff" stroke-width="2.4" stroke-opacity=".85" stroke-linejoin="round">Cardiff</text>
<text x="227.8" y="69.3" font-size="10.9" font-weight="normal" text-anchor="middle" textLength="32" lengthAdjust="spacingAndGlyphs" fill="#222" stroke="#222" stroke-width="0.35">Cardiff</text>
<text x="366" y="48.0" font-size="12.6" font-weight="bold" text-anchor="middle" textLength="46" lengthAdjust="spacingAndGlyphs" fill="#fff" stroke="#fff" stroke-width="2.4" stroke-opacity=".85" stroke-linejoin="round">London</text>
<text x="366" y="48.0" font-size="12.6" font-weight="bold" text-anchor="middle" textLength="46" lengthAdjust="spacingAndGlyphs" fill="#111" stroke="#111" stroke-width="0.25">London</text>
<text x="210.8" y="105.6" font-size="10.6" font-weight="normal" text-anchor="middle" textLength="30" lengthAdjust="spacingAndGlyphs" fill="#fff" stroke="#fff" stroke-width="2.4" stroke-opacity=".85" stroke-linejoin="round">Exeter</text>
<text x="210.8" y="105.6" font-size="10.6" font-weight="normal" text-anchor="middle" textLength="30" lengthAdjust="spacingAndGlyphs" fill="#222" stroke="#222" stroke-width="0.35">Exeter</text>
<text x="286.9" y="106.8" font-size="10.8" font-weight="normal" text-anchor="middle" textLength="65" lengthAdjust="spacingAndGlyphs" fill="#fff" stroke="#fff" stroke-width="2.4" stroke-opacity=".85" stroke-linejoin="round">Bournemouth</text>
<text x="286.9" y="106.8" font-size="10.8" font-weight="normal" text-anchor="middle" textLength="65" lengthAdjust="spacingAndGlyphs" fill="#222" stroke="#222" stroke-width="0.35">Bournemouth</text>
<text x="183" y="130.9" font-size="10.9" font-weight="normal" text-anchor="middle" textLength="46" lengthAdjust="spacingAndGlyphs" fill="#fff" stroke="#fff" stroke-width="2.4" stroke-opacity=".85" stroke-linejoin="round">Plymouth</text>
<text x="183" y="130.9" font-size="10.9" font-weight="normal" text-anchor="middle" textLength="46" lengthAdjust="spacingAndGlyphs" fill="#222" stroke="#222" stroke-width="0.35">Plymouth</text>
<text x="634.3" y="25.2" font-size="16.6" font-weight="bold" text-anchor="middle" textLength="97" lengthAdjust="spacingAndGlyphs" fill="#fff" stroke="#fff" stroke-width="2.4" stroke-opacity=".85" stroke-linejoin="round">Netherlands</text>
<text x="634.3" y="25.2" font-size="16.6" font-weight="bold" text-anchor="middle" textLength="97" lengthAdjust="spacingAndGlyphs" fill="#111" stroke="#111" stroke-width="0.25">Netherlands</text>
<text x="576" y="41.0" font-size="13.9" font-weight="normal" text-anchor="middle" textLength="65" lengthAdjust="spacingAndGlyphs" fill="#fff" stroke="#fff" stroke-width="2.4" stroke-opacity=".85" stroke-linejoin="round">Rotterdam</text>
<text x="576" y="41.0" font-size="13.9" font-weight="normal" text-anchor="middle" textLength="65" lengthAdjust="spacingAndGlyphs" fill="#222" stroke="#222" stroke-width="0.5">Rotterdam</text>
<text x="760" y="10.2" font-size="13.9" font-weight="normal" text-anchor="middle" textLength="54" lengthAdjust="spacingAndGlyphs" fill="#fff" stroke="#fff" stroke-width="2.4" stroke-opacity=".85" stroke-linejoin="round">Bielefeld</text>
<text x="760" y="10.2" font-size="13.9" font-weight="normal" text-anchor="middle" textLength="54" lengthAdjust="spacingAndGlyphs" fill="#222" stroke="#222" stroke-width="0.5">Bielefeld</text>
<text x="901" y="4.6" font-size="11" font-weight="normal" text-anchor="middle" textLength="55" lengthAdjust="spacingAndGlyphs" fill="#fff" stroke="#fff" stroke-width="2.4" stroke-opacity=".85" stroke-linejoin="round">Magdeburg</text>
<text x="901" y="4.6" font-size="11" font-weight="normal" text-anchor="middle" textLength="55" lengthAdjust="spacingAndGlyphs" fill="#222" stroke="#222" stroke-width="0.35">Magdeburg</text>
<text x="711" y="48.0" font-size="13.9" font-weight="normal" text-anchor="middle" textLength="61.5" lengthAdjust="spacingAndGlyphs" fill="#fff" stroke="#fff" stroke-width="2.4" stroke-opacity=".85" stroke-linejoin="round">Dortmund</text>
<text x="711" y="48.0" font-size="13.9" font-weight="normal" text-anchor="middle" textLength="61.5" lengthAdjust="spacingAndGlyphs" fill="#222" stroke="#222" stroke-width="0.5">Dortmund</text>
<text x="667" y="64.2" font-size="13.3" font-weight="normal" text-anchor="middle" textLength="36.4" lengthAdjust="spacingAndGlyphs" fill="#fff" stroke="#fff" stroke-width="2.4" stroke-opacity=".85" stroke-linejoin="round">Essen</text>
<text x="667" y="64.2" font-size="13.3" font-weight="normal" text-anchor="middle" textLength="36.4" lengthAdjust="spacingAndGlyphs" fill="#222" stroke="#222" stroke-width="0.5">Essen</text>
<text x="719" y="81.6" font-size="13.9" font-weight="normal" text-anchor="middle" textLength="67.5" lengthAdjust="spacingAndGlyphs" fill="#fff" stroke="#fff" stroke-width="2.4" stroke-opacity=".85" stroke-linejoin="round">Düsseldorf</text>
<text x="719" y="81.6" font-size="13.9" font-weight="normal" text-anchor="middle" textLength="67.5" lengthAdjust="spacingAndGlyphs" fill="#222" stroke="#222" stroke-width="0.5">Düsseldorf</text>
<text x="803" y="63.9" font-size="10.7" font-weight="normal" text-anchor="middle" textLength="32" lengthAdjust="spacingAndGlyphs" fill="#fff" stroke="#fff" stroke-width="2.4" stroke-opacity=".85" stroke-linejoin="round">Kassel</text>
<text x="803" y="63.9" font-size="10.7" font-weight="normal" text-anchor="middle" textLength="32" lengthAdjust="spacingAndGlyphs" fill="#333" stroke="#333" stroke-width="0.35">Kassel</text>
<text x="935" y="60.0" font-size="12.6" font-weight="bold" text-anchor="middle" textLength="42" lengthAdjust="spacingAndGlyphs" fill="#fff" stroke="#fff" stroke-width="2.4" stroke-opacity=".85" stroke-linejoin="round">Leipzig</text>
<text x="935" y="60.0" font-size="12.6" font-weight="bold" text-anchor="middle" textLength="42" lengthAdjust="spacingAndGlyphs" fill="#111" stroke="#111" stroke-width="0.25">Leipzig</text>
<text x="604.8" y="81.2" font-size="12.8" font-weight="normal" text-anchor="middle" textLength="47" lengthAdjust="spacingAndGlyphs" fill="#fff" stroke="#fff" stroke-width="2.4" stroke-opacity=".85" stroke-linejoin="round">Antwerp</text>
<text x="604.8" y="81.2" font-size="12.8" font-weight="normal" text-anchor="middle" textLength="47" lengthAdjust="spacingAndGlyphs" fill="#222" stroke="#222" stroke-width="0.5">Antwerp</text>
<text x="570" y="95.5" font-size="12.6" font-weight="bold" text-anchor="middle" textLength="53" lengthAdjust="spacingAndGlyphs" fill="#fff" stroke="#fff" stroke-width="2.4" stroke-opacity=".85" stroke-linejoin="round">Brussels</text>
<text x="570" y="95.5" font-size="12.6" font-weight="bold" text-anchor="middle" textLength="53" lengthAdjust="spacingAndGlyphs" fill="#111" stroke="#111" stroke-width="0.25">Brussels</text>
<text x="844" y="91.4" font-size="16.6" font-weight="bold" text-anchor="middle" textLength="72.5" lengthAdjust="spacingAndGlyphs" fill="#fff" stroke="#fff" stroke-width="2.4" stroke-opacity=".85" stroke-linejoin="round">Germany</text>
<text x="844" y="91.4" font-size="16.6" font-weight="bold" text-anchor="middle" textLength="72.5" lengthAdjust="spacingAndGlyphs" fill="#111" stroke="#111" stroke-width="0.25">Germany</text>
<text x="689" y="113.6" font-size="13.8" font-weight="normal" text-anchor="middle" textLength="51.4" lengthAdjust="spacingAndGlyphs" fill="#fff" stroke="#fff" stroke-width="2.4" stroke-opacity=".85" stroke-linejoin="round">Cologne</text>
<text x="689" y="113.6" font-size="13.8" font-weight="normal" text-anchor="middle" textLength="51.4" lengthAdjust="spacingAndGlyphs" fill="#222" stroke="#222" stroke-width="0.5">Cologne</text>
<text x="525.8" y="122.6" font-size="10.7" font-weight="normal" text-anchor="middle" textLength="19" lengthAdjust="spacingAndGlyphs" fill="#fff" stroke="#fff" stroke-width="2.4" stroke-opacity=".85" stroke-linejoin="round">Lille</text>
<text x="525.8" y="122.6" font-size="10.7" font-weight="normal" text-anchor="middle" textLength="19" lengthAdjust="spacingAndGlyphs" fill="#222" stroke="#222" stroke-width="0.35">Lille</text>
<text x="642.6" y="122.1" font-size="10.7" font-weight="normal" text-anchor="middle" textLength="26" lengthAdjust="spacingAndGlyphs" fill="#fff" stroke="#fff" stroke-width="2.4" stroke-opacity=".85" stroke-linejoin="round">Liège</text>
<text x="642.6" y="122.1" font-size="10.7" font-weight="normal" text-anchor="middle" textLength="26" lengthAdjust="spacingAndGlyphs" fill="#222" stroke="#222" stroke-width="0.35">Liège</text>
<text x="584.3" y="134.2" font-size="16.4" font-weight="bold" text-anchor="middle" textLength="64" lengthAdjust="spacingAndGlyphs" fill="#fff" stroke="#fff" stroke-width="2.4" stroke-opacity=".85" stroke-linejoin="round">Belgium</text>
<text x="584.3" y="134.2" font-size="16.4" font-weight="bold" text-anchor="middle" textLength="64" lengthAdjust="spacingAndGlyphs" fill="#111" stroke="#111" stroke-width="0.25">Belgium</text>
<text x="767" y="149.6" font-size="14.1" font-weight="normal" text-anchor="middle" textLength="57.4" lengthAdjust="spacingAndGlyphs" fill="#fff" stroke="#fff" stroke-width="2.4" stroke-opacity=".85" stroke-linejoin="round">Frankfurt</text>
<text x="767" y="149.6" font-size="14.1" font-weight="normal" text-anchor="middle" textLength="57.4" lengthAdjust="spacingAndGlyphs" fill="#222" stroke="#222" stroke-width="0.5">Frankfurt</text>
<text x="255" y="207.5" font-size="13.9" font-weight="bold" text-anchor="middle" textLength="63.7" lengthAdjust="spacingAndGlyphs" fill="#fff" stroke="#fff" stroke-width="2.4" stroke-opacity=".85" stroke-linejoin="round">Guernsey</text>
<text x="255" y="207.5" font-size="13.9" font-weight="bold" text-anchor="middle" textLength="63.7" lengthAdjust="spacingAndGlyphs" fill="#111" stroke="#111" stroke-width="0.25">Guernsey</text>
<text x="274.5" y="224.0" font-size="14" font-weight="bold" text-anchor="middle" textLength="45" lengthAdjust="spacingAndGlyphs" fill="#fff" stroke="#fff" stroke-width="2.4" stroke-opacity=".85" stroke-linejoin="round">Jersey</text>
<text x="274.5" y="224.0" font-size="14" font-weight="bold" text-anchor="middle" textLength="45" lengthAdjust="spacingAndGlyphs" fill="#111" stroke="#111" stroke-width="0.25">Jersey</text>
<text x="355" y="215.0" font-size="10.4" font-weight="normal" text-anchor="middle" textLength="23.8" lengthAdjust="spacingAndGlyphs" fill="#fff" stroke="#fff" stroke-width="2.4" stroke-opacity=".85" stroke-linejoin="round">Caen</text>
<text x="355" y="215.0" font-size="10.4" font-weight="normal" text-anchor="middle" textLength="23.8" lengthAdjust="spacingAndGlyphs" fill="#222" stroke="#222" stroke-width="0.35">Caen</text>
<text x="422" y="196.7" font-size="10.4" font-weight="normal" text-anchor="middle" textLength="29.5" lengthAdjust="spacingAndGlyphs" fill="#fff" stroke="#fff" stroke-width="2.4" stroke-opacity=".85" stroke-linejoin="round">Rouen</text>
<text x="422" y="196.7" font-size="10.4" font-weight="normal" text-anchor="middle" textLength="29.5" lengthAdjust="spacingAndGlyphs" fill="#222" stroke="#222" stroke-width="0.35">Rouen</text>
<text x="280" y="251.6" font-size="10.8" font-weight="normal" text-anchor="middle" textLength="52" lengthAdjust="spacingAndGlyphs" fill="#fff" stroke="#fff" stroke-width="2.4" stroke-opacity=".85" stroke-linejoin="round">Saint-Malo</text>
<text x="280" y="251.6" font-size="10.8" font-weight="normal" text-anchor="middle" textLength="52" lengthAdjust="spacingAndGlyphs" fill="#222" stroke="#222" stroke-width="0.35">Saint-Malo</text>
<text x="167.6" y="269.9" font-size="10.7" font-weight="normal" text-anchor="middle" textLength="25" lengthAdjust="spacingAndGlyphs" fill="#fff" stroke="#fff" stroke-width="2.4" stroke-opacity=".85" stroke-linejoin="round">Brest</text>
<text x="167.6" y="269.9" font-size="10.7" font-weight="normal" text-anchor="middle" textLength="25" lengthAdjust="spacingAndGlyphs" fill="#222" stroke="#222" stroke-width="0.35">Brest</text>
<text x="185.7" y="296.7" font-size="10.9" font-weight="normal" text-anchor="middle" textLength="42" lengthAdjust="spacingAndGlyphs" fill="#fff" stroke="#fff" stroke-width="2.4" stroke-opacity=".85" stroke-linejoin="round">Quimper</text>
<text x="185.7" y="296.7" font-size="10.9" font-weight="normal" text-anchor="middle" textLength="42" lengthAdjust="spacingAndGlyphs" fill="#222" stroke="#222" stroke-width="0.35">Quimper</text>
<text x="295.6" y="288.6" font-size="10.4" font-weight="normal" text-anchor="middle" textLength="35" lengthAdjust="spacingAndGlyphs" fill="#fff" stroke="#fff" stroke-width="2.4" stroke-opacity=".85" stroke-linejoin="round">Rennes</text>
<text x="295.6" y="288.6" font-size="10.4" font-weight="normal" text-anchor="middle" textLength="35" lengthAdjust="spacingAndGlyphs" fill="#222" stroke="#222" stroke-width="0.35">Rennes</text>
<text x="380.4" y="295.6" font-size="10.7" font-weight="normal" text-anchor="middle" textLength="41" lengthAdjust="spacingAndGlyphs" fill="#fff" stroke="#fff" stroke-width="2.4" stroke-opacity=".85" stroke-linejoin="round">Le Mans</text>
<text x="380.4" y="295.6" font-size="10.7" font-weight="normal" text-anchor="middle" textLength="41" lengthAdjust="spacingAndGlyphs" fill="#222" stroke="#222" stroke-width="0.35">Le Mans</text>
<text x="648.8" y="187.1" font-size="16.5" font-weight="bold" text-anchor="middle" textLength="100" lengthAdjust="spacingAndGlyphs" fill="#fff" stroke="#fff" stroke-width="2.4" stroke-opacity=".85" stroke-linejoin="round">Luxembourg</text>
<text x="648.8" y="187.1" font-size="16.5" font-weight="bold" text-anchor="middle" textLength="100" lengthAdjust="spacingAndGlyphs" fill="#111" stroke="#111" stroke-width="0.25">Luxembourg</text>
<text x="756.6" y="194.1" font-size="10.8" font-weight="normal" text-anchor="middle" textLength="50.6" lengthAdjust="spacingAndGlyphs" fill="#fff" stroke="#fff" stroke-width="2.4" stroke-opacity=".85" stroke-linejoin="round">Mannheim</text>
<text x="756.6" y="194.1" font-size="10.8" font-weight="normal" text-anchor="middle" textLength="50.6" lengthAdjust="spacingAndGlyphs" fill="#333" stroke="#333" stroke-width="0.35">Mannheim</text>
<text x="876.4" y="196.3" font-size="13.1" font-weight="bold" text-anchor="middle" textLength="69.7" lengthAdjust="spacingAndGlyphs" fill="#fff" stroke="#fff" stroke-width="2.4" stroke-opacity=".85" stroke-linejoin="round">Nuremberg</text>
<text x="876.4" y="196.3" font-size="13.1" font-weight="bold" text-anchor="middle" textLength="69.7" lengthAdjust="spacingAndGlyphs" fill="#111" stroke="#111" stroke-width="0.25">Nuremberg</text>
<text x="754.7" y="227.8" font-size="10.8" font-weight="normal" text-anchor="middle" textLength="46.5" lengthAdjust="spacingAndGlyphs" fill="#fff" stroke="#fff" stroke-width="2.4" stroke-opacity=".85" stroke-linejoin="round">Karlsruhe</text>
<text x="754.7" y="227.8" font-size="10.8" font-weight="normal" text-anchor="middle" textLength="46.5" lengthAdjust="spacingAndGlyphs" fill="#333" stroke="#333" stroke-width="0.35">Karlsruhe</text>
<text x="789.7" y="243.4" font-size="13.2" font-weight="bold" text-anchor="middle" textLength="55" lengthAdjust="spacingAndGlyphs" fill="#fff" stroke="#fff" stroke-width="2.4" stroke-opacity=".85" stroke-linejoin="round">Stuttgart</text>
<text x="789.7" y="243.4" font-size="13.2" font-weight="bold" text-anchor="middle" textLength="55" lengthAdjust="spacingAndGlyphs" fill="#111" stroke="#111" stroke-width="0.25">Stuttgart</text>
<text x="693.7" y="267.2" font-size="10.8" font-weight="normal" text-anchor="middle" textLength="52.8" lengthAdjust="spacingAndGlyphs" fill="#fff" stroke="#fff" stroke-width="2.4" stroke-opacity=".85" stroke-linejoin="round">Strasbourg</text>
<text x="693.7" y="267.2" font-size="10.8" font-weight="normal" text-anchor="middle" textLength="52.8" lengthAdjust="spacingAndGlyphs" fill="#333" stroke="#333" stroke-width="0.35">Strasbourg</text>
<text x="866" y="271.9" font-size="10.8" font-weight="normal" text-anchor="middle" textLength="48" lengthAdjust="spacingAndGlyphs" fill="#fff" stroke="#fff" stroke-width="2.4" stroke-opacity=".85" stroke-linejoin="round">Augsburg</text>
<text x="866" y="271.9" font-size="10.8" font-weight="normal" text-anchor="middle" textLength="48" lengthAdjust="spacingAndGlyphs" fill="#333" stroke="#333" stroke-width="0.35">Augsburg</text>
<text x="899.2" y="285.3" font-size="13.1" font-weight="bold" text-anchor="middle" textLength="45.8" lengthAdjust="spacingAndGlyphs" fill="#fff" stroke="#fff" stroke-width="2.4" stroke-opacity=".85" stroke-linejoin="round">Munich</text>
<text x="899.2" y="285.3" font-size="13.1" font-weight="bold" text-anchor="middle" textLength="45.8" lengthAdjust="spacingAndGlyphs" fill="#111" stroke="#111" stroke-width="0.25">Munich</text>
<text x="479" y="236.2" font-size="13.5" font-weight="bold" text-anchor="middle" textLength="34" lengthAdjust="spacingAndGlyphs" fill="#fff" stroke="#fff" stroke-width="2.4" stroke-opacity=".85" stroke-linejoin="round">Paris</text>
<text x="479" y="236.2" font-size="13.5" font-weight="bold" text-anchor="middle" textLength="34" lengthAdjust="spacingAndGlyphs" fill="#111" stroke="#111" stroke-width="0.25">Paris</text>
<text x="474.3" y="261.1" font-size="10.9" font-weight="normal" text-anchor="middle" textLength="47" lengthAdjust="spacingAndGlyphs" fill="#fff" stroke="#fff" stroke-width="2.4" stroke-opacity=".85" stroke-linejoin="round">Versailles</text>
<text x="474.3" y="261.1" font-size="10.9" font-weight="normal" text-anchor="middle" textLength="47" lengthAdjust="spacingAndGlyphs" fill="#222" stroke="#222" stroke-width="0.35">Versailles</text>
<text x="923" y="226.3" font-size="10.8" font-weight="normal" text-anchor="middle" textLength="53" lengthAdjust="spacingAndGlyphs" fill="#fff" stroke="#fff" stroke-width="2.4" stroke-opacity=".85" stroke-linejoin="round">Regensburg</text>
<text x="923" y="226.3" font-size="10.8" font-weight="normal" text-anchor="middle" textLength="53" lengthAdjust="spacingAndGlyphs" fill="#333" stroke="#333" stroke-width="0.35">Regensburg</text>
<text x="297.5" y="160" font-size="11" font-style="italic" fill="#3f72d4" text-anchor="middle" textLength="78" lengthAdjust="spacingAndGlyphs" transform="rotate(-13 297.5 157)">English Channel</text>
<text x="11" y="233" font-size="11" fill="#3f72d4" text-anchor="middle" textLength="18">Sea</text>
<g transform="translate(366.1,54.5)"><path d="M0,0C-.8,-6 -4.5,-10.5 -9.84,-15.04A12.85,12.85 0 1 1 9.84,-15.04C4.5,-10.5 .8,-6 0,0Z" fill="#ea4335" stroke="#c5221f" stroke-width=".5"/><text x="0" y="-17.400" font-size="16.200" fill="#fff" text-anchor="middle">C</text></g>
<g transform="translate(570.3,102.5)"><path d="M0,0C-.8,-6 -4.5,-10.5 -9.84,-15.04A12.85,12.85 0 1 1 9.84,-15.04C4.5,-10.5 .8,-6 0,0Z" fill="#ea4335" stroke="#c5221f" stroke-width=".5"/><text x="0" y="-17.400" font-size="16.200" fill="#fff" text-anchor="middle">A</text></g>
<g transform="translate(479.2,242.8)"><path d="M0,0C-.8,-6 -4.5,-10.5 -9.84,-15.04A12.85,12.85 0 1 1 9.84,-15.04C4.5,-10.5 .8,-6 0,0Z" fill="#ea4335" stroke="#c5221f" stroke-width=".5"/><text x="0" y="-17.400" font-size="16.200" fill="#fff" text-anchor="middle">B</text></g>
</g>
<g filter="url(#sh)">
<rect x="10" y="10" width="168" height="40" rx="2" fill="#fff"/>
<rect x="885" y="10" width="40" height="40" rx="2" fill="#fff"/>
<rect x="885" y="123" width="40" height="40" rx="2" fill="#fff"/>
<rect x="885" y="195" width="40" height="80" rx="2" fill="#fff"/>
</g>
<rect x="79" y="10" width="1" height="40" fill="#e6e6e6"/>
<text x="44.750" y="35.900" font-size="18" font-weight="bold" fill="#000" text-anchor="middle" textLength="34.800" lengthAdjust="spacingAndGlyphs">Map</text>
<text x="128.800" y="35.900" font-size="18" fill="#565656" text-anchor="middle" textLength="63.600" lengthAdjust="spacingAndGlyphs">Satellite</text>
<path d="M897.1,27.6V22h5.6M907.5,22h5.6v5.6M913.1,32.400V38h-5.6M902.7,38h-5.600v-5.600" fill="none" stroke="#666" stroke-width="2"/>
<path d="M896,214.500h18M905,205.500v18" stroke="#666" stroke-width="3" fill="none"/><rect x="890" y="235" width="30" height="1" fill="#e6e6e6"/><path d="M896,255.800h18" stroke="#666" stroke-width="3" fill="none"/>
<g transform="translate(904.4,133.1)"><path d="M-5.700,5.300Q-5.700,4.600 -4.400,4.600H4.400Q5.700,4.600 5.900,5.800L8,14.400Q8.200,15.600 7,15.600L5.400,15.400 4.400,11V24.300H.6V17H-.6V24.300H-4.400V11L-5.400,15.400 -7,15.600Q-8.200,15.600 -8,14.400Z" fill="#fbb829" stroke="#a8741a" stroke-width=".6"/><circle r="5.200" fill="#fbb829" stroke="#a8741a" stroke-width=".6"/><path d="M-3.400,4.900L0,9.600 3.400,4.900Z" fill="#d9822b"/></g>
<text x="10" y="291.600" font-size="19.500" font-weight="normal" textLength="56.500" lengthAdjust="spacingAndGlyphs" stroke="#fff" stroke-width="2.5" stroke-opacity=".9" paint-order="stroke" letter-spacing="-.5"><tspan fill="#4285f4">G</tspan><tspan fill="#ea4335">o</tspan><tspan fill="#fbbc05">o</tspan><tspan fill="#4285f4">g</tspan><tspan fill="#34a853">l</tspan><tspan fill="#ea4335">e</tspan></text>
<rect x="443" y="286" width="96.500" height="14" fill="#f5f5f5" fill-opacity=".72"/><rect x="540.500" y="286" width="393.500" height="14" fill="#f5f5f5" fill-opacity=".72"/>
<text x="448" y="298.700" font-size="10.400" fill="#000" textLength="86" lengthAdjust="spacingAndGlyphs">Keyboard shortcuts</text>
<text x="546.800" y="298.700" font-size="10.400" fill="#222" textLength="342" lengthAdjust="spacingAndGlyphs">Map data ©2024 GeoBasis-DE/BKG (©2009), Google, Inst. Geogr. Nacional</text>
<text x="901.500" y="298.700" font-size="10.400" fill="#000" textLength="27" lengthAdjust="spacingAndGlyphs">Terms</text></svg>
</body>
</html>
